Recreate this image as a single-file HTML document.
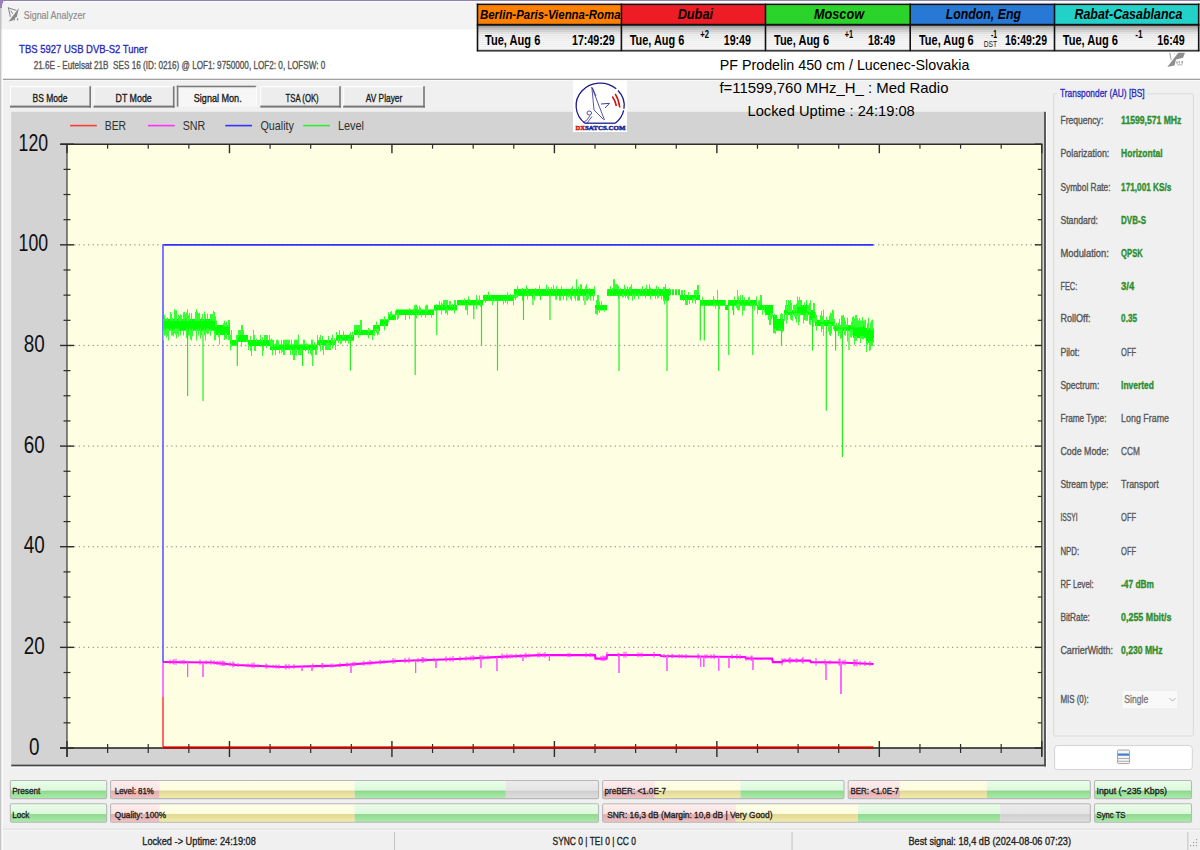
<!DOCTYPE html>
<html><head><meta charset="utf-8"><title>Signal Analyzer</title>
<style>html,body{margin:0;padding:0;width:1200px;height:850px;overflow:hidden;background:#f0f0f0} svg{display:block} text{white-space:pre}</style>
</head><body>
<svg width="1200" height="850" viewBox="0 0 1200 850">
<defs>
<linearGradient id="clk" x1="0" y1="0" x2="0" y2="1">
<stop offset="0" stop-color="#9c9c9c"/><stop offset="0.12" stop-color="#c4c4c4"/><stop offset="0.35" stop-color="#f2f2f2"/><stop offset="1" stop-color="#ffffff"/>
</linearGradient>
<pattern id="stripes" x="0" y="0" width="4" height="2.2" patternUnits="userSpaceOnUse"><rect x="0" y="0" width="4" height="1" fill="#000" fill-opacity="0.06"/></pattern>
<linearGradient id="bt_g" x1="0" y1="0" x2="0" y2="1"><stop offset="0" stop-color="#eafdea"/><stop offset="1" stop-color="#dcf8dc"/></linearGradient>
<linearGradient id="bb_g" x1="0" y1="0" x2="0" y2="1"><stop offset="0" stop-color="#88d488"/><stop offset="0.2" stop-color="#94dc94"/><stop offset="1" stop-color="#aaecaa"/></linearGradient>
<linearGradient id="bt_p" x1="0" y1="0" x2="0" y2="1"><stop offset="0" stop-color="#fdeeee"/><stop offset="1" stop-color="#fbe2e2"/></linearGradient>
<linearGradient id="bb_p" x1="0" y1="0" x2="0" y2="1"><stop offset="0" stop-color="#dca8a8"/><stop offset="0.2" stop-color="#e4b0b0"/><stop offset="1" stop-color="#f0c4c4"/></linearGradient>
<linearGradient id="bt_y" x1="0" y1="0" x2="0" y2="1"><stop offset="0" stop-color="#fefeea"/><stop offset="1" stop-color="#fcfcdc"/></linearGradient>
<linearGradient id="bb_y" x1="0" y1="0" x2="0" y2="1"><stop offset="0" stop-color="#ddd28c"/><stop offset="0.2" stop-color="#e6dc98"/><stop offset="1" stop-color="#f2ecb0"/></linearGradient>
<linearGradient id="bt_n" x1="0" y1="0" x2="0" y2="1"><stop offset="0" stop-color="#ececec"/><stop offset="1" stop-color="#e4e4e4"/></linearGradient>
<linearGradient id="bb_n" x1="0" y1="0" x2="0" y2="1"><stop offset="0" stop-color="#cccccc"/><stop offset="0.2" stop-color="#d2d2d2"/><stop offset="1" stop-color="#dedede"/></linearGradient>
</defs>
<rect x="0.00" y="0.00" width="1200.00" height="850.00" fill="#f0f0f0"/>
<rect x="0.00" y="0.00" width="1200.00" height="1.20" fill="#8c84ac"/>
<rect x="0.00" y="0.00" width="3.00" height="8.00" fill="#9a80b8"/>
<path d="M2,6 Q2,1.5 6,1.5 L1200,1.5 L1200,29.5 L2,29.5 Z" fill="#f3f3f3"/>
<rect x="5.00" y="1.20" width="1195.00" height="1.00" fill="#ffffff"/>
<rect x="0.00" y="8.00" width="1.50" height="842.00" fill="#c4c4c4"/>
<rect x="1.50" y="29.50" width="1.50" height="821.00" fill="#fafafa"/>
<rect x="3.00" y="29.50" width="1197.00" height="49.50" fill="#ffffff"/>
<rect x="3.00" y="78.70" width="1197.00" height="1.30" fill="#a0a0a0"/>
<rect x="3.00" y="80.00" width="1197.00" height="1.00" fill="#f8f8f8"/>
<g fill="none" stroke="#858585" stroke-width="1.0" stroke-linecap="round"><path d="M8.4,7.9 L16,10.3 M8.4,7.9 L10.3,16.5 M11,11 L12.4,13.4"/></g><path d="M18.9,8.0 L17.0,16.2 L12.6,20.6 L8.6,21.6 Z" fill="#8a8a8a"/><rect x="13.7" y="18.2" width="1.3" height="2.2" fill="#8e8e8e"/><rect x="16.9" y="18.2" width="1.3" height="2.2" fill="#8e8e8e"/>
<text x="23.70" y="19.20" font-family="Liberation Sans" font-size="11.52" fill="#8c8c8c" font-weight="normal" font-style="normal" text-anchor="start" textLength="61.7" lengthAdjust="spacingAndGlyphs" stroke="#8c8c8c" stroke-width="0.2">Signal Analyzer</text>
<text x="19.10" y="52.70" font-family="Liberation Sans" font-size="11.80" fill="#2a2ab8" font-weight="normal" font-style="normal" text-anchor="start" textLength="128.2" lengthAdjust="spacingAndGlyphs" stroke="#2a2ab8" stroke-width="0.35">TBS 5927 USB DVB-S2 Tuner</text>
<text x="33.70" y="69.40" font-family="Liberation Sans" font-size="10.97" fill="#555555" font-weight="normal" font-style="normal" text-anchor="start" textLength="291.7" lengthAdjust="spacingAndGlyphs" stroke="#555555" stroke-width="0.35">21.6E - Eutelsat 21B  SES 16 (ID: 0216) @ LOF1: 9750000, LOF2: 0, LOFSW: 0</text>
<rect x="477.50" y="4.30" width="143.90" height="19.70" fill="#ff8000"/>
<rect x="477.50" y="25.70" width="143.90" height="25.10" fill="url(#clk)"/>
<rect x="477.50" y="25.70" width="143.90" height="25.10" fill="url(#stripes)"/>
<text x="480.00" y="19.00" font-family="Liberation Sans" font-size="13.60" fill="#000" font-weight="bold" font-style="italic" text-anchor="start" textLength="140.5" lengthAdjust="spacingAndGlyphs">Berlin-Paris-Vienna-Roma</text>
<rect x="621.40" y="4.30" width="144.10" height="19.70" fill="#ee1c25"/>
<rect x="621.40" y="25.70" width="144.10" height="25.10" fill="url(#clk)"/>
<rect x="621.40" y="25.70" width="144.10" height="25.10" fill="url(#stripes)"/>
<text x="677.70" y="19.00" font-family="Liberation Sans" font-size="14.20" fill="#000" font-weight="bold" font-style="italic" text-anchor="start" textLength="35.3" lengthAdjust="spacingAndGlyphs">Dubai</text>
<rect x="765.50" y="4.30" width="144.70" height="19.70" fill="#2ad42a"/>
<rect x="765.50" y="25.70" width="144.70" height="25.10" fill="url(#clk)"/>
<rect x="765.50" y="25.70" width="144.70" height="25.10" fill="url(#stripes)"/>
<text x="814.00" y="19.00" font-family="Liberation Sans" font-size="14.20" fill="#000" font-weight="bold" font-style="italic" text-anchor="start" textLength="50.0" lengthAdjust="spacingAndGlyphs">Moscow</text>
<rect x="910.20" y="4.30" width="144.30" height="19.70" fill="#2878d6"/>
<rect x="910.20" y="25.70" width="144.30" height="25.10" fill="url(#clk)"/>
<rect x="910.20" y="25.70" width="144.30" height="25.10" fill="url(#stripes)"/>
<text x="945.70" y="19.00" font-family="Liberation Sans" font-size="14.20" fill="#000" font-weight="bold" font-style="italic" text-anchor="start" textLength="75.3" lengthAdjust="spacingAndGlyphs">London, Eng</text>
<rect x="1054.50" y="4.30" width="144.20" height="19.70" fill="#22d2c8"/>
<rect x="1054.50" y="25.70" width="144.20" height="25.10" fill="url(#clk)"/>
<rect x="1054.50" y="25.70" width="144.20" height="25.10" fill="url(#stripes)"/>
<text x="1074.40" y="19.00" font-family="Liberation Sans" font-size="14.20" fill="#000" font-weight="bold" font-style="italic" text-anchor="start" textLength="108.0" lengthAdjust="spacingAndGlyphs">Rabat-Casablanca</text>
<g fill="#111">
<rect x="476.80" y="3.60" width="722.70" height="1.50" fill="#111"/>
<rect x="476.80" y="23.80" width="722.70" height="2.00" fill="#111"/>
<rect x="476.80" y="49.80" width="722.70" height="1.80" fill="#3a3a3a"/>
<rect x="476.70" y="3.60" width="1.60" height="47.60" fill="#111"/>
<rect x="620.60" y="3.60" width="1.60" height="47.60" fill="#111"/>
<rect x="764.70" y="3.60" width="1.60" height="47.60" fill="#111"/>
<rect x="909.40" y="3.60" width="1.60" height="47.60" fill="#111"/>
<rect x="1053.70" y="3.60" width="1.60" height="47.60" fill="#111"/>
<rect x="1197.90" y="3.60" width="1.60" height="47.60" fill="#111"/>
</g>
<text x="485.00" y="45.30" font-family="Liberation Sans" font-size="14.30" fill="#000" font-weight="bold" font-style="normal" text-anchor="start" textLength="55.3" lengthAdjust="spacingAndGlyphs">Tue, Aug 6</text>
<text x="572.00" y="45.30" font-family="Liberation Sans" font-size="14.30" fill="#000" font-weight="bold" font-style="normal" text-anchor="start" textLength="42.7" lengthAdjust="spacingAndGlyphs">17:49:29</text>
<text x="629.70" y="45.30" font-family="Liberation Sans" font-size="14.30" fill="#000" font-weight="bold" font-style="normal" text-anchor="start" textLength="54.6" lengthAdjust="spacingAndGlyphs">Tue, Aug 6</text>
<text x="723.70" y="45.30" font-family="Liberation Sans" font-size="14.30" fill="#000" font-weight="bold" font-style="normal" text-anchor="start" textLength="27.3" lengthAdjust="spacingAndGlyphs">19:49</text>
<text x="700.30" y="37.60" font-family="Liberation Sans" font-size="10.00" fill="#000" font-weight="bold" font-style="normal" text-anchor="start" textLength="8.7" lengthAdjust="spacingAndGlyphs">+2</text>
<text x="774.00" y="45.30" font-family="Liberation Sans" font-size="14.30" fill="#000" font-weight="bold" font-style="normal" text-anchor="start" textLength="55.0" lengthAdjust="spacingAndGlyphs">Tue, Aug 6</text>
<text x="868.00" y="45.30" font-family="Liberation Sans" font-size="14.30" fill="#000" font-weight="bold" font-style="normal" text-anchor="start" textLength="27.3" lengthAdjust="spacingAndGlyphs">18:49</text>
<text x="844.70" y="37.60" font-family="Liberation Sans" font-size="10.00" fill="#000" font-weight="bold" font-style="normal" text-anchor="start" textLength="8.3" lengthAdjust="spacingAndGlyphs">+1</text>
<text x="919.00" y="45.30" font-family="Liberation Sans" font-size="14.30" fill="#000" font-weight="bold" font-style="normal" text-anchor="start" textLength="54.7" lengthAdjust="spacingAndGlyphs">Tue, Aug 6</text>
<text x="1005.00" y="45.30" font-family="Liberation Sans" font-size="14.30" fill="#000" font-weight="bold" font-style="normal" text-anchor="start" textLength="42.0" lengthAdjust="spacingAndGlyphs">16:49:29</text>
<text x="991.00" y="37.60" font-family="Liberation Sans" font-size="10.00" fill="#000" font-weight="bold" font-style="normal" text-anchor="start" textLength="6.0" lengthAdjust="spacingAndGlyphs">-1</text>
<text x="1062.70" y="45.30" font-family="Liberation Sans" font-size="14.30" fill="#000" font-weight="bold" font-style="normal" text-anchor="start" textLength="55.3" lengthAdjust="spacingAndGlyphs">Tue, Aug 6</text>
<text x="1157.30" y="45.30" font-family="Liberation Sans" font-size="14.30" fill="#000" font-weight="bold" font-style="normal" text-anchor="start" textLength="27.4" lengthAdjust="spacingAndGlyphs">16:49</text>
<text x="1135.30" y="37.60" font-family="Liberation Sans" font-size="10.00" fill="#000" font-weight="bold" font-style="normal" text-anchor="start" textLength="7.4" lengthAdjust="spacingAndGlyphs">-1</text>
<text x="983.70" y="47.30" font-family="Liberation Sans" font-size="9.50" fill="#222" font-weight="normal" font-style="normal" text-anchor="start" textLength="13.3" lengthAdjust="spacingAndGlyphs">DST</text>
<g fill="#8e8e8e"><path d="M1167.3,67 L1178.3,52.8 L1185,52.8 L1183,57.8 L1176,59.5 L1174.5,65.5 Z"/><path d="M1169.2,52.8 L1170.3,52.8 L1171.6,60 L1170.8,60 Z" fill="#9a9a9a"/><path d="M1173.5,53 L1175.5,54 L1174.6,54.6 Z" fill="#a0a0a0"/><rect x="1176.3" y="61.2" width="1.3" height="2.5" fill="#a8a8a8"/><rect x="1178.6" y="61.0" width="1.3" height="2.5" fill="#a8a8a8"/><rect x="1181.4" y="61.0" width="1.6" height="2.5" fill="#a8a8a8"/><rect x="1177" y="64.2" width="5.5" height="1.2" fill="#c0c0c0"/></g>
<rect x="10.00" y="86.20" width="81.00" height="21.00" fill="#ededed"/>
<rect x="10.00" y="86.20" width="81.00" height="1.00" fill="#ffffff"/>
<rect x="10.00" y="86.20" width="1.00" height="21.00" fill="#ffffff"/>
<rect x="89.40" y="86.20" width="1.60" height="21.50" fill="#777777"/>
<rect x="10.00" y="105.60" width="81.00" height="2.00" fill="#777777"/>
<text x="32.60" y="101.50" font-family="Liberation Sans" font-size="10.97" fill="#1a1a1a" font-weight="normal" font-style="normal" text-anchor="start" textLength="34.9" lengthAdjust="spacingAndGlyphs" stroke="#1a1a1a" stroke-width="0.35">BS Mode</text>
<rect x="93.50" y="86.20" width="81.00" height="21.00" fill="#ededed"/>
<rect x="93.50" y="86.20" width="81.00" height="1.00" fill="#ffffff"/>
<rect x="93.50" y="86.20" width="1.00" height="21.00" fill="#ffffff"/>
<rect x="172.90" y="86.20" width="1.60" height="21.50" fill="#777777"/>
<rect x="93.50" y="105.60" width="81.00" height="2.00" fill="#777777"/>
<text x="115.50" y="101.50" font-family="Liberation Sans" font-size="10.97" fill="#1a1a1a" font-weight="normal" font-style="normal" text-anchor="start" textLength="36.3" lengthAdjust="spacingAndGlyphs" stroke="#1a1a1a" stroke-width="0.35">DT Mode</text>
<rect x="176.80" y="85.70" width="80.00" height="21.00" fill="#f6f6f6"/>
<rect x="176.80" y="85.70" width="80.00" height="1.60" fill="#7a7a7a"/>
<rect x="176.80" y="85.70" width="1.60" height="21.00" fill="#7a7a7a"/>
<rect x="178.40" y="87.30" width="78.40" height="0.80" fill="#d8d8d8"/>
<rect x="255.80" y="85.70" width="1.00" height="21.00" fill="#ffffff"/>
<text x="193.80" y="102.00" font-family="Liberation Sans" font-size="10.97" fill="#1a1a1a" font-weight="normal" font-style="normal" text-anchor="start" textLength="47.9" lengthAdjust="spacingAndGlyphs" stroke="#1a1a1a" stroke-width="0.35">Signal Mon.</text>
<rect x="260.30" y="86.20" width="80.50" height="21.00" fill="#ededed"/>
<rect x="260.30" y="86.20" width="80.50" height="1.00" fill="#ffffff"/>
<rect x="260.30" y="86.20" width="1.00" height="21.00" fill="#ffffff"/>
<rect x="339.20" y="86.20" width="1.60" height="21.50" fill="#777777"/>
<rect x="260.30" y="105.60" width="80.50" height="2.00" fill="#777777"/>
<text x="285.50" y="101.50" font-family="Liberation Sans" font-size="10.97" fill="#1a1a1a" font-weight="normal" font-style="normal" text-anchor="start" textLength="33.2" lengthAdjust="spacingAndGlyphs" stroke="#1a1a1a" stroke-width="0.35">TSA (OK)</text>
<rect x="343.20" y="86.20" width="81.60" height="21.00" fill="#ededed"/>
<rect x="343.20" y="86.20" width="81.60" height="1.00" fill="#ffffff"/>
<rect x="343.20" y="86.20" width="1.00" height="21.00" fill="#ffffff"/>
<rect x="423.20" y="86.20" width="1.60" height="21.50" fill="#777777"/>
<rect x="343.20" y="105.60" width="81.60" height="2.00" fill="#777777"/>
<text x="365.80" y="101.50" font-family="Liberation Sans" font-size="10.97" fill="#1a1a1a" font-weight="normal" font-style="normal" text-anchor="start" textLength="36.4" lengthAdjust="spacingAndGlyphs" stroke="#1a1a1a" stroke-width="0.35">AV Player</text>
<rect x="11.20" y="111.80" width="1033.60" height="654.00" fill="#d3d3d3"/>
<rect x="1044.00" y="111.80" width="2.00" height="655.50" fill="#5a5a5a"/>
<rect x="11.20" y="764.60" width="1034.80" height="2.00" fill="#4a4a4a"/>
<rect x="1046.00" y="111.80" width="1.00" height="656.00" fill="#ffffff"/>
<rect x="11.20" y="766.60" width="1035.80" height="1.00" fill="#ffffff"/>
<rect x="67.00" y="144.20" width="974.80" height="603.80" fill="#fefee3"/>
<line x1="70.10" y1="125.60" x2="96.80" y2="125.60" stroke="#ff3b3b" stroke-width="1.6"/>
<text x="104.80" y="130.10" font-family="Liberation Sans" font-size="13.17" fill="#303030" font-weight="normal" font-style="normal" text-anchor="start" textLength="21.3" lengthAdjust="spacingAndGlyphs">BER</text>
<line x1="148.00" y1="125.60" x2="174.70" y2="125.60" stroke="#ff33ff" stroke-width="1.6"/>
<text x="182.70" y="130.10" font-family="Liberation Sans" font-size="13.17" fill="#303030" font-weight="normal" font-style="normal" text-anchor="start" textLength="22.6" lengthAdjust="spacingAndGlyphs">SNR</text>
<line x1="225.30" y1="125.60" x2="252.00" y2="125.60" stroke="#3434ff" stroke-width="1.6"/>
<text x="260.50" y="130.10" font-family="Liberation Sans" font-size="13.17" fill="#303030" font-weight="normal" font-style="normal" text-anchor="start" textLength="33.4" lengthAdjust="spacingAndGlyphs">Quality</text>
<line x1="303.20" y1="125.60" x2="329.90" y2="125.60" stroke="#33ee33" stroke-width="1.6"/>
<text x="337.90" y="130.10" font-family="Liberation Sans" font-size="13.17" fill="#303030" font-weight="normal" font-style="normal" text-anchor="start" textLength="26.1" lengthAdjust="spacingAndGlyphs">Level</text>
<text x="18.55" y="150.80" font-family="Liberation Sans" font-size="24.42" fill="#111" font-weight="normal" font-style="normal" text-anchor="start" textLength="29.5" lengthAdjust="spacingAndGlyphs">120</text>
<text x="18.55" y="251.43" font-family="Liberation Sans" font-size="24.42" fill="#111" font-weight="normal" font-style="normal" text-anchor="start" textLength="29.5" lengthAdjust="spacingAndGlyphs">100</text>
<text x="23.80" y="352.07" font-family="Liberation Sans" font-size="24.42" fill="#111" font-weight="normal" font-style="normal" text-anchor="start" textLength="21.0" lengthAdjust="spacingAndGlyphs">80</text>
<text x="23.80" y="452.70" font-family="Liberation Sans" font-size="24.42" fill="#111" font-weight="normal" font-style="normal" text-anchor="start" textLength="21.0" lengthAdjust="spacingAndGlyphs">60</text>
<text x="23.80" y="553.33" font-family="Liberation Sans" font-size="24.42" fill="#111" font-weight="normal" font-style="normal" text-anchor="start" textLength="21.0" lengthAdjust="spacingAndGlyphs">40</text>
<text x="23.80" y="653.97" font-family="Liberation Sans" font-size="24.42" fill="#111" font-weight="normal" font-style="normal" text-anchor="start" textLength="21.0" lengthAdjust="spacingAndGlyphs">20</text>
<text x="29.05" y="754.60" font-family="Liberation Sans" font-size="24.42" fill="#111" font-weight="normal" font-style="normal" text-anchor="start" textLength="10.5" lengthAdjust="spacingAndGlyphs">0</text>
<g fill="#9a9a90">
<rect x="69.50" y="646.77" width="1.30" height="1.20" fill="#9a9a8e"/>
<rect x="74.12" y="646.77" width="1.30" height="1.20" fill="#9a9a8e"/>
<rect x="78.74" y="646.77" width="1.30" height="1.20" fill="#9a9a8e"/>
<rect x="83.36" y="646.77" width="1.30" height="1.20" fill="#9a9a8e"/>
<rect x="87.98" y="646.77" width="1.30" height="1.20" fill="#9a9a8e"/>
<rect x="92.60" y="646.77" width="1.30" height="1.20" fill="#9a9a8e"/>
<rect x="97.22" y="646.77" width="1.30" height="1.20" fill="#9a9a8e"/>
<rect x="101.84" y="646.77" width="1.30" height="1.20" fill="#9a9a8e"/>
<rect x="106.46" y="646.77" width="1.30" height="1.20" fill="#9a9a8e"/>
<rect x="111.08" y="646.77" width="1.30" height="1.20" fill="#9a9a8e"/>
<rect x="115.70" y="646.77" width="1.30" height="1.20" fill="#9a9a8e"/>
<rect x="120.32" y="646.77" width="1.30" height="1.20" fill="#9a9a8e"/>
<rect x="124.94" y="646.77" width="1.30" height="1.20" fill="#9a9a8e"/>
<rect x="129.56" y="646.77" width="1.30" height="1.20" fill="#9a9a8e"/>
<rect x="134.18" y="646.77" width="1.30" height="1.20" fill="#9a9a8e"/>
<rect x="138.80" y="646.77" width="1.30" height="1.20" fill="#9a9a8e"/>
<rect x="143.42" y="646.77" width="1.30" height="1.20" fill="#9a9a8e"/>
<rect x="148.04" y="646.77" width="1.30" height="1.20" fill="#9a9a8e"/>
<rect x="152.66" y="646.77" width="1.30" height="1.20" fill="#9a9a8e"/>
<rect x="157.28" y="646.77" width="1.30" height="1.20" fill="#9a9a8e"/>
<rect x="161.90" y="646.77" width="1.30" height="1.20" fill="#9a9a8e"/>
<rect x="166.52" y="646.77" width="1.30" height="1.20" fill="#9a9a8e"/>
<rect x="171.14" y="646.77" width="1.30" height="1.20" fill="#9a9a8e"/>
<rect x="175.76" y="646.77" width="1.30" height="1.20" fill="#9a9a8e"/>
<rect x="180.38" y="646.77" width="1.30" height="1.20" fill="#9a9a8e"/>
<rect x="185.00" y="646.77" width="1.30" height="1.20" fill="#9a9a8e"/>
<rect x="189.62" y="646.77" width="1.30" height="1.20" fill="#9a9a8e"/>
<rect x="194.24" y="646.77" width="1.30" height="1.20" fill="#9a9a8e"/>
<rect x="198.86" y="646.77" width="1.30" height="1.20" fill="#9a9a8e"/>
<rect x="203.48" y="646.77" width="1.30" height="1.20" fill="#9a9a8e"/>
<rect x="208.10" y="646.77" width="1.30" height="1.20" fill="#9a9a8e"/>
<rect x="212.72" y="646.77" width="1.30" height="1.20" fill="#9a9a8e"/>
<rect x="217.34" y="646.77" width="1.30" height="1.20" fill="#9a9a8e"/>
<rect x="221.96" y="646.77" width="1.30" height="1.20" fill="#9a9a8e"/>
<rect x="226.58" y="646.77" width="1.30" height="1.20" fill="#9a9a8e"/>
<rect x="231.20" y="646.77" width="1.30" height="1.20" fill="#9a9a8e"/>
<rect x="235.82" y="646.77" width="1.30" height="1.20" fill="#9a9a8e"/>
<rect x="240.44" y="646.77" width="1.30" height="1.20" fill="#9a9a8e"/>
<rect x="245.06" y="646.77" width="1.30" height="1.20" fill="#9a9a8e"/>
<rect x="249.68" y="646.77" width="1.30" height="1.20" fill="#9a9a8e"/>
<rect x="254.30" y="646.77" width="1.30" height="1.20" fill="#9a9a8e"/>
<rect x="258.92" y="646.77" width="1.30" height="1.20" fill="#9a9a8e"/>
<rect x="263.54" y="646.77" width="1.30" height="1.20" fill="#9a9a8e"/>
<rect x="268.16" y="646.77" width="1.30" height="1.20" fill="#9a9a8e"/>
<rect x="272.78" y="646.77" width="1.30" height="1.20" fill="#9a9a8e"/>
<rect x="277.40" y="646.77" width="1.30" height="1.20" fill="#9a9a8e"/>
<rect x="282.02" y="646.77" width="1.30" height="1.20" fill="#9a9a8e"/>
<rect x="286.64" y="646.77" width="1.30" height="1.20" fill="#9a9a8e"/>
<rect x="291.26" y="646.77" width="1.30" height="1.20" fill="#9a9a8e"/>
<rect x="295.88" y="646.77" width="1.30" height="1.20" fill="#9a9a8e"/>
<rect x="300.50" y="646.77" width="1.30" height="1.20" fill="#9a9a8e"/>
<rect x="305.12" y="646.77" width="1.30" height="1.20" fill="#9a9a8e"/>
<rect x="309.74" y="646.77" width="1.30" height="1.20" fill="#9a9a8e"/>
<rect x="314.36" y="646.77" width="1.30" height="1.20" fill="#9a9a8e"/>
<rect x="318.98" y="646.77" width="1.30" height="1.20" fill="#9a9a8e"/>
<rect x="323.60" y="646.77" width="1.30" height="1.20" fill="#9a9a8e"/>
<rect x="328.22" y="646.77" width="1.30" height="1.20" fill="#9a9a8e"/>
<rect x="332.84" y="646.77" width="1.30" height="1.20" fill="#9a9a8e"/>
<rect x="337.46" y="646.77" width="1.30" height="1.20" fill="#9a9a8e"/>
<rect x="342.08" y="646.77" width="1.30" height="1.20" fill="#9a9a8e"/>
<rect x="346.70" y="646.77" width="1.30" height="1.20" fill="#9a9a8e"/>
<rect x="351.32" y="646.77" width="1.30" height="1.20" fill="#9a9a8e"/>
<rect x="355.94" y="646.77" width="1.30" height="1.20" fill="#9a9a8e"/>
<rect x="360.56" y="646.77" width="1.30" height="1.20" fill="#9a9a8e"/>
<rect x="365.18" y="646.77" width="1.30" height="1.20" fill="#9a9a8e"/>
<rect x="369.80" y="646.77" width="1.30" height="1.20" fill="#9a9a8e"/>
<rect x="374.42" y="646.77" width="1.30" height="1.20" fill="#9a9a8e"/>
<rect x="379.04" y="646.77" width="1.30" height="1.20" fill="#9a9a8e"/>
<rect x="383.66" y="646.77" width="1.30" height="1.20" fill="#9a9a8e"/>
<rect x="388.28" y="646.77" width="1.30" height="1.20" fill="#9a9a8e"/>
<rect x="392.90" y="646.77" width="1.30" height="1.20" fill="#9a9a8e"/>
<rect x="397.52" y="646.77" width="1.30" height="1.20" fill="#9a9a8e"/>
<rect x="402.14" y="646.77" width="1.30" height="1.20" fill="#9a9a8e"/>
<rect x="406.76" y="646.77" width="1.30" height="1.20" fill="#9a9a8e"/>
<rect x="411.38" y="646.77" width="1.30" height="1.20" fill="#9a9a8e"/>
<rect x="416.00" y="646.77" width="1.30" height="1.20" fill="#9a9a8e"/>
<rect x="420.62" y="646.77" width="1.30" height="1.20" fill="#9a9a8e"/>
<rect x="425.24" y="646.77" width="1.30" height="1.20" fill="#9a9a8e"/>
<rect x="429.86" y="646.77" width="1.30" height="1.20" fill="#9a9a8e"/>
<rect x="434.48" y="646.77" width="1.30" height="1.20" fill="#9a9a8e"/>
<rect x="439.10" y="646.77" width="1.30" height="1.20" fill="#9a9a8e"/>
<rect x="443.72" y="646.77" width="1.30" height="1.20" fill="#9a9a8e"/>
<rect x="448.34" y="646.77" width="1.30" height="1.20" fill="#9a9a8e"/>
<rect x="452.96" y="646.77" width="1.30" height="1.20" fill="#9a9a8e"/>
<rect x="457.58" y="646.77" width="1.30" height="1.20" fill="#9a9a8e"/>
<rect x="462.20" y="646.77" width="1.30" height="1.20" fill="#9a9a8e"/>
<rect x="466.82" y="646.77" width="1.30" height="1.20" fill="#9a9a8e"/>
<rect x="471.44" y="646.77" width="1.30" height="1.20" fill="#9a9a8e"/>
<rect x="476.06" y="646.77" width="1.30" height="1.20" fill="#9a9a8e"/>
<rect x="480.68" y="646.77" width="1.30" height="1.20" fill="#9a9a8e"/>
<rect x="485.30" y="646.77" width="1.30" height="1.20" fill="#9a9a8e"/>
<rect x="489.92" y="646.77" width="1.30" height="1.20" fill="#9a9a8e"/>
<rect x="494.54" y="646.77" width="1.30" height="1.20" fill="#9a9a8e"/>
<rect x="499.16" y="646.77" width="1.30" height="1.20" fill="#9a9a8e"/>
<rect x="503.78" y="646.77" width="1.30" height="1.20" fill="#9a9a8e"/>
<rect x="508.40" y="646.77" width="1.30" height="1.20" fill="#9a9a8e"/>
<rect x="513.02" y="646.77" width="1.30" height="1.20" fill="#9a9a8e"/>
<rect x="517.64" y="646.77" width="1.30" height="1.20" fill="#9a9a8e"/>
<rect x="522.26" y="646.77" width="1.30" height="1.20" fill="#9a9a8e"/>
<rect x="526.88" y="646.77" width="1.30" height="1.20" fill="#9a9a8e"/>
<rect x="531.50" y="646.77" width="1.30" height="1.20" fill="#9a9a8e"/>
<rect x="536.12" y="646.77" width="1.30" height="1.20" fill="#9a9a8e"/>
<rect x="540.74" y="646.77" width="1.30" height="1.20" fill="#9a9a8e"/>
<rect x="545.36" y="646.77" width="1.30" height="1.20" fill="#9a9a8e"/>
<rect x="549.98" y="646.77" width="1.30" height="1.20" fill="#9a9a8e"/>
<rect x="554.60" y="646.77" width="1.30" height="1.20" fill="#9a9a8e"/>
<rect x="559.22" y="646.77" width="1.30" height="1.20" fill="#9a9a8e"/>
<rect x="563.84" y="646.77" width="1.30" height="1.20" fill="#9a9a8e"/>
<rect x="568.46" y="646.77" width="1.30" height="1.20" fill="#9a9a8e"/>
<rect x="573.08" y="646.77" width="1.30" height="1.20" fill="#9a9a8e"/>
<rect x="577.70" y="646.77" width="1.30" height="1.20" fill="#9a9a8e"/>
<rect x="582.32" y="646.77" width="1.30" height="1.20" fill="#9a9a8e"/>
<rect x="586.94" y="646.77" width="1.30" height="1.20" fill="#9a9a8e"/>
<rect x="591.56" y="646.77" width="1.30" height="1.20" fill="#9a9a8e"/>
<rect x="596.18" y="646.77" width="1.30" height="1.20" fill="#9a9a8e"/>
<rect x="600.80" y="646.77" width="1.30" height="1.20" fill="#9a9a8e"/>
<rect x="605.42" y="646.77" width="1.30" height="1.20" fill="#9a9a8e"/>
<rect x="610.04" y="646.77" width="1.30" height="1.20" fill="#9a9a8e"/>
<rect x="614.66" y="646.77" width="1.30" height="1.20" fill="#9a9a8e"/>
<rect x="619.28" y="646.77" width="1.30" height="1.20" fill="#9a9a8e"/>
<rect x="623.90" y="646.77" width="1.30" height="1.20" fill="#9a9a8e"/>
<rect x="628.52" y="646.77" width="1.30" height="1.20" fill="#9a9a8e"/>
<rect x="633.14" y="646.77" width="1.30" height="1.20" fill="#9a9a8e"/>
<rect x="637.76" y="646.77" width="1.30" height="1.20" fill="#9a9a8e"/>
<rect x="642.38" y="646.77" width="1.30" height="1.20" fill="#9a9a8e"/>
<rect x="647.00" y="646.77" width="1.30" height="1.20" fill="#9a9a8e"/>
<rect x="651.62" y="646.77" width="1.30" height="1.20" fill="#9a9a8e"/>
<rect x="656.24" y="646.77" width="1.30" height="1.20" fill="#9a9a8e"/>
<rect x="660.86" y="646.77" width="1.30" height="1.20" fill="#9a9a8e"/>
<rect x="665.48" y="646.77" width="1.30" height="1.20" fill="#9a9a8e"/>
<rect x="670.10" y="646.77" width="1.30" height="1.20" fill="#9a9a8e"/>
<rect x="674.72" y="646.77" width="1.30" height="1.20" fill="#9a9a8e"/>
<rect x="679.34" y="646.77" width="1.30" height="1.20" fill="#9a9a8e"/>
<rect x="683.96" y="646.77" width="1.30" height="1.20" fill="#9a9a8e"/>
<rect x="688.58" y="646.77" width="1.30" height="1.20" fill="#9a9a8e"/>
<rect x="693.20" y="646.77" width="1.30" height="1.20" fill="#9a9a8e"/>
<rect x="697.82" y="646.77" width="1.30" height="1.20" fill="#9a9a8e"/>
<rect x="702.44" y="646.77" width="1.30" height="1.20" fill="#9a9a8e"/>
<rect x="707.06" y="646.77" width="1.30" height="1.20" fill="#9a9a8e"/>
<rect x="711.68" y="646.77" width="1.30" height="1.20" fill="#9a9a8e"/>
<rect x="716.30" y="646.77" width="1.30" height="1.20" fill="#9a9a8e"/>
<rect x="720.92" y="646.77" width="1.30" height="1.20" fill="#9a9a8e"/>
<rect x="725.54" y="646.77" width="1.30" height="1.20" fill="#9a9a8e"/>
<rect x="730.16" y="646.77" width="1.30" height="1.20" fill="#9a9a8e"/>
<rect x="734.78" y="646.77" width="1.30" height="1.20" fill="#9a9a8e"/>
<rect x="739.40" y="646.77" width="1.30" height="1.20" fill="#9a9a8e"/>
<rect x="744.02" y="646.77" width="1.30" height="1.20" fill="#9a9a8e"/>
<rect x="748.64" y="646.77" width="1.30" height="1.20" fill="#9a9a8e"/>
<rect x="753.26" y="646.77" width="1.30" height="1.20" fill="#9a9a8e"/>
<rect x="757.88" y="646.77" width="1.30" height="1.20" fill="#9a9a8e"/>
<rect x="762.50" y="646.77" width="1.30" height="1.20" fill="#9a9a8e"/>
<rect x="767.12" y="646.77" width="1.30" height="1.20" fill="#9a9a8e"/>
<rect x="771.74" y="646.77" width="1.30" height="1.20" fill="#9a9a8e"/>
<rect x="776.36" y="646.77" width="1.30" height="1.20" fill="#9a9a8e"/>
<rect x="780.98" y="646.77" width="1.30" height="1.20" fill="#9a9a8e"/>
<rect x="785.60" y="646.77" width="1.30" height="1.20" fill="#9a9a8e"/>
<rect x="790.22" y="646.77" width="1.30" height="1.20" fill="#9a9a8e"/>
<rect x="794.84" y="646.77" width="1.30" height="1.20" fill="#9a9a8e"/>
<rect x="799.46" y="646.77" width="1.30" height="1.20" fill="#9a9a8e"/>
<rect x="804.08" y="646.77" width="1.30" height="1.20" fill="#9a9a8e"/>
<rect x="808.70" y="646.77" width="1.30" height="1.20" fill="#9a9a8e"/>
<rect x="813.32" y="646.77" width="1.30" height="1.20" fill="#9a9a8e"/>
<rect x="817.94" y="646.77" width="1.30" height="1.20" fill="#9a9a8e"/>
<rect x="822.56" y="646.77" width="1.30" height="1.20" fill="#9a9a8e"/>
<rect x="827.18" y="646.77" width="1.30" height="1.20" fill="#9a9a8e"/>
<rect x="831.80" y="646.77" width="1.30" height="1.20" fill="#9a9a8e"/>
<rect x="836.42" y="646.77" width="1.30" height="1.20" fill="#9a9a8e"/>
<rect x="841.04" y="646.77" width="1.30" height="1.20" fill="#9a9a8e"/>
<rect x="845.66" y="646.77" width="1.30" height="1.20" fill="#9a9a8e"/>
<rect x="850.28" y="646.77" width="1.30" height="1.20" fill="#9a9a8e"/>
<rect x="854.90" y="646.77" width="1.30" height="1.20" fill="#9a9a8e"/>
<rect x="859.52" y="646.77" width="1.30" height="1.20" fill="#9a9a8e"/>
<rect x="864.14" y="646.77" width="1.30" height="1.20" fill="#9a9a8e"/>
<rect x="868.76" y="646.77" width="1.30" height="1.20" fill="#9a9a8e"/>
<rect x="873.38" y="646.77" width="1.30" height="1.20" fill="#9a9a8e"/>
<rect x="878.00" y="646.77" width="1.30" height="1.20" fill="#9a9a8e"/>
<rect x="882.62" y="646.77" width="1.30" height="1.20" fill="#9a9a8e"/>
<rect x="887.24" y="646.77" width="1.30" height="1.20" fill="#9a9a8e"/>
<rect x="891.86" y="646.77" width="1.30" height="1.20" fill="#9a9a8e"/>
<rect x="896.48" y="646.77" width="1.30" height="1.20" fill="#9a9a8e"/>
<rect x="901.10" y="646.77" width="1.30" height="1.20" fill="#9a9a8e"/>
<rect x="905.72" y="646.77" width="1.30" height="1.20" fill="#9a9a8e"/>
<rect x="910.34" y="646.77" width="1.30" height="1.20" fill="#9a9a8e"/>
<rect x="914.96" y="646.77" width="1.30" height="1.20" fill="#9a9a8e"/>
<rect x="919.58" y="646.77" width="1.30" height="1.20" fill="#9a9a8e"/>
<rect x="924.20" y="646.77" width="1.30" height="1.20" fill="#9a9a8e"/>
<rect x="928.82" y="646.77" width="1.30" height="1.20" fill="#9a9a8e"/>
<rect x="933.44" y="646.77" width="1.30" height="1.20" fill="#9a9a8e"/>
<rect x="938.06" y="646.77" width="1.30" height="1.20" fill="#9a9a8e"/>
<rect x="942.68" y="646.77" width="1.30" height="1.20" fill="#9a9a8e"/>
<rect x="947.30" y="646.77" width="1.30" height="1.20" fill="#9a9a8e"/>
<rect x="951.92" y="646.77" width="1.30" height="1.20" fill="#9a9a8e"/>
<rect x="956.54" y="646.77" width="1.30" height="1.20" fill="#9a9a8e"/>
<rect x="961.16" y="646.77" width="1.30" height="1.20" fill="#9a9a8e"/>
<rect x="965.78" y="646.77" width="1.30" height="1.20" fill="#9a9a8e"/>
<rect x="970.40" y="646.77" width="1.30" height="1.20" fill="#9a9a8e"/>
<rect x="975.02" y="646.77" width="1.30" height="1.20" fill="#9a9a8e"/>
<rect x="979.64" y="646.77" width="1.30" height="1.20" fill="#9a9a8e"/>
<rect x="984.26" y="646.77" width="1.30" height="1.20" fill="#9a9a8e"/>
<rect x="988.88" y="646.77" width="1.30" height="1.20" fill="#9a9a8e"/>
<rect x="993.50" y="646.77" width="1.30" height="1.20" fill="#9a9a8e"/>
<rect x="998.12" y="646.77" width="1.30" height="1.20" fill="#9a9a8e"/>
<rect x="1002.74" y="646.77" width="1.30" height="1.20" fill="#9a9a8e"/>
<rect x="1007.36" y="646.77" width="1.30" height="1.20" fill="#9a9a8e"/>
<rect x="1011.98" y="646.77" width="1.30" height="1.20" fill="#9a9a8e"/>
<rect x="1016.60" y="646.77" width="1.30" height="1.20" fill="#9a9a8e"/>
<rect x="1021.22" y="646.77" width="1.30" height="1.20" fill="#9a9a8e"/>
<rect x="1025.84" y="646.77" width="1.30" height="1.20" fill="#9a9a8e"/>
<rect x="1030.46" y="646.77" width="1.30" height="1.20" fill="#9a9a8e"/>
<rect x="1035.08" y="646.77" width="1.30" height="1.20" fill="#9a9a8e"/>
<rect x="69.50" y="546.13" width="1.30" height="1.20" fill="#9a9a8e"/>
<rect x="74.12" y="546.13" width="1.30" height="1.20" fill="#9a9a8e"/>
<rect x="78.74" y="546.13" width="1.30" height="1.20" fill="#9a9a8e"/>
<rect x="83.36" y="546.13" width="1.30" height="1.20" fill="#9a9a8e"/>
<rect x="87.98" y="546.13" width="1.30" height="1.20" fill="#9a9a8e"/>
<rect x="92.60" y="546.13" width="1.30" height="1.20" fill="#9a9a8e"/>
<rect x="97.22" y="546.13" width="1.30" height="1.20" fill="#9a9a8e"/>
<rect x="101.84" y="546.13" width="1.30" height="1.20" fill="#9a9a8e"/>
<rect x="106.46" y="546.13" width="1.30" height="1.20" fill="#9a9a8e"/>
<rect x="111.08" y="546.13" width="1.30" height="1.20" fill="#9a9a8e"/>
<rect x="115.70" y="546.13" width="1.30" height="1.20" fill="#9a9a8e"/>
<rect x="120.32" y="546.13" width="1.30" height="1.20" fill="#9a9a8e"/>
<rect x="124.94" y="546.13" width="1.30" height="1.20" fill="#9a9a8e"/>
<rect x="129.56" y="546.13" width="1.30" height="1.20" fill="#9a9a8e"/>
<rect x="134.18" y="546.13" width="1.30" height="1.20" fill="#9a9a8e"/>
<rect x="138.80" y="546.13" width="1.30" height="1.20" fill="#9a9a8e"/>
<rect x="143.42" y="546.13" width="1.30" height="1.20" fill="#9a9a8e"/>
<rect x="148.04" y="546.13" width="1.30" height="1.20" fill="#9a9a8e"/>
<rect x="152.66" y="546.13" width="1.30" height="1.20" fill="#9a9a8e"/>
<rect x="157.28" y="546.13" width="1.30" height="1.20" fill="#9a9a8e"/>
<rect x="161.90" y="546.13" width="1.30" height="1.20" fill="#9a9a8e"/>
<rect x="166.52" y="546.13" width="1.30" height="1.20" fill="#9a9a8e"/>
<rect x="171.14" y="546.13" width="1.30" height="1.20" fill="#9a9a8e"/>
<rect x="175.76" y="546.13" width="1.30" height="1.20" fill="#9a9a8e"/>
<rect x="180.38" y="546.13" width="1.30" height="1.20" fill="#9a9a8e"/>
<rect x="185.00" y="546.13" width="1.30" height="1.20" fill="#9a9a8e"/>
<rect x="189.62" y="546.13" width="1.30" height="1.20" fill="#9a9a8e"/>
<rect x="194.24" y="546.13" width="1.30" height="1.20" fill="#9a9a8e"/>
<rect x="198.86" y="546.13" width="1.30" height="1.20" fill="#9a9a8e"/>
<rect x="203.48" y="546.13" width="1.30" height="1.20" fill="#9a9a8e"/>
<rect x="208.10" y="546.13" width="1.30" height="1.20" fill="#9a9a8e"/>
<rect x="212.72" y="546.13" width="1.30" height="1.20" fill="#9a9a8e"/>
<rect x="217.34" y="546.13" width="1.30" height="1.20" fill="#9a9a8e"/>
<rect x="221.96" y="546.13" width="1.30" height="1.20" fill="#9a9a8e"/>
<rect x="226.58" y="546.13" width="1.30" height="1.20" fill="#9a9a8e"/>
<rect x="231.20" y="546.13" width="1.30" height="1.20" fill="#9a9a8e"/>
<rect x="235.82" y="546.13" width="1.30" height="1.20" fill="#9a9a8e"/>
<rect x="240.44" y="546.13" width="1.30" height="1.20" fill="#9a9a8e"/>
<rect x="245.06" y="546.13" width="1.30" height="1.20" fill="#9a9a8e"/>
<rect x="249.68" y="546.13" width="1.30" height="1.20" fill="#9a9a8e"/>
<rect x="254.30" y="546.13" width="1.30" height="1.20" fill="#9a9a8e"/>
<rect x="258.92" y="546.13" width="1.30" height="1.20" fill="#9a9a8e"/>
<rect x="263.54" y="546.13" width="1.30" height="1.20" fill="#9a9a8e"/>
<rect x="268.16" y="546.13" width="1.30" height="1.20" fill="#9a9a8e"/>
<rect x="272.78" y="546.13" width="1.30" height="1.20" fill="#9a9a8e"/>
<rect x="277.40" y="546.13" width="1.30" height="1.20" fill="#9a9a8e"/>
<rect x="282.02" y="546.13" width="1.30" height="1.20" fill="#9a9a8e"/>
<rect x="286.64" y="546.13" width="1.30" height="1.20" fill="#9a9a8e"/>
<rect x="291.26" y="546.13" width="1.30" height="1.20" fill="#9a9a8e"/>
<rect x="295.88" y="546.13" width="1.30" height="1.20" fill="#9a9a8e"/>
<rect x="300.50" y="546.13" width="1.30" height="1.20" fill="#9a9a8e"/>
<rect x="305.12" y="546.13" width="1.30" height="1.20" fill="#9a9a8e"/>
<rect x="309.74" y="546.13" width="1.30" height="1.20" fill="#9a9a8e"/>
<rect x="314.36" y="546.13" width="1.30" height="1.20" fill="#9a9a8e"/>
<rect x="318.98" y="546.13" width="1.30" height="1.20" fill="#9a9a8e"/>
<rect x="323.60" y="546.13" width="1.30" height="1.20" fill="#9a9a8e"/>
<rect x="328.22" y="546.13" width="1.30" height="1.20" fill="#9a9a8e"/>
<rect x="332.84" y="546.13" width="1.30" height="1.20" fill="#9a9a8e"/>
<rect x="337.46" y="546.13" width="1.30" height="1.20" fill="#9a9a8e"/>
<rect x="342.08" y="546.13" width="1.30" height="1.20" fill="#9a9a8e"/>
<rect x="346.70" y="546.13" width="1.30" height="1.20" fill="#9a9a8e"/>
<rect x="351.32" y="546.13" width="1.30" height="1.20" fill="#9a9a8e"/>
<rect x="355.94" y="546.13" width="1.30" height="1.20" fill="#9a9a8e"/>
<rect x="360.56" y="546.13" width="1.30" height="1.20" fill="#9a9a8e"/>
<rect x="365.18" y="546.13" width="1.30" height="1.20" fill="#9a9a8e"/>
<rect x="369.80" y="546.13" width="1.30" height="1.20" fill="#9a9a8e"/>
<rect x="374.42" y="546.13" width="1.30" height="1.20" fill="#9a9a8e"/>
<rect x="379.04" y="546.13" width="1.30" height="1.20" fill="#9a9a8e"/>
<rect x="383.66" y="546.13" width="1.30" height="1.20" fill="#9a9a8e"/>
<rect x="388.28" y="546.13" width="1.30" height="1.20" fill="#9a9a8e"/>
<rect x="392.90" y="546.13" width="1.30" height="1.20" fill="#9a9a8e"/>
<rect x="397.52" y="546.13" width="1.30" height="1.20" fill="#9a9a8e"/>
<rect x="402.14" y="546.13" width="1.30" height="1.20" fill="#9a9a8e"/>
<rect x="406.76" y="546.13" width="1.30" height="1.20" fill="#9a9a8e"/>
<rect x="411.38" y="546.13" width="1.30" height="1.20" fill="#9a9a8e"/>
<rect x="416.00" y="546.13" width="1.30" height="1.20" fill="#9a9a8e"/>
<rect x="420.62" y="546.13" width="1.30" height="1.20" fill="#9a9a8e"/>
<rect x="425.24" y="546.13" width="1.30" height="1.20" fill="#9a9a8e"/>
<rect x="429.86" y="546.13" width="1.30" height="1.20" fill="#9a9a8e"/>
<rect x="434.48" y="546.13" width="1.30" height="1.20" fill="#9a9a8e"/>
<rect x="439.10" y="546.13" width="1.30" height="1.20" fill="#9a9a8e"/>
<rect x="443.72" y="546.13" width="1.30" height="1.20" fill="#9a9a8e"/>
<rect x="448.34" y="546.13" width="1.30" height="1.20" fill="#9a9a8e"/>
<rect x="452.96" y="546.13" width="1.30" height="1.20" fill="#9a9a8e"/>
<rect x="457.58" y="546.13" width="1.30" height="1.20" fill="#9a9a8e"/>
<rect x="462.20" y="546.13" width="1.30" height="1.20" fill="#9a9a8e"/>
<rect x="466.82" y="546.13" width="1.30" height="1.20" fill="#9a9a8e"/>
<rect x="471.44" y="546.13" width="1.30" height="1.20" fill="#9a9a8e"/>
<rect x="476.06" y="546.13" width="1.30" height="1.20" fill="#9a9a8e"/>
<rect x="480.68" y="546.13" width="1.30" height="1.20" fill="#9a9a8e"/>
<rect x="485.30" y="546.13" width="1.30" height="1.20" fill="#9a9a8e"/>
<rect x="489.92" y="546.13" width="1.30" height="1.20" fill="#9a9a8e"/>
<rect x="494.54" y="546.13" width="1.30" height="1.20" fill="#9a9a8e"/>
<rect x="499.16" y="546.13" width="1.30" height="1.20" fill="#9a9a8e"/>
<rect x="503.78" y="546.13" width="1.30" height="1.20" fill="#9a9a8e"/>
<rect x="508.40" y="546.13" width="1.30" height="1.20" fill="#9a9a8e"/>
<rect x="513.02" y="546.13" width="1.30" height="1.20" fill="#9a9a8e"/>
<rect x="517.64" y="546.13" width="1.30" height="1.20" fill="#9a9a8e"/>
<rect x="522.26" y="546.13" width="1.30" height="1.20" fill="#9a9a8e"/>
<rect x="526.88" y="546.13" width="1.30" height="1.20" fill="#9a9a8e"/>
<rect x="531.50" y="546.13" width="1.30" height="1.20" fill="#9a9a8e"/>
<rect x="536.12" y="546.13" width="1.30" height="1.20" fill="#9a9a8e"/>
<rect x="540.74" y="546.13" width="1.30" height="1.20" fill="#9a9a8e"/>
<rect x="545.36" y="546.13" width="1.30" height="1.20" fill="#9a9a8e"/>
<rect x="549.98" y="546.13" width="1.30" height="1.20" fill="#9a9a8e"/>
<rect x="554.60" y="546.13" width="1.30" height="1.20" fill="#9a9a8e"/>
<rect x="559.22" y="546.13" width="1.30" height="1.20" fill="#9a9a8e"/>
<rect x="563.84" y="546.13" width="1.30" height="1.20" fill="#9a9a8e"/>
<rect x="568.46" y="546.13" width="1.30" height="1.20" fill="#9a9a8e"/>
<rect x="573.08" y="546.13" width="1.30" height="1.20" fill="#9a9a8e"/>
<rect x="577.70" y="546.13" width="1.30" height="1.20" fill="#9a9a8e"/>
<rect x="582.32" y="546.13" width="1.30" height="1.20" fill="#9a9a8e"/>
<rect x="586.94" y="546.13" width="1.30" height="1.20" fill="#9a9a8e"/>
<rect x="591.56" y="546.13" width="1.30" height="1.20" fill="#9a9a8e"/>
<rect x="596.18" y="546.13" width="1.30" height="1.20" fill="#9a9a8e"/>
<rect x="600.80" y="546.13" width="1.30" height="1.20" fill="#9a9a8e"/>
<rect x="605.42" y="546.13" width="1.30" height="1.20" fill="#9a9a8e"/>
<rect x="610.04" y="546.13" width="1.30" height="1.20" fill="#9a9a8e"/>
<rect x="614.66" y="546.13" width="1.30" height="1.20" fill="#9a9a8e"/>
<rect x="619.28" y="546.13" width="1.30" height="1.20" fill="#9a9a8e"/>
<rect x="623.90" y="546.13" width="1.30" height="1.20" fill="#9a9a8e"/>
<rect x="628.52" y="546.13" width="1.30" height="1.20" fill="#9a9a8e"/>
<rect x="633.14" y="546.13" width="1.30" height="1.20" fill="#9a9a8e"/>
<rect x="637.76" y="546.13" width="1.30" height="1.20" fill="#9a9a8e"/>
<rect x="642.38" y="546.13" width="1.30" height="1.20" fill="#9a9a8e"/>
<rect x="647.00" y="546.13" width="1.30" height="1.20" fill="#9a9a8e"/>
<rect x="651.62" y="546.13" width="1.30" height="1.20" fill="#9a9a8e"/>
<rect x="656.24" y="546.13" width="1.30" height="1.20" fill="#9a9a8e"/>
<rect x="660.86" y="546.13" width="1.30" height="1.20" fill="#9a9a8e"/>
<rect x="665.48" y="546.13" width="1.30" height="1.20" fill="#9a9a8e"/>
<rect x="670.10" y="546.13" width="1.30" height="1.20" fill="#9a9a8e"/>
<rect x="674.72" y="546.13" width="1.30" height="1.20" fill="#9a9a8e"/>
<rect x="679.34" y="546.13" width="1.30" height="1.20" fill="#9a9a8e"/>
<rect x="683.96" y="546.13" width="1.30" height="1.20" fill="#9a9a8e"/>
<rect x="688.58" y="546.13" width="1.30" height="1.20" fill="#9a9a8e"/>
<rect x="693.20" y="546.13" width="1.30" height="1.20" fill="#9a9a8e"/>
<rect x="697.82" y="546.13" width="1.30" height="1.20" fill="#9a9a8e"/>
<rect x="702.44" y="546.13" width="1.30" height="1.20" fill="#9a9a8e"/>
<rect x="707.06" y="546.13" width="1.30" height="1.20" fill="#9a9a8e"/>
<rect x="711.68" y="546.13" width="1.30" height="1.20" fill="#9a9a8e"/>
<rect x="716.30" y="546.13" width="1.30" height="1.20" fill="#9a9a8e"/>
<rect x="720.92" y="546.13" width="1.30" height="1.20" fill="#9a9a8e"/>
<rect x="725.54" y="546.13" width="1.30" height="1.20" fill="#9a9a8e"/>
<rect x="730.16" y="546.13" width="1.30" height="1.20" fill="#9a9a8e"/>
<rect x="734.78" y="546.13" width="1.30" height="1.20" fill="#9a9a8e"/>
<rect x="739.40" y="546.13" width="1.30" height="1.20" fill="#9a9a8e"/>
<rect x="744.02" y="546.13" width="1.30" height="1.20" fill="#9a9a8e"/>
<rect x="748.64" y="546.13" width="1.30" height="1.20" fill="#9a9a8e"/>
<rect x="753.26" y="546.13" width="1.30" height="1.20" fill="#9a9a8e"/>
<rect x="757.88" y="546.13" width="1.30" height="1.20" fill="#9a9a8e"/>
<rect x="762.50" y="546.13" width="1.30" height="1.20" fill="#9a9a8e"/>
<rect x="767.12" y="546.13" width="1.30" height="1.20" fill="#9a9a8e"/>
<rect x="771.74" y="546.13" width="1.30" height="1.20" fill="#9a9a8e"/>
<rect x="776.36" y="546.13" width="1.30" height="1.20" fill="#9a9a8e"/>
<rect x="780.98" y="546.13" width="1.30" height="1.20" fill="#9a9a8e"/>
<rect x="785.60" y="546.13" width="1.30" height="1.20" fill="#9a9a8e"/>
<rect x="790.22" y="546.13" width="1.30" height="1.20" fill="#9a9a8e"/>
<rect x="794.84" y="546.13" width="1.30" height="1.20" fill="#9a9a8e"/>
<rect x="799.46" y="546.13" width="1.30" height="1.20" fill="#9a9a8e"/>
<rect x="804.08" y="546.13" width="1.30" height="1.20" fill="#9a9a8e"/>
<rect x="808.70" y="546.13" width="1.30" height="1.20" fill="#9a9a8e"/>
<rect x="813.32" y="546.13" width="1.30" height="1.20" fill="#9a9a8e"/>
<rect x="817.94" y="546.13" width="1.30" height="1.20" fill="#9a9a8e"/>
<rect x="822.56" y="546.13" width="1.30" height="1.20" fill="#9a9a8e"/>
<rect x="827.18" y="546.13" width="1.30" height="1.20" fill="#9a9a8e"/>
<rect x="831.80" y="546.13" width="1.30" height="1.20" fill="#9a9a8e"/>
<rect x="836.42" y="546.13" width="1.30" height="1.20" fill="#9a9a8e"/>
<rect x="841.04" y="546.13" width="1.30" height="1.20" fill="#9a9a8e"/>
<rect x="845.66" y="546.13" width="1.30" height="1.20" fill="#9a9a8e"/>
<rect x="850.28" y="546.13" width="1.30" height="1.20" fill="#9a9a8e"/>
<rect x="854.90" y="546.13" width="1.30" height="1.20" fill="#9a9a8e"/>
<rect x="859.52" y="546.13" width="1.30" height="1.20" fill="#9a9a8e"/>
<rect x="864.14" y="546.13" width="1.30" height="1.20" fill="#9a9a8e"/>
<rect x="868.76" y="546.13" width="1.30" height="1.20" fill="#9a9a8e"/>
<rect x="873.38" y="546.13" width="1.30" height="1.20" fill="#9a9a8e"/>
<rect x="878.00" y="546.13" width="1.30" height="1.20" fill="#9a9a8e"/>
<rect x="882.62" y="546.13" width="1.30" height="1.20" fill="#9a9a8e"/>
<rect x="887.24" y="546.13" width="1.30" height="1.20" fill="#9a9a8e"/>
<rect x="891.86" y="546.13" width="1.30" height="1.20" fill="#9a9a8e"/>
<rect x="896.48" y="546.13" width="1.30" height="1.20" fill="#9a9a8e"/>
<rect x="901.10" y="546.13" width="1.30" height="1.20" fill="#9a9a8e"/>
<rect x="905.72" y="546.13" width="1.30" height="1.20" fill="#9a9a8e"/>
<rect x="910.34" y="546.13" width="1.30" height="1.20" fill="#9a9a8e"/>
<rect x="914.96" y="546.13" width="1.30" height="1.20" fill="#9a9a8e"/>
<rect x="919.58" y="546.13" width="1.30" height="1.20" fill="#9a9a8e"/>
<rect x="924.20" y="546.13" width="1.30" height="1.20" fill="#9a9a8e"/>
<rect x="928.82" y="546.13" width="1.30" height="1.20" fill="#9a9a8e"/>
<rect x="933.44" y="546.13" width="1.30" height="1.20" fill="#9a9a8e"/>
<rect x="938.06" y="546.13" width="1.30" height="1.20" fill="#9a9a8e"/>
<rect x="942.68" y="546.13" width="1.30" height="1.20" fill="#9a9a8e"/>
<rect x="947.30" y="546.13" width="1.30" height="1.20" fill="#9a9a8e"/>
<rect x="951.92" y="546.13" width="1.30" height="1.20" fill="#9a9a8e"/>
<rect x="956.54" y="546.13" width="1.30" height="1.20" fill="#9a9a8e"/>
<rect x="961.16" y="546.13" width="1.30" height="1.20" fill="#9a9a8e"/>
<rect x="965.78" y="546.13" width="1.30" height="1.20" fill="#9a9a8e"/>
<rect x="970.40" y="546.13" width="1.30" height="1.20" fill="#9a9a8e"/>
<rect x="975.02" y="546.13" width="1.30" height="1.20" fill="#9a9a8e"/>
<rect x="979.64" y="546.13" width="1.30" height="1.20" fill="#9a9a8e"/>
<rect x="984.26" y="546.13" width="1.30" height="1.20" fill="#9a9a8e"/>
<rect x="988.88" y="546.13" width="1.30" height="1.20" fill="#9a9a8e"/>
<rect x="993.50" y="546.13" width="1.30" height="1.20" fill="#9a9a8e"/>
<rect x="998.12" y="546.13" width="1.30" height="1.20" fill="#9a9a8e"/>
<rect x="1002.74" y="546.13" width="1.30" height="1.20" fill="#9a9a8e"/>
<rect x="1007.36" y="546.13" width="1.30" height="1.20" fill="#9a9a8e"/>
<rect x="1011.98" y="546.13" width="1.30" height="1.20" fill="#9a9a8e"/>
<rect x="1016.60" y="546.13" width="1.30" height="1.20" fill="#9a9a8e"/>
<rect x="1021.22" y="546.13" width="1.30" height="1.20" fill="#9a9a8e"/>
<rect x="1025.84" y="546.13" width="1.30" height="1.20" fill="#9a9a8e"/>
<rect x="1030.46" y="546.13" width="1.30" height="1.20" fill="#9a9a8e"/>
<rect x="1035.08" y="546.13" width="1.30" height="1.20" fill="#9a9a8e"/>
<rect x="69.50" y="445.50" width="1.30" height="1.20" fill="#9a9a8e"/>
<rect x="74.12" y="445.50" width="1.30" height="1.20" fill="#9a9a8e"/>
<rect x="78.74" y="445.50" width="1.30" height="1.20" fill="#9a9a8e"/>
<rect x="83.36" y="445.50" width="1.30" height="1.20" fill="#9a9a8e"/>
<rect x="87.98" y="445.50" width="1.30" height="1.20" fill="#9a9a8e"/>
<rect x="92.60" y="445.50" width="1.30" height="1.20" fill="#9a9a8e"/>
<rect x="97.22" y="445.50" width="1.30" height="1.20" fill="#9a9a8e"/>
<rect x="101.84" y="445.50" width="1.30" height="1.20" fill="#9a9a8e"/>
<rect x="106.46" y="445.50" width="1.30" height="1.20" fill="#9a9a8e"/>
<rect x="111.08" y="445.50" width="1.30" height="1.20" fill="#9a9a8e"/>
<rect x="115.70" y="445.50" width="1.30" height="1.20" fill="#9a9a8e"/>
<rect x="120.32" y="445.50" width="1.30" height="1.20" fill="#9a9a8e"/>
<rect x="124.94" y="445.50" width="1.30" height="1.20" fill="#9a9a8e"/>
<rect x="129.56" y="445.50" width="1.30" height="1.20" fill="#9a9a8e"/>
<rect x="134.18" y="445.50" width="1.30" height="1.20" fill="#9a9a8e"/>
<rect x="138.80" y="445.50" width="1.30" height="1.20" fill="#9a9a8e"/>
<rect x="143.42" y="445.50" width="1.30" height="1.20" fill="#9a9a8e"/>
<rect x="148.04" y="445.50" width="1.30" height="1.20" fill="#9a9a8e"/>
<rect x="152.66" y="445.50" width="1.30" height="1.20" fill="#9a9a8e"/>
<rect x="157.28" y="445.50" width="1.30" height="1.20" fill="#9a9a8e"/>
<rect x="161.90" y="445.50" width="1.30" height="1.20" fill="#9a9a8e"/>
<rect x="166.52" y="445.50" width="1.30" height="1.20" fill="#9a9a8e"/>
<rect x="171.14" y="445.50" width="1.30" height="1.20" fill="#9a9a8e"/>
<rect x="175.76" y="445.50" width="1.30" height="1.20" fill="#9a9a8e"/>
<rect x="180.38" y="445.50" width="1.30" height="1.20" fill="#9a9a8e"/>
<rect x="185.00" y="445.50" width="1.30" height="1.20" fill="#9a9a8e"/>
<rect x="189.62" y="445.50" width="1.30" height="1.20" fill="#9a9a8e"/>
<rect x="194.24" y="445.50" width="1.30" height="1.20" fill="#9a9a8e"/>
<rect x="198.86" y="445.50" width="1.30" height="1.20" fill="#9a9a8e"/>
<rect x="203.48" y="445.50" width="1.30" height="1.20" fill="#9a9a8e"/>
<rect x="208.10" y="445.50" width="1.30" height="1.20" fill="#9a9a8e"/>
<rect x="212.72" y="445.50" width="1.30" height="1.20" fill="#9a9a8e"/>
<rect x="217.34" y="445.50" width="1.30" height="1.20" fill="#9a9a8e"/>
<rect x="221.96" y="445.50" width="1.30" height="1.20" fill="#9a9a8e"/>
<rect x="226.58" y="445.50" width="1.30" height="1.20" fill="#9a9a8e"/>
<rect x="231.20" y="445.50" width="1.30" height="1.20" fill="#9a9a8e"/>
<rect x="235.82" y="445.50" width="1.30" height="1.20" fill="#9a9a8e"/>
<rect x="240.44" y="445.50" width="1.30" height="1.20" fill="#9a9a8e"/>
<rect x="245.06" y="445.50" width="1.30" height="1.20" fill="#9a9a8e"/>
<rect x="249.68" y="445.50" width="1.30" height="1.20" fill="#9a9a8e"/>
<rect x="254.30" y="445.50" width="1.30" height="1.20" fill="#9a9a8e"/>
<rect x="258.92" y="445.50" width="1.30" height="1.20" fill="#9a9a8e"/>
<rect x="263.54" y="445.50" width="1.30" height="1.20" fill="#9a9a8e"/>
<rect x="268.16" y="445.50" width="1.30" height="1.20" fill="#9a9a8e"/>
<rect x="272.78" y="445.50" width="1.30" height="1.20" fill="#9a9a8e"/>
<rect x="277.40" y="445.50" width="1.30" height="1.20" fill="#9a9a8e"/>
<rect x="282.02" y="445.50" width="1.30" height="1.20" fill="#9a9a8e"/>
<rect x="286.64" y="445.50" width="1.30" height="1.20" fill="#9a9a8e"/>
<rect x="291.26" y="445.50" width="1.30" height="1.20" fill="#9a9a8e"/>
<rect x="295.88" y="445.50" width="1.30" height="1.20" fill="#9a9a8e"/>
<rect x="300.50" y="445.50" width="1.30" height="1.20" fill="#9a9a8e"/>
<rect x="305.12" y="445.50" width="1.30" height="1.20" fill="#9a9a8e"/>
<rect x="309.74" y="445.50" width="1.30" height="1.20" fill="#9a9a8e"/>
<rect x="314.36" y="445.50" width="1.30" height="1.20" fill="#9a9a8e"/>
<rect x="318.98" y="445.50" width="1.30" height="1.20" fill="#9a9a8e"/>
<rect x="323.60" y="445.50" width="1.30" height="1.20" fill="#9a9a8e"/>
<rect x="328.22" y="445.50" width="1.30" height="1.20" fill="#9a9a8e"/>
<rect x="332.84" y="445.50" width="1.30" height="1.20" fill="#9a9a8e"/>
<rect x="337.46" y="445.50" width="1.30" height="1.20" fill="#9a9a8e"/>
<rect x="342.08" y="445.50" width="1.30" height="1.20" fill="#9a9a8e"/>
<rect x="346.70" y="445.50" width="1.30" height="1.20" fill="#9a9a8e"/>
<rect x="351.32" y="445.50" width="1.30" height="1.20" fill="#9a9a8e"/>
<rect x="355.94" y="445.50" width="1.30" height="1.20" fill="#9a9a8e"/>
<rect x="360.56" y="445.50" width="1.30" height="1.20" fill="#9a9a8e"/>
<rect x="365.18" y="445.50" width="1.30" height="1.20" fill="#9a9a8e"/>
<rect x="369.80" y="445.50" width="1.30" height="1.20" fill="#9a9a8e"/>
<rect x="374.42" y="445.50" width="1.30" height="1.20" fill="#9a9a8e"/>
<rect x="379.04" y="445.50" width="1.30" height="1.20" fill="#9a9a8e"/>
<rect x="383.66" y="445.50" width="1.30" height="1.20" fill="#9a9a8e"/>
<rect x="388.28" y="445.50" width="1.30" height="1.20" fill="#9a9a8e"/>
<rect x="392.90" y="445.50" width="1.30" height="1.20" fill="#9a9a8e"/>
<rect x="397.52" y="445.50" width="1.30" height="1.20" fill="#9a9a8e"/>
<rect x="402.14" y="445.50" width="1.30" height="1.20" fill="#9a9a8e"/>
<rect x="406.76" y="445.50" width="1.30" height="1.20" fill="#9a9a8e"/>
<rect x="411.38" y="445.50" width="1.30" height="1.20" fill="#9a9a8e"/>
<rect x="416.00" y="445.50" width="1.30" height="1.20" fill="#9a9a8e"/>
<rect x="420.62" y="445.50" width="1.30" height="1.20" fill="#9a9a8e"/>
<rect x="425.24" y="445.50" width="1.30" height="1.20" fill="#9a9a8e"/>
<rect x="429.86" y="445.50" width="1.30" height="1.20" fill="#9a9a8e"/>
<rect x="434.48" y="445.50" width="1.30" height="1.20" fill="#9a9a8e"/>
<rect x="439.10" y="445.50" width="1.30" height="1.20" fill="#9a9a8e"/>
<rect x="443.72" y="445.50" width="1.30" height="1.20" fill="#9a9a8e"/>
<rect x="448.34" y="445.50" width="1.30" height="1.20" fill="#9a9a8e"/>
<rect x="452.96" y="445.50" width="1.30" height="1.20" fill="#9a9a8e"/>
<rect x="457.58" y="445.50" width="1.30" height="1.20" fill="#9a9a8e"/>
<rect x="462.20" y="445.50" width="1.30" height="1.20" fill="#9a9a8e"/>
<rect x="466.82" y="445.50" width="1.30" height="1.20" fill="#9a9a8e"/>
<rect x="471.44" y="445.50" width="1.30" height="1.20" fill="#9a9a8e"/>
<rect x="476.06" y="445.50" width="1.30" height="1.20" fill="#9a9a8e"/>
<rect x="480.68" y="445.50" width="1.30" height="1.20" fill="#9a9a8e"/>
<rect x="485.30" y="445.50" width="1.30" height="1.20" fill="#9a9a8e"/>
<rect x="489.92" y="445.50" width="1.30" height="1.20" fill="#9a9a8e"/>
<rect x="494.54" y="445.50" width="1.30" height="1.20" fill="#9a9a8e"/>
<rect x="499.16" y="445.50" width="1.30" height="1.20" fill="#9a9a8e"/>
<rect x="503.78" y="445.50" width="1.30" height="1.20" fill="#9a9a8e"/>
<rect x="508.40" y="445.50" width="1.30" height="1.20" fill="#9a9a8e"/>
<rect x="513.02" y="445.50" width="1.30" height="1.20" fill="#9a9a8e"/>
<rect x="517.64" y="445.50" width="1.30" height="1.20" fill="#9a9a8e"/>
<rect x="522.26" y="445.50" width="1.30" height="1.20" fill="#9a9a8e"/>
<rect x="526.88" y="445.50" width="1.30" height="1.20" fill="#9a9a8e"/>
<rect x="531.50" y="445.50" width="1.30" height="1.20" fill="#9a9a8e"/>
<rect x="536.12" y="445.50" width="1.30" height="1.20" fill="#9a9a8e"/>
<rect x="540.74" y="445.50" width="1.30" height="1.20" fill="#9a9a8e"/>
<rect x="545.36" y="445.50" width="1.30" height="1.20" fill="#9a9a8e"/>
<rect x="549.98" y="445.50" width="1.30" height="1.20" fill="#9a9a8e"/>
<rect x="554.60" y="445.50" width="1.30" height="1.20" fill="#9a9a8e"/>
<rect x="559.22" y="445.50" width="1.30" height="1.20" fill="#9a9a8e"/>
<rect x="563.84" y="445.50" width="1.30" height="1.20" fill="#9a9a8e"/>
<rect x="568.46" y="445.50" width="1.30" height="1.20" fill="#9a9a8e"/>
<rect x="573.08" y="445.50" width="1.30" height="1.20" fill="#9a9a8e"/>
<rect x="577.70" y="445.50" width="1.30" height="1.20" fill="#9a9a8e"/>
<rect x="582.32" y="445.50" width="1.30" height="1.20" fill="#9a9a8e"/>
<rect x="586.94" y="445.50" width="1.30" height="1.20" fill="#9a9a8e"/>
<rect x="591.56" y="445.50" width="1.30" height="1.20" fill="#9a9a8e"/>
<rect x="596.18" y="445.50" width="1.30" height="1.20" fill="#9a9a8e"/>
<rect x="600.80" y="445.50" width="1.30" height="1.20" fill="#9a9a8e"/>
<rect x="605.42" y="445.50" width="1.30" height="1.20" fill="#9a9a8e"/>
<rect x="610.04" y="445.50" width="1.30" height="1.20" fill="#9a9a8e"/>
<rect x="614.66" y="445.50" width="1.30" height="1.20" fill="#9a9a8e"/>
<rect x="619.28" y="445.50" width="1.30" height="1.20" fill="#9a9a8e"/>
<rect x="623.90" y="445.50" width="1.30" height="1.20" fill="#9a9a8e"/>
<rect x="628.52" y="445.50" width="1.30" height="1.20" fill="#9a9a8e"/>
<rect x="633.14" y="445.50" width="1.30" height="1.20" fill="#9a9a8e"/>
<rect x="637.76" y="445.50" width="1.30" height="1.20" fill="#9a9a8e"/>
<rect x="642.38" y="445.50" width="1.30" height="1.20" fill="#9a9a8e"/>
<rect x="647.00" y="445.50" width="1.30" height="1.20" fill="#9a9a8e"/>
<rect x="651.62" y="445.50" width="1.30" height="1.20" fill="#9a9a8e"/>
<rect x="656.24" y="445.50" width="1.30" height="1.20" fill="#9a9a8e"/>
<rect x="660.86" y="445.50" width="1.30" height="1.20" fill="#9a9a8e"/>
<rect x="665.48" y="445.50" width="1.30" height="1.20" fill="#9a9a8e"/>
<rect x="670.10" y="445.50" width="1.30" height="1.20" fill="#9a9a8e"/>
<rect x="674.72" y="445.50" width="1.30" height="1.20" fill="#9a9a8e"/>
<rect x="679.34" y="445.50" width="1.30" height="1.20" fill="#9a9a8e"/>
<rect x="683.96" y="445.50" width="1.30" height="1.20" fill="#9a9a8e"/>
<rect x="688.58" y="445.50" width="1.30" height="1.20" fill="#9a9a8e"/>
<rect x="693.20" y="445.50" width="1.30" height="1.20" fill="#9a9a8e"/>
<rect x="697.82" y="445.50" width="1.30" height="1.20" fill="#9a9a8e"/>
<rect x="702.44" y="445.50" width="1.30" height="1.20" fill="#9a9a8e"/>
<rect x="707.06" y="445.50" width="1.30" height="1.20" fill="#9a9a8e"/>
<rect x="711.68" y="445.50" width="1.30" height="1.20" fill="#9a9a8e"/>
<rect x="716.30" y="445.50" width="1.30" height="1.20" fill="#9a9a8e"/>
<rect x="720.92" y="445.50" width="1.30" height="1.20" fill="#9a9a8e"/>
<rect x="725.54" y="445.50" width="1.30" height="1.20" fill="#9a9a8e"/>
<rect x="730.16" y="445.50" width="1.30" height="1.20" fill="#9a9a8e"/>
<rect x="734.78" y="445.50" width="1.30" height="1.20" fill="#9a9a8e"/>
<rect x="739.40" y="445.50" width="1.30" height="1.20" fill="#9a9a8e"/>
<rect x="744.02" y="445.50" width="1.30" height="1.20" fill="#9a9a8e"/>
<rect x="748.64" y="445.50" width="1.30" height="1.20" fill="#9a9a8e"/>
<rect x="753.26" y="445.50" width="1.30" height="1.20" fill="#9a9a8e"/>
<rect x="757.88" y="445.50" width="1.30" height="1.20" fill="#9a9a8e"/>
<rect x="762.50" y="445.50" width="1.30" height="1.20" fill="#9a9a8e"/>
<rect x="767.12" y="445.50" width="1.30" height="1.20" fill="#9a9a8e"/>
<rect x="771.74" y="445.50" width="1.30" height="1.20" fill="#9a9a8e"/>
<rect x="776.36" y="445.50" width="1.30" height="1.20" fill="#9a9a8e"/>
<rect x="780.98" y="445.50" width="1.30" height="1.20" fill="#9a9a8e"/>
<rect x="785.60" y="445.50" width="1.30" height="1.20" fill="#9a9a8e"/>
<rect x="790.22" y="445.50" width="1.30" height="1.20" fill="#9a9a8e"/>
<rect x="794.84" y="445.50" width="1.30" height="1.20" fill="#9a9a8e"/>
<rect x="799.46" y="445.50" width="1.30" height="1.20" fill="#9a9a8e"/>
<rect x="804.08" y="445.50" width="1.30" height="1.20" fill="#9a9a8e"/>
<rect x="808.70" y="445.50" width="1.30" height="1.20" fill="#9a9a8e"/>
<rect x="813.32" y="445.50" width="1.30" height="1.20" fill="#9a9a8e"/>
<rect x="817.94" y="445.50" width="1.30" height="1.20" fill="#9a9a8e"/>
<rect x="822.56" y="445.50" width="1.30" height="1.20" fill="#9a9a8e"/>
<rect x="827.18" y="445.50" width="1.30" height="1.20" fill="#9a9a8e"/>
<rect x="831.80" y="445.50" width="1.30" height="1.20" fill="#9a9a8e"/>
<rect x="836.42" y="445.50" width="1.30" height="1.20" fill="#9a9a8e"/>
<rect x="841.04" y="445.50" width="1.30" height="1.20" fill="#9a9a8e"/>
<rect x="845.66" y="445.50" width="1.30" height="1.20" fill="#9a9a8e"/>
<rect x="850.28" y="445.50" width="1.30" height="1.20" fill="#9a9a8e"/>
<rect x="854.90" y="445.50" width="1.30" height="1.20" fill="#9a9a8e"/>
<rect x="859.52" y="445.50" width="1.30" height="1.20" fill="#9a9a8e"/>
<rect x="864.14" y="445.50" width="1.30" height="1.20" fill="#9a9a8e"/>
<rect x="868.76" y="445.50" width="1.30" height="1.20" fill="#9a9a8e"/>
<rect x="873.38" y="445.50" width="1.30" height="1.20" fill="#9a9a8e"/>
<rect x="878.00" y="445.50" width="1.30" height="1.20" fill="#9a9a8e"/>
<rect x="882.62" y="445.50" width="1.30" height="1.20" fill="#9a9a8e"/>
<rect x="887.24" y="445.50" width="1.30" height="1.20" fill="#9a9a8e"/>
<rect x="891.86" y="445.50" width="1.30" height="1.20" fill="#9a9a8e"/>
<rect x="896.48" y="445.50" width="1.30" height="1.20" fill="#9a9a8e"/>
<rect x="901.10" y="445.50" width="1.30" height="1.20" fill="#9a9a8e"/>
<rect x="905.72" y="445.50" width="1.30" height="1.20" fill="#9a9a8e"/>
<rect x="910.34" y="445.50" width="1.30" height="1.20" fill="#9a9a8e"/>
<rect x="914.96" y="445.50" width="1.30" height="1.20" fill="#9a9a8e"/>
<rect x="919.58" y="445.50" width="1.30" height="1.20" fill="#9a9a8e"/>
<rect x="924.20" y="445.50" width="1.30" height="1.20" fill="#9a9a8e"/>
<rect x="928.82" y="445.50" width="1.30" height="1.20" fill="#9a9a8e"/>
<rect x="933.44" y="445.50" width="1.30" height="1.20" fill="#9a9a8e"/>
<rect x="938.06" y="445.50" width="1.30" height="1.20" fill="#9a9a8e"/>
<rect x="942.68" y="445.50" width="1.30" height="1.20" fill="#9a9a8e"/>
<rect x="947.30" y="445.50" width="1.30" height="1.20" fill="#9a9a8e"/>
<rect x="951.92" y="445.50" width="1.30" height="1.20" fill="#9a9a8e"/>
<rect x="956.54" y="445.50" width="1.30" height="1.20" fill="#9a9a8e"/>
<rect x="961.16" y="445.50" width="1.30" height="1.20" fill="#9a9a8e"/>
<rect x="965.78" y="445.50" width="1.30" height="1.20" fill="#9a9a8e"/>
<rect x="970.40" y="445.50" width="1.30" height="1.20" fill="#9a9a8e"/>
<rect x="975.02" y="445.50" width="1.30" height="1.20" fill="#9a9a8e"/>
<rect x="979.64" y="445.50" width="1.30" height="1.20" fill="#9a9a8e"/>
<rect x="984.26" y="445.50" width="1.30" height="1.20" fill="#9a9a8e"/>
<rect x="988.88" y="445.50" width="1.30" height="1.20" fill="#9a9a8e"/>
<rect x="993.50" y="445.50" width="1.30" height="1.20" fill="#9a9a8e"/>
<rect x="998.12" y="445.50" width="1.30" height="1.20" fill="#9a9a8e"/>
<rect x="1002.74" y="445.50" width="1.30" height="1.20" fill="#9a9a8e"/>
<rect x="1007.36" y="445.50" width="1.30" height="1.20" fill="#9a9a8e"/>
<rect x="1011.98" y="445.50" width="1.30" height="1.20" fill="#9a9a8e"/>
<rect x="1016.60" y="445.50" width="1.30" height="1.20" fill="#9a9a8e"/>
<rect x="1021.22" y="445.50" width="1.30" height="1.20" fill="#9a9a8e"/>
<rect x="1025.84" y="445.50" width="1.30" height="1.20" fill="#9a9a8e"/>
<rect x="1030.46" y="445.50" width="1.30" height="1.20" fill="#9a9a8e"/>
<rect x="1035.08" y="445.50" width="1.30" height="1.20" fill="#9a9a8e"/>
<rect x="69.50" y="344.87" width="1.30" height="1.20" fill="#9a9a8e"/>
<rect x="74.12" y="344.87" width="1.30" height="1.20" fill="#9a9a8e"/>
<rect x="78.74" y="344.87" width="1.30" height="1.20" fill="#9a9a8e"/>
<rect x="83.36" y="344.87" width="1.30" height="1.20" fill="#9a9a8e"/>
<rect x="87.98" y="344.87" width="1.30" height="1.20" fill="#9a9a8e"/>
<rect x="92.60" y="344.87" width="1.30" height="1.20" fill="#9a9a8e"/>
<rect x="97.22" y="344.87" width="1.30" height="1.20" fill="#9a9a8e"/>
<rect x="101.84" y="344.87" width="1.30" height="1.20" fill="#9a9a8e"/>
<rect x="106.46" y="344.87" width="1.30" height="1.20" fill="#9a9a8e"/>
<rect x="111.08" y="344.87" width="1.30" height="1.20" fill="#9a9a8e"/>
<rect x="115.70" y="344.87" width="1.30" height="1.20" fill="#9a9a8e"/>
<rect x="120.32" y="344.87" width="1.30" height="1.20" fill="#9a9a8e"/>
<rect x="124.94" y="344.87" width="1.30" height="1.20" fill="#9a9a8e"/>
<rect x="129.56" y="344.87" width="1.30" height="1.20" fill="#9a9a8e"/>
<rect x="134.18" y="344.87" width="1.30" height="1.20" fill="#9a9a8e"/>
<rect x="138.80" y="344.87" width="1.30" height="1.20" fill="#9a9a8e"/>
<rect x="143.42" y="344.87" width="1.30" height="1.20" fill="#9a9a8e"/>
<rect x="148.04" y="344.87" width="1.30" height="1.20" fill="#9a9a8e"/>
<rect x="152.66" y="344.87" width="1.30" height="1.20" fill="#9a9a8e"/>
<rect x="157.28" y="344.87" width="1.30" height="1.20" fill="#9a9a8e"/>
<rect x="161.90" y="344.87" width="1.30" height="1.20" fill="#9a9a8e"/>
<rect x="166.52" y="344.87" width="1.30" height="1.20" fill="#9a9a8e"/>
<rect x="171.14" y="344.87" width="1.30" height="1.20" fill="#9a9a8e"/>
<rect x="175.76" y="344.87" width="1.30" height="1.20" fill="#9a9a8e"/>
<rect x="180.38" y="344.87" width="1.30" height="1.20" fill="#9a9a8e"/>
<rect x="185.00" y="344.87" width="1.30" height="1.20" fill="#9a9a8e"/>
<rect x="189.62" y="344.87" width="1.30" height="1.20" fill="#9a9a8e"/>
<rect x="194.24" y="344.87" width="1.30" height="1.20" fill="#9a9a8e"/>
<rect x="198.86" y="344.87" width="1.30" height="1.20" fill="#9a9a8e"/>
<rect x="203.48" y="344.87" width="1.30" height="1.20" fill="#9a9a8e"/>
<rect x="208.10" y="344.87" width="1.30" height="1.20" fill="#9a9a8e"/>
<rect x="212.72" y="344.87" width="1.30" height="1.20" fill="#9a9a8e"/>
<rect x="217.34" y="344.87" width="1.30" height="1.20" fill="#9a9a8e"/>
<rect x="221.96" y="344.87" width="1.30" height="1.20" fill="#9a9a8e"/>
<rect x="226.58" y="344.87" width="1.30" height="1.20" fill="#9a9a8e"/>
<rect x="231.20" y="344.87" width="1.30" height="1.20" fill="#9a9a8e"/>
<rect x="235.82" y="344.87" width="1.30" height="1.20" fill="#9a9a8e"/>
<rect x="240.44" y="344.87" width="1.30" height="1.20" fill="#9a9a8e"/>
<rect x="245.06" y="344.87" width="1.30" height="1.20" fill="#9a9a8e"/>
<rect x="249.68" y="344.87" width="1.30" height="1.20" fill="#9a9a8e"/>
<rect x="254.30" y="344.87" width="1.30" height="1.20" fill="#9a9a8e"/>
<rect x="258.92" y="344.87" width="1.30" height="1.20" fill="#9a9a8e"/>
<rect x="263.54" y="344.87" width="1.30" height="1.20" fill="#9a9a8e"/>
<rect x="268.16" y="344.87" width="1.30" height="1.20" fill="#9a9a8e"/>
<rect x="272.78" y="344.87" width="1.30" height="1.20" fill="#9a9a8e"/>
<rect x="277.40" y="344.87" width="1.30" height="1.20" fill="#9a9a8e"/>
<rect x="282.02" y="344.87" width="1.30" height="1.20" fill="#9a9a8e"/>
<rect x="286.64" y="344.87" width="1.30" height="1.20" fill="#9a9a8e"/>
<rect x="291.26" y="344.87" width="1.30" height="1.20" fill="#9a9a8e"/>
<rect x="295.88" y="344.87" width="1.30" height="1.20" fill="#9a9a8e"/>
<rect x="300.50" y="344.87" width="1.30" height="1.20" fill="#9a9a8e"/>
<rect x="305.12" y="344.87" width="1.30" height="1.20" fill="#9a9a8e"/>
<rect x="309.74" y="344.87" width="1.30" height="1.20" fill="#9a9a8e"/>
<rect x="314.36" y="344.87" width="1.30" height="1.20" fill="#9a9a8e"/>
<rect x="318.98" y="344.87" width="1.30" height="1.20" fill="#9a9a8e"/>
<rect x="323.60" y="344.87" width="1.30" height="1.20" fill="#9a9a8e"/>
<rect x="328.22" y="344.87" width="1.30" height="1.20" fill="#9a9a8e"/>
<rect x="332.84" y="344.87" width="1.30" height="1.20" fill="#9a9a8e"/>
<rect x="337.46" y="344.87" width="1.30" height="1.20" fill="#9a9a8e"/>
<rect x="342.08" y="344.87" width="1.30" height="1.20" fill="#9a9a8e"/>
<rect x="346.70" y="344.87" width="1.30" height="1.20" fill="#9a9a8e"/>
<rect x="351.32" y="344.87" width="1.30" height="1.20" fill="#9a9a8e"/>
<rect x="355.94" y="344.87" width="1.30" height="1.20" fill="#9a9a8e"/>
<rect x="360.56" y="344.87" width="1.30" height="1.20" fill="#9a9a8e"/>
<rect x="365.18" y="344.87" width="1.30" height="1.20" fill="#9a9a8e"/>
<rect x="369.80" y="344.87" width="1.30" height="1.20" fill="#9a9a8e"/>
<rect x="374.42" y="344.87" width="1.30" height="1.20" fill="#9a9a8e"/>
<rect x="379.04" y="344.87" width="1.30" height="1.20" fill="#9a9a8e"/>
<rect x="383.66" y="344.87" width="1.30" height="1.20" fill="#9a9a8e"/>
<rect x="388.28" y="344.87" width="1.30" height="1.20" fill="#9a9a8e"/>
<rect x="392.90" y="344.87" width="1.30" height="1.20" fill="#9a9a8e"/>
<rect x="397.52" y="344.87" width="1.30" height="1.20" fill="#9a9a8e"/>
<rect x="402.14" y="344.87" width="1.30" height="1.20" fill="#9a9a8e"/>
<rect x="406.76" y="344.87" width="1.30" height="1.20" fill="#9a9a8e"/>
<rect x="411.38" y="344.87" width="1.30" height="1.20" fill="#9a9a8e"/>
<rect x="416.00" y="344.87" width="1.30" height="1.20" fill="#9a9a8e"/>
<rect x="420.62" y="344.87" width="1.30" height="1.20" fill="#9a9a8e"/>
<rect x="425.24" y="344.87" width="1.30" height="1.20" fill="#9a9a8e"/>
<rect x="429.86" y="344.87" width="1.30" height="1.20" fill="#9a9a8e"/>
<rect x="434.48" y="344.87" width="1.30" height="1.20" fill="#9a9a8e"/>
<rect x="439.10" y="344.87" width="1.30" height="1.20" fill="#9a9a8e"/>
<rect x="443.72" y="344.87" width="1.30" height="1.20" fill="#9a9a8e"/>
<rect x="448.34" y="344.87" width="1.30" height="1.20" fill="#9a9a8e"/>
<rect x="452.96" y="344.87" width="1.30" height="1.20" fill="#9a9a8e"/>
<rect x="457.58" y="344.87" width="1.30" height="1.20" fill="#9a9a8e"/>
<rect x="462.20" y="344.87" width="1.30" height="1.20" fill="#9a9a8e"/>
<rect x="466.82" y="344.87" width="1.30" height="1.20" fill="#9a9a8e"/>
<rect x="471.44" y="344.87" width="1.30" height="1.20" fill="#9a9a8e"/>
<rect x="476.06" y="344.87" width="1.30" height="1.20" fill="#9a9a8e"/>
<rect x="480.68" y="344.87" width="1.30" height="1.20" fill="#9a9a8e"/>
<rect x="485.30" y="344.87" width="1.30" height="1.20" fill="#9a9a8e"/>
<rect x="489.92" y="344.87" width="1.30" height="1.20" fill="#9a9a8e"/>
<rect x="494.54" y="344.87" width="1.30" height="1.20" fill="#9a9a8e"/>
<rect x="499.16" y="344.87" width="1.30" height="1.20" fill="#9a9a8e"/>
<rect x="503.78" y="344.87" width="1.30" height="1.20" fill="#9a9a8e"/>
<rect x="508.40" y="344.87" width="1.30" height="1.20" fill="#9a9a8e"/>
<rect x="513.02" y="344.87" width="1.30" height="1.20" fill="#9a9a8e"/>
<rect x="517.64" y="344.87" width="1.30" height="1.20" fill="#9a9a8e"/>
<rect x="522.26" y="344.87" width="1.30" height="1.20" fill="#9a9a8e"/>
<rect x="526.88" y="344.87" width="1.30" height="1.20" fill="#9a9a8e"/>
<rect x="531.50" y="344.87" width="1.30" height="1.20" fill="#9a9a8e"/>
<rect x="536.12" y="344.87" width="1.30" height="1.20" fill="#9a9a8e"/>
<rect x="540.74" y="344.87" width="1.30" height="1.20" fill="#9a9a8e"/>
<rect x="545.36" y="344.87" width="1.30" height="1.20" fill="#9a9a8e"/>
<rect x="549.98" y="344.87" width="1.30" height="1.20" fill="#9a9a8e"/>
<rect x="554.60" y="344.87" width="1.30" height="1.20" fill="#9a9a8e"/>
<rect x="559.22" y="344.87" width="1.30" height="1.20" fill="#9a9a8e"/>
<rect x="563.84" y="344.87" width="1.30" height="1.20" fill="#9a9a8e"/>
<rect x="568.46" y="344.87" width="1.30" height="1.20" fill="#9a9a8e"/>
<rect x="573.08" y="344.87" width="1.30" height="1.20" fill="#9a9a8e"/>
<rect x="577.70" y="344.87" width="1.30" height="1.20" fill="#9a9a8e"/>
<rect x="582.32" y="344.87" width="1.30" height="1.20" fill="#9a9a8e"/>
<rect x="586.94" y="344.87" width="1.30" height="1.20" fill="#9a9a8e"/>
<rect x="591.56" y="344.87" width="1.30" height="1.20" fill="#9a9a8e"/>
<rect x="596.18" y="344.87" width="1.30" height="1.20" fill="#9a9a8e"/>
<rect x="600.80" y="344.87" width="1.30" height="1.20" fill="#9a9a8e"/>
<rect x="605.42" y="344.87" width="1.30" height="1.20" fill="#9a9a8e"/>
<rect x="610.04" y="344.87" width="1.30" height="1.20" fill="#9a9a8e"/>
<rect x="614.66" y="344.87" width="1.30" height="1.20" fill="#9a9a8e"/>
<rect x="619.28" y="344.87" width="1.30" height="1.20" fill="#9a9a8e"/>
<rect x="623.90" y="344.87" width="1.30" height="1.20" fill="#9a9a8e"/>
<rect x="628.52" y="344.87" width="1.30" height="1.20" fill="#9a9a8e"/>
<rect x="633.14" y="344.87" width="1.30" height="1.20" fill="#9a9a8e"/>
<rect x="637.76" y="344.87" width="1.30" height="1.20" fill="#9a9a8e"/>
<rect x="642.38" y="344.87" width="1.30" height="1.20" fill="#9a9a8e"/>
<rect x="647.00" y="344.87" width="1.30" height="1.20" fill="#9a9a8e"/>
<rect x="651.62" y="344.87" width="1.30" height="1.20" fill="#9a9a8e"/>
<rect x="656.24" y="344.87" width="1.30" height="1.20" fill="#9a9a8e"/>
<rect x="660.86" y="344.87" width="1.30" height="1.20" fill="#9a9a8e"/>
<rect x="665.48" y="344.87" width="1.30" height="1.20" fill="#9a9a8e"/>
<rect x="670.10" y="344.87" width="1.30" height="1.20" fill="#9a9a8e"/>
<rect x="674.72" y="344.87" width="1.30" height="1.20" fill="#9a9a8e"/>
<rect x="679.34" y="344.87" width="1.30" height="1.20" fill="#9a9a8e"/>
<rect x="683.96" y="344.87" width="1.30" height="1.20" fill="#9a9a8e"/>
<rect x="688.58" y="344.87" width="1.30" height="1.20" fill="#9a9a8e"/>
<rect x="693.20" y="344.87" width="1.30" height="1.20" fill="#9a9a8e"/>
<rect x="697.82" y="344.87" width="1.30" height="1.20" fill="#9a9a8e"/>
<rect x="702.44" y="344.87" width="1.30" height="1.20" fill="#9a9a8e"/>
<rect x="707.06" y="344.87" width="1.30" height="1.20" fill="#9a9a8e"/>
<rect x="711.68" y="344.87" width="1.30" height="1.20" fill="#9a9a8e"/>
<rect x="716.30" y="344.87" width="1.30" height="1.20" fill="#9a9a8e"/>
<rect x="720.92" y="344.87" width="1.30" height="1.20" fill="#9a9a8e"/>
<rect x="725.54" y="344.87" width="1.30" height="1.20" fill="#9a9a8e"/>
<rect x="730.16" y="344.87" width="1.30" height="1.20" fill="#9a9a8e"/>
<rect x="734.78" y="344.87" width="1.30" height="1.20" fill="#9a9a8e"/>
<rect x="739.40" y="344.87" width="1.30" height="1.20" fill="#9a9a8e"/>
<rect x="744.02" y="344.87" width="1.30" height="1.20" fill="#9a9a8e"/>
<rect x="748.64" y="344.87" width="1.30" height="1.20" fill="#9a9a8e"/>
<rect x="753.26" y="344.87" width="1.30" height="1.20" fill="#9a9a8e"/>
<rect x="757.88" y="344.87" width="1.30" height="1.20" fill="#9a9a8e"/>
<rect x="762.50" y="344.87" width="1.30" height="1.20" fill="#9a9a8e"/>
<rect x="767.12" y="344.87" width="1.30" height="1.20" fill="#9a9a8e"/>
<rect x="771.74" y="344.87" width="1.30" height="1.20" fill="#9a9a8e"/>
<rect x="776.36" y="344.87" width="1.30" height="1.20" fill="#9a9a8e"/>
<rect x="780.98" y="344.87" width="1.30" height="1.20" fill="#9a9a8e"/>
<rect x="785.60" y="344.87" width="1.30" height="1.20" fill="#9a9a8e"/>
<rect x="790.22" y="344.87" width="1.30" height="1.20" fill="#9a9a8e"/>
<rect x="794.84" y="344.87" width="1.30" height="1.20" fill="#9a9a8e"/>
<rect x="799.46" y="344.87" width="1.30" height="1.20" fill="#9a9a8e"/>
<rect x="804.08" y="344.87" width="1.30" height="1.20" fill="#9a9a8e"/>
<rect x="808.70" y="344.87" width="1.30" height="1.20" fill="#9a9a8e"/>
<rect x="813.32" y="344.87" width="1.30" height="1.20" fill="#9a9a8e"/>
<rect x="817.94" y="344.87" width="1.30" height="1.20" fill="#9a9a8e"/>
<rect x="822.56" y="344.87" width="1.30" height="1.20" fill="#9a9a8e"/>
<rect x="827.18" y="344.87" width="1.30" height="1.20" fill="#9a9a8e"/>
<rect x="831.80" y="344.87" width="1.30" height="1.20" fill="#9a9a8e"/>
<rect x="836.42" y="344.87" width="1.30" height="1.20" fill="#9a9a8e"/>
<rect x="841.04" y="344.87" width="1.30" height="1.20" fill="#9a9a8e"/>
<rect x="845.66" y="344.87" width="1.30" height="1.20" fill="#9a9a8e"/>
<rect x="850.28" y="344.87" width="1.30" height="1.20" fill="#9a9a8e"/>
<rect x="854.90" y="344.87" width="1.30" height="1.20" fill="#9a9a8e"/>
<rect x="859.52" y="344.87" width="1.30" height="1.20" fill="#9a9a8e"/>
<rect x="864.14" y="344.87" width="1.30" height="1.20" fill="#9a9a8e"/>
<rect x="868.76" y="344.87" width="1.30" height="1.20" fill="#9a9a8e"/>
<rect x="873.38" y="344.87" width="1.30" height="1.20" fill="#9a9a8e"/>
<rect x="878.00" y="344.87" width="1.30" height="1.20" fill="#9a9a8e"/>
<rect x="882.62" y="344.87" width="1.30" height="1.20" fill="#9a9a8e"/>
<rect x="887.24" y="344.87" width="1.30" height="1.20" fill="#9a9a8e"/>
<rect x="891.86" y="344.87" width="1.30" height="1.20" fill="#9a9a8e"/>
<rect x="896.48" y="344.87" width="1.30" height="1.20" fill="#9a9a8e"/>
<rect x="901.10" y="344.87" width="1.30" height="1.20" fill="#9a9a8e"/>
<rect x="905.72" y="344.87" width="1.30" height="1.20" fill="#9a9a8e"/>
<rect x="910.34" y="344.87" width="1.30" height="1.20" fill="#9a9a8e"/>
<rect x="914.96" y="344.87" width="1.30" height="1.20" fill="#9a9a8e"/>
<rect x="919.58" y="344.87" width="1.30" height="1.20" fill="#9a9a8e"/>
<rect x="924.20" y="344.87" width="1.30" height="1.20" fill="#9a9a8e"/>
<rect x="928.82" y="344.87" width="1.30" height="1.20" fill="#9a9a8e"/>
<rect x="933.44" y="344.87" width="1.30" height="1.20" fill="#9a9a8e"/>
<rect x="938.06" y="344.87" width="1.30" height="1.20" fill="#9a9a8e"/>
<rect x="942.68" y="344.87" width="1.30" height="1.20" fill="#9a9a8e"/>
<rect x="947.30" y="344.87" width="1.30" height="1.20" fill="#9a9a8e"/>
<rect x="951.92" y="344.87" width="1.30" height="1.20" fill="#9a9a8e"/>
<rect x="956.54" y="344.87" width="1.30" height="1.20" fill="#9a9a8e"/>
<rect x="961.16" y="344.87" width="1.30" height="1.20" fill="#9a9a8e"/>
<rect x="965.78" y="344.87" width="1.30" height="1.20" fill="#9a9a8e"/>
<rect x="970.40" y="344.87" width="1.30" height="1.20" fill="#9a9a8e"/>
<rect x="975.02" y="344.87" width="1.30" height="1.20" fill="#9a9a8e"/>
<rect x="979.64" y="344.87" width="1.30" height="1.20" fill="#9a9a8e"/>
<rect x="984.26" y="344.87" width="1.30" height="1.20" fill="#9a9a8e"/>
<rect x="988.88" y="344.87" width="1.30" height="1.20" fill="#9a9a8e"/>
<rect x="993.50" y="344.87" width="1.30" height="1.20" fill="#9a9a8e"/>
<rect x="998.12" y="344.87" width="1.30" height="1.20" fill="#9a9a8e"/>
<rect x="1002.74" y="344.87" width="1.30" height="1.20" fill="#9a9a8e"/>
<rect x="1007.36" y="344.87" width="1.30" height="1.20" fill="#9a9a8e"/>
<rect x="1011.98" y="344.87" width="1.30" height="1.20" fill="#9a9a8e"/>
<rect x="1016.60" y="344.87" width="1.30" height="1.20" fill="#9a9a8e"/>
<rect x="1021.22" y="344.87" width="1.30" height="1.20" fill="#9a9a8e"/>
<rect x="1025.84" y="344.87" width="1.30" height="1.20" fill="#9a9a8e"/>
<rect x="1030.46" y="344.87" width="1.30" height="1.20" fill="#9a9a8e"/>
<rect x="1035.08" y="344.87" width="1.30" height="1.20" fill="#9a9a8e"/>
<rect x="69.50" y="244.23" width="1.30" height="1.20" fill="#9a9a8e"/>
<rect x="74.12" y="244.23" width="1.30" height="1.20" fill="#9a9a8e"/>
<rect x="78.74" y="244.23" width="1.30" height="1.20" fill="#9a9a8e"/>
<rect x="83.36" y="244.23" width="1.30" height="1.20" fill="#9a9a8e"/>
<rect x="87.98" y="244.23" width="1.30" height="1.20" fill="#9a9a8e"/>
<rect x="92.60" y="244.23" width="1.30" height="1.20" fill="#9a9a8e"/>
<rect x="97.22" y="244.23" width="1.30" height="1.20" fill="#9a9a8e"/>
<rect x="101.84" y="244.23" width="1.30" height="1.20" fill="#9a9a8e"/>
<rect x="106.46" y="244.23" width="1.30" height="1.20" fill="#9a9a8e"/>
<rect x="111.08" y="244.23" width="1.30" height="1.20" fill="#9a9a8e"/>
<rect x="115.70" y="244.23" width="1.30" height="1.20" fill="#9a9a8e"/>
<rect x="120.32" y="244.23" width="1.30" height="1.20" fill="#9a9a8e"/>
<rect x="124.94" y="244.23" width="1.30" height="1.20" fill="#9a9a8e"/>
<rect x="129.56" y="244.23" width="1.30" height="1.20" fill="#9a9a8e"/>
<rect x="134.18" y="244.23" width="1.30" height="1.20" fill="#9a9a8e"/>
<rect x="138.80" y="244.23" width="1.30" height="1.20" fill="#9a9a8e"/>
<rect x="143.42" y="244.23" width="1.30" height="1.20" fill="#9a9a8e"/>
<rect x="148.04" y="244.23" width="1.30" height="1.20" fill="#9a9a8e"/>
<rect x="152.66" y="244.23" width="1.30" height="1.20" fill="#9a9a8e"/>
<rect x="157.28" y="244.23" width="1.30" height="1.20" fill="#9a9a8e"/>
<rect x="161.90" y="244.23" width="1.30" height="1.20" fill="#9a9a8e"/>
<rect x="166.52" y="244.23" width="1.30" height="1.20" fill="#9a9a8e"/>
<rect x="171.14" y="244.23" width="1.30" height="1.20" fill="#9a9a8e"/>
<rect x="175.76" y="244.23" width="1.30" height="1.20" fill="#9a9a8e"/>
<rect x="180.38" y="244.23" width="1.30" height="1.20" fill="#9a9a8e"/>
<rect x="185.00" y="244.23" width="1.30" height="1.20" fill="#9a9a8e"/>
<rect x="189.62" y="244.23" width="1.30" height="1.20" fill="#9a9a8e"/>
<rect x="194.24" y="244.23" width="1.30" height="1.20" fill="#9a9a8e"/>
<rect x="198.86" y="244.23" width="1.30" height="1.20" fill="#9a9a8e"/>
<rect x="203.48" y="244.23" width="1.30" height="1.20" fill="#9a9a8e"/>
<rect x="208.10" y="244.23" width="1.30" height="1.20" fill="#9a9a8e"/>
<rect x="212.72" y="244.23" width="1.30" height="1.20" fill="#9a9a8e"/>
<rect x="217.34" y="244.23" width="1.30" height="1.20" fill="#9a9a8e"/>
<rect x="221.96" y="244.23" width="1.30" height="1.20" fill="#9a9a8e"/>
<rect x="226.58" y="244.23" width="1.30" height="1.20" fill="#9a9a8e"/>
<rect x="231.20" y="244.23" width="1.30" height="1.20" fill="#9a9a8e"/>
<rect x="235.82" y="244.23" width="1.30" height="1.20" fill="#9a9a8e"/>
<rect x="240.44" y="244.23" width="1.30" height="1.20" fill="#9a9a8e"/>
<rect x="245.06" y="244.23" width="1.30" height="1.20" fill="#9a9a8e"/>
<rect x="249.68" y="244.23" width="1.30" height="1.20" fill="#9a9a8e"/>
<rect x="254.30" y="244.23" width="1.30" height="1.20" fill="#9a9a8e"/>
<rect x="258.92" y="244.23" width="1.30" height="1.20" fill="#9a9a8e"/>
<rect x="263.54" y="244.23" width="1.30" height="1.20" fill="#9a9a8e"/>
<rect x="268.16" y="244.23" width="1.30" height="1.20" fill="#9a9a8e"/>
<rect x="272.78" y="244.23" width="1.30" height="1.20" fill="#9a9a8e"/>
<rect x="277.40" y="244.23" width="1.30" height="1.20" fill="#9a9a8e"/>
<rect x="282.02" y="244.23" width="1.30" height="1.20" fill="#9a9a8e"/>
<rect x="286.64" y="244.23" width="1.30" height="1.20" fill="#9a9a8e"/>
<rect x="291.26" y="244.23" width="1.30" height="1.20" fill="#9a9a8e"/>
<rect x="295.88" y="244.23" width="1.30" height="1.20" fill="#9a9a8e"/>
<rect x="300.50" y="244.23" width="1.30" height="1.20" fill="#9a9a8e"/>
<rect x="305.12" y="244.23" width="1.30" height="1.20" fill="#9a9a8e"/>
<rect x="309.74" y="244.23" width="1.30" height="1.20" fill="#9a9a8e"/>
<rect x="314.36" y="244.23" width="1.30" height="1.20" fill="#9a9a8e"/>
<rect x="318.98" y="244.23" width="1.30" height="1.20" fill="#9a9a8e"/>
<rect x="323.60" y="244.23" width="1.30" height="1.20" fill="#9a9a8e"/>
<rect x="328.22" y="244.23" width="1.30" height="1.20" fill="#9a9a8e"/>
<rect x="332.84" y="244.23" width="1.30" height="1.20" fill="#9a9a8e"/>
<rect x="337.46" y="244.23" width="1.30" height="1.20" fill="#9a9a8e"/>
<rect x="342.08" y="244.23" width="1.30" height="1.20" fill="#9a9a8e"/>
<rect x="346.70" y="244.23" width="1.30" height="1.20" fill="#9a9a8e"/>
<rect x="351.32" y="244.23" width="1.30" height="1.20" fill="#9a9a8e"/>
<rect x="355.94" y="244.23" width="1.30" height="1.20" fill="#9a9a8e"/>
<rect x="360.56" y="244.23" width="1.30" height="1.20" fill="#9a9a8e"/>
<rect x="365.18" y="244.23" width="1.30" height="1.20" fill="#9a9a8e"/>
<rect x="369.80" y="244.23" width="1.30" height="1.20" fill="#9a9a8e"/>
<rect x="374.42" y="244.23" width="1.30" height="1.20" fill="#9a9a8e"/>
<rect x="379.04" y="244.23" width="1.30" height="1.20" fill="#9a9a8e"/>
<rect x="383.66" y="244.23" width="1.30" height="1.20" fill="#9a9a8e"/>
<rect x="388.28" y="244.23" width="1.30" height="1.20" fill="#9a9a8e"/>
<rect x="392.90" y="244.23" width="1.30" height="1.20" fill="#9a9a8e"/>
<rect x="397.52" y="244.23" width="1.30" height="1.20" fill="#9a9a8e"/>
<rect x="402.14" y="244.23" width="1.30" height="1.20" fill="#9a9a8e"/>
<rect x="406.76" y="244.23" width="1.30" height="1.20" fill="#9a9a8e"/>
<rect x="411.38" y="244.23" width="1.30" height="1.20" fill="#9a9a8e"/>
<rect x="416.00" y="244.23" width="1.30" height="1.20" fill="#9a9a8e"/>
<rect x="420.62" y="244.23" width="1.30" height="1.20" fill="#9a9a8e"/>
<rect x="425.24" y="244.23" width="1.30" height="1.20" fill="#9a9a8e"/>
<rect x="429.86" y="244.23" width="1.30" height="1.20" fill="#9a9a8e"/>
<rect x="434.48" y="244.23" width="1.30" height="1.20" fill="#9a9a8e"/>
<rect x="439.10" y="244.23" width="1.30" height="1.20" fill="#9a9a8e"/>
<rect x="443.72" y="244.23" width="1.30" height="1.20" fill="#9a9a8e"/>
<rect x="448.34" y="244.23" width="1.30" height="1.20" fill="#9a9a8e"/>
<rect x="452.96" y="244.23" width="1.30" height="1.20" fill="#9a9a8e"/>
<rect x="457.58" y="244.23" width="1.30" height="1.20" fill="#9a9a8e"/>
<rect x="462.20" y="244.23" width="1.30" height="1.20" fill="#9a9a8e"/>
<rect x="466.82" y="244.23" width="1.30" height="1.20" fill="#9a9a8e"/>
<rect x="471.44" y="244.23" width="1.30" height="1.20" fill="#9a9a8e"/>
<rect x="476.06" y="244.23" width="1.30" height="1.20" fill="#9a9a8e"/>
<rect x="480.68" y="244.23" width="1.30" height="1.20" fill="#9a9a8e"/>
<rect x="485.30" y="244.23" width="1.30" height="1.20" fill="#9a9a8e"/>
<rect x="489.92" y="244.23" width="1.30" height="1.20" fill="#9a9a8e"/>
<rect x="494.54" y="244.23" width="1.30" height="1.20" fill="#9a9a8e"/>
<rect x="499.16" y="244.23" width="1.30" height="1.20" fill="#9a9a8e"/>
<rect x="503.78" y="244.23" width="1.30" height="1.20" fill="#9a9a8e"/>
<rect x="508.40" y="244.23" width="1.30" height="1.20" fill="#9a9a8e"/>
<rect x="513.02" y="244.23" width="1.30" height="1.20" fill="#9a9a8e"/>
<rect x="517.64" y="244.23" width="1.30" height="1.20" fill="#9a9a8e"/>
<rect x="522.26" y="244.23" width="1.30" height="1.20" fill="#9a9a8e"/>
<rect x="526.88" y="244.23" width="1.30" height="1.20" fill="#9a9a8e"/>
<rect x="531.50" y="244.23" width="1.30" height="1.20" fill="#9a9a8e"/>
<rect x="536.12" y="244.23" width="1.30" height="1.20" fill="#9a9a8e"/>
<rect x="540.74" y="244.23" width="1.30" height="1.20" fill="#9a9a8e"/>
<rect x="545.36" y="244.23" width="1.30" height="1.20" fill="#9a9a8e"/>
<rect x="549.98" y="244.23" width="1.30" height="1.20" fill="#9a9a8e"/>
<rect x="554.60" y="244.23" width="1.30" height="1.20" fill="#9a9a8e"/>
<rect x="559.22" y="244.23" width="1.30" height="1.20" fill="#9a9a8e"/>
<rect x="563.84" y="244.23" width="1.30" height="1.20" fill="#9a9a8e"/>
<rect x="568.46" y="244.23" width="1.30" height="1.20" fill="#9a9a8e"/>
<rect x="573.08" y="244.23" width="1.30" height="1.20" fill="#9a9a8e"/>
<rect x="577.70" y="244.23" width="1.30" height="1.20" fill="#9a9a8e"/>
<rect x="582.32" y="244.23" width="1.30" height="1.20" fill="#9a9a8e"/>
<rect x="586.94" y="244.23" width="1.30" height="1.20" fill="#9a9a8e"/>
<rect x="591.56" y="244.23" width="1.30" height="1.20" fill="#9a9a8e"/>
<rect x="596.18" y="244.23" width="1.30" height="1.20" fill="#9a9a8e"/>
<rect x="600.80" y="244.23" width="1.30" height="1.20" fill="#9a9a8e"/>
<rect x="605.42" y="244.23" width="1.30" height="1.20" fill="#9a9a8e"/>
<rect x="610.04" y="244.23" width="1.30" height="1.20" fill="#9a9a8e"/>
<rect x="614.66" y="244.23" width="1.30" height="1.20" fill="#9a9a8e"/>
<rect x="619.28" y="244.23" width="1.30" height="1.20" fill="#9a9a8e"/>
<rect x="623.90" y="244.23" width="1.30" height="1.20" fill="#9a9a8e"/>
<rect x="628.52" y="244.23" width="1.30" height="1.20" fill="#9a9a8e"/>
<rect x="633.14" y="244.23" width="1.30" height="1.20" fill="#9a9a8e"/>
<rect x="637.76" y="244.23" width="1.30" height="1.20" fill="#9a9a8e"/>
<rect x="642.38" y="244.23" width="1.30" height="1.20" fill="#9a9a8e"/>
<rect x="647.00" y="244.23" width="1.30" height="1.20" fill="#9a9a8e"/>
<rect x="651.62" y="244.23" width="1.30" height="1.20" fill="#9a9a8e"/>
<rect x="656.24" y="244.23" width="1.30" height="1.20" fill="#9a9a8e"/>
<rect x="660.86" y="244.23" width="1.30" height="1.20" fill="#9a9a8e"/>
<rect x="665.48" y="244.23" width="1.30" height="1.20" fill="#9a9a8e"/>
<rect x="670.10" y="244.23" width="1.30" height="1.20" fill="#9a9a8e"/>
<rect x="674.72" y="244.23" width="1.30" height="1.20" fill="#9a9a8e"/>
<rect x="679.34" y="244.23" width="1.30" height="1.20" fill="#9a9a8e"/>
<rect x="683.96" y="244.23" width="1.30" height="1.20" fill="#9a9a8e"/>
<rect x="688.58" y="244.23" width="1.30" height="1.20" fill="#9a9a8e"/>
<rect x="693.20" y="244.23" width="1.30" height="1.20" fill="#9a9a8e"/>
<rect x="697.82" y="244.23" width="1.30" height="1.20" fill="#9a9a8e"/>
<rect x="702.44" y="244.23" width="1.30" height="1.20" fill="#9a9a8e"/>
<rect x="707.06" y="244.23" width="1.30" height="1.20" fill="#9a9a8e"/>
<rect x="711.68" y="244.23" width="1.30" height="1.20" fill="#9a9a8e"/>
<rect x="716.30" y="244.23" width="1.30" height="1.20" fill="#9a9a8e"/>
<rect x="720.92" y="244.23" width="1.30" height="1.20" fill="#9a9a8e"/>
<rect x="725.54" y="244.23" width="1.30" height="1.20" fill="#9a9a8e"/>
<rect x="730.16" y="244.23" width="1.30" height="1.20" fill="#9a9a8e"/>
<rect x="734.78" y="244.23" width="1.30" height="1.20" fill="#9a9a8e"/>
<rect x="739.40" y="244.23" width="1.30" height="1.20" fill="#9a9a8e"/>
<rect x="744.02" y="244.23" width="1.30" height="1.20" fill="#9a9a8e"/>
<rect x="748.64" y="244.23" width="1.30" height="1.20" fill="#9a9a8e"/>
<rect x="753.26" y="244.23" width="1.30" height="1.20" fill="#9a9a8e"/>
<rect x="757.88" y="244.23" width="1.30" height="1.20" fill="#9a9a8e"/>
<rect x="762.50" y="244.23" width="1.30" height="1.20" fill="#9a9a8e"/>
<rect x="767.12" y="244.23" width="1.30" height="1.20" fill="#9a9a8e"/>
<rect x="771.74" y="244.23" width="1.30" height="1.20" fill="#9a9a8e"/>
<rect x="776.36" y="244.23" width="1.30" height="1.20" fill="#9a9a8e"/>
<rect x="780.98" y="244.23" width="1.30" height="1.20" fill="#9a9a8e"/>
<rect x="785.60" y="244.23" width="1.30" height="1.20" fill="#9a9a8e"/>
<rect x="790.22" y="244.23" width="1.30" height="1.20" fill="#9a9a8e"/>
<rect x="794.84" y="244.23" width="1.30" height="1.20" fill="#9a9a8e"/>
<rect x="799.46" y="244.23" width="1.30" height="1.20" fill="#9a9a8e"/>
<rect x="804.08" y="244.23" width="1.30" height="1.20" fill="#9a9a8e"/>
<rect x="808.70" y="244.23" width="1.30" height="1.20" fill="#9a9a8e"/>
<rect x="813.32" y="244.23" width="1.30" height="1.20" fill="#9a9a8e"/>
<rect x="817.94" y="244.23" width="1.30" height="1.20" fill="#9a9a8e"/>
<rect x="822.56" y="244.23" width="1.30" height="1.20" fill="#9a9a8e"/>
<rect x="827.18" y="244.23" width="1.30" height="1.20" fill="#9a9a8e"/>
<rect x="831.80" y="244.23" width="1.30" height="1.20" fill="#9a9a8e"/>
<rect x="836.42" y="244.23" width="1.30" height="1.20" fill="#9a9a8e"/>
<rect x="841.04" y="244.23" width="1.30" height="1.20" fill="#9a9a8e"/>
<rect x="845.66" y="244.23" width="1.30" height="1.20" fill="#9a9a8e"/>
<rect x="850.28" y="244.23" width="1.30" height="1.20" fill="#9a9a8e"/>
<rect x="854.90" y="244.23" width="1.30" height="1.20" fill="#9a9a8e"/>
<rect x="859.52" y="244.23" width="1.30" height="1.20" fill="#9a9a8e"/>
<rect x="864.14" y="244.23" width="1.30" height="1.20" fill="#9a9a8e"/>
<rect x="868.76" y="244.23" width="1.30" height="1.20" fill="#9a9a8e"/>
<rect x="873.38" y="244.23" width="1.30" height="1.20" fill="#9a9a8e"/>
<rect x="878.00" y="244.23" width="1.30" height="1.20" fill="#9a9a8e"/>
<rect x="882.62" y="244.23" width="1.30" height="1.20" fill="#9a9a8e"/>
<rect x="887.24" y="244.23" width="1.30" height="1.20" fill="#9a9a8e"/>
<rect x="891.86" y="244.23" width="1.30" height="1.20" fill="#9a9a8e"/>
<rect x="896.48" y="244.23" width="1.30" height="1.20" fill="#9a9a8e"/>
<rect x="901.10" y="244.23" width="1.30" height="1.20" fill="#9a9a8e"/>
<rect x="905.72" y="244.23" width="1.30" height="1.20" fill="#9a9a8e"/>
<rect x="910.34" y="244.23" width="1.30" height="1.20" fill="#9a9a8e"/>
<rect x="914.96" y="244.23" width="1.30" height="1.20" fill="#9a9a8e"/>
<rect x="919.58" y="244.23" width="1.30" height="1.20" fill="#9a9a8e"/>
<rect x="924.20" y="244.23" width="1.30" height="1.20" fill="#9a9a8e"/>
<rect x="928.82" y="244.23" width="1.30" height="1.20" fill="#9a9a8e"/>
<rect x="933.44" y="244.23" width="1.30" height="1.20" fill="#9a9a8e"/>
<rect x="938.06" y="244.23" width="1.30" height="1.20" fill="#9a9a8e"/>
<rect x="942.68" y="244.23" width="1.30" height="1.20" fill="#9a9a8e"/>
<rect x="947.30" y="244.23" width="1.30" height="1.20" fill="#9a9a8e"/>
<rect x="951.92" y="244.23" width="1.30" height="1.20" fill="#9a9a8e"/>
<rect x="956.54" y="244.23" width="1.30" height="1.20" fill="#9a9a8e"/>
<rect x="961.16" y="244.23" width="1.30" height="1.20" fill="#9a9a8e"/>
<rect x="965.78" y="244.23" width="1.30" height="1.20" fill="#9a9a8e"/>
<rect x="970.40" y="244.23" width="1.30" height="1.20" fill="#9a9a8e"/>
<rect x="975.02" y="244.23" width="1.30" height="1.20" fill="#9a9a8e"/>
<rect x="979.64" y="244.23" width="1.30" height="1.20" fill="#9a9a8e"/>
<rect x="984.26" y="244.23" width="1.30" height="1.20" fill="#9a9a8e"/>
<rect x="988.88" y="244.23" width="1.30" height="1.20" fill="#9a9a8e"/>
<rect x="993.50" y="244.23" width="1.30" height="1.20" fill="#9a9a8e"/>
<rect x="998.12" y="244.23" width="1.30" height="1.20" fill="#9a9a8e"/>
<rect x="1002.74" y="244.23" width="1.30" height="1.20" fill="#9a9a8e"/>
<rect x="1007.36" y="244.23" width="1.30" height="1.20" fill="#9a9a8e"/>
<rect x="1011.98" y="244.23" width="1.30" height="1.20" fill="#9a9a8e"/>
<rect x="1016.60" y="244.23" width="1.30" height="1.20" fill="#9a9a8e"/>
<rect x="1021.22" y="244.23" width="1.30" height="1.20" fill="#9a9a8e"/>
<rect x="1025.84" y="244.23" width="1.30" height="1.20" fill="#9a9a8e"/>
<rect x="1030.46" y="244.23" width="1.30" height="1.20" fill="#9a9a8e"/>
<rect x="1035.08" y="244.23" width="1.30" height="1.20" fill="#9a9a8e"/>
</g>
<rect x="66.30" y="741.00" width="1.40" height="16.00" fill="#2c2c2c"/>
<rect x="66.30" y="144.20" width="1.40" height="9.00" fill="#2c2c2c"/>
<rect x="107.02" y="744.00" width="1.20" height="9.00" fill="#2c2c2c"/>
<rect x="107.02" y="144.20" width="1.20" height="4.50" fill="#2c2c2c"/>
<rect x="147.63" y="744.00" width="1.20" height="9.00" fill="#2c2c2c"/>
<rect x="147.63" y="144.20" width="1.20" height="4.50" fill="#2c2c2c"/>
<rect x="188.25" y="744.00" width="1.20" height="9.00" fill="#2c2c2c"/>
<rect x="188.25" y="144.20" width="1.20" height="4.50" fill="#2c2c2c"/>
<rect x="228.77" y="741.00" width="1.40" height="16.00" fill="#2c2c2c"/>
<rect x="228.77" y="144.20" width="1.40" height="9.00" fill="#2c2c2c"/>
<rect x="269.48" y="744.00" width="1.20" height="9.00" fill="#2c2c2c"/>
<rect x="269.48" y="144.20" width="1.20" height="4.50" fill="#2c2c2c"/>
<rect x="310.10" y="744.00" width="1.20" height="9.00" fill="#2c2c2c"/>
<rect x="310.10" y="144.20" width="1.20" height="4.50" fill="#2c2c2c"/>
<rect x="350.72" y="744.00" width="1.20" height="9.00" fill="#2c2c2c"/>
<rect x="350.72" y="144.20" width="1.20" height="4.50" fill="#2c2c2c"/>
<rect x="391.23" y="741.00" width="1.40" height="16.00" fill="#2c2c2c"/>
<rect x="391.23" y="144.20" width="1.40" height="9.00" fill="#2c2c2c"/>
<rect x="431.95" y="744.00" width="1.20" height="9.00" fill="#2c2c2c"/>
<rect x="431.95" y="144.20" width="1.20" height="4.50" fill="#2c2c2c"/>
<rect x="472.57" y="744.00" width="1.20" height="9.00" fill="#2c2c2c"/>
<rect x="472.57" y="144.20" width="1.20" height="4.50" fill="#2c2c2c"/>
<rect x="513.18" y="744.00" width="1.20" height="9.00" fill="#2c2c2c"/>
<rect x="513.18" y="144.20" width="1.20" height="4.50" fill="#2c2c2c"/>
<rect x="553.70" y="741.00" width="1.40" height="16.00" fill="#2c2c2c"/>
<rect x="553.70" y="144.20" width="1.40" height="9.00" fill="#2c2c2c"/>
<rect x="594.42" y="744.00" width="1.20" height="9.00" fill="#2c2c2c"/>
<rect x="594.42" y="144.20" width="1.20" height="4.50" fill="#2c2c2c"/>
<rect x="635.03" y="744.00" width="1.20" height="9.00" fill="#2c2c2c"/>
<rect x="635.03" y="144.20" width="1.20" height="4.50" fill="#2c2c2c"/>
<rect x="675.65" y="744.00" width="1.20" height="9.00" fill="#2c2c2c"/>
<rect x="675.65" y="144.20" width="1.20" height="4.50" fill="#2c2c2c"/>
<rect x="716.17" y="741.00" width="1.40" height="16.00" fill="#2c2c2c"/>
<rect x="716.17" y="144.20" width="1.40" height="9.00" fill="#2c2c2c"/>
<rect x="756.88" y="744.00" width="1.20" height="9.00" fill="#2c2c2c"/>
<rect x="756.88" y="144.20" width="1.20" height="4.50" fill="#2c2c2c"/>
<rect x="797.50" y="744.00" width="1.20" height="9.00" fill="#2c2c2c"/>
<rect x="797.50" y="144.20" width="1.20" height="4.50" fill="#2c2c2c"/>
<rect x="838.12" y="744.00" width="1.20" height="9.00" fill="#2c2c2c"/>
<rect x="838.12" y="144.20" width="1.20" height="4.50" fill="#2c2c2c"/>
<rect x="878.63" y="741.00" width="1.40" height="16.00" fill="#2c2c2c"/>
<rect x="878.63" y="144.20" width="1.40" height="9.00" fill="#2c2c2c"/>
<rect x="919.35" y="744.00" width="1.20" height="9.00" fill="#2c2c2c"/>
<rect x="919.35" y="144.20" width="1.20" height="4.50" fill="#2c2c2c"/>
<rect x="959.97" y="744.00" width="1.20" height="9.00" fill="#2c2c2c"/>
<rect x="959.97" y="144.20" width="1.20" height="4.50" fill="#2c2c2c"/>
<rect x="1000.58" y="744.00" width="1.20" height="9.00" fill="#2c2c2c"/>
<rect x="1000.58" y="144.20" width="1.20" height="4.50" fill="#2c2c2c"/>
<rect x="1041.10" y="741.00" width="1.40" height="16.00" fill="#2c2c2c"/>
<rect x="1041.10" y="144.20" width="1.40" height="9.00" fill="#2c2c2c"/>
<rect x="60.00" y="747.30" width="14.00" height="1.40" fill="#2c2c2c"/>
<rect x="1034.80" y="747.30" width="7.00" height="1.40" fill="#2c2c2c"/>
<rect x="63.50" y="722.24" width="7.00" height="1.20" fill="#2c2c2c"/>
<rect x="1037.80" y="722.24" width="4.00" height="1.20" fill="#2c2c2c"/>
<rect x="63.50" y="697.08" width="7.00" height="1.20" fill="#2c2c2c"/>
<rect x="1037.80" y="697.08" width="4.00" height="1.20" fill="#2c2c2c"/>
<rect x="63.50" y="671.92" width="7.00" height="1.20" fill="#2c2c2c"/>
<rect x="1037.80" y="671.92" width="4.00" height="1.20" fill="#2c2c2c"/>
<rect x="60.00" y="646.67" width="14.00" height="1.40" fill="#2c2c2c"/>
<rect x="1034.80" y="646.67" width="7.00" height="1.40" fill="#2c2c2c"/>
<rect x="63.50" y="621.61" width="7.00" height="1.20" fill="#2c2c2c"/>
<rect x="1037.80" y="621.61" width="4.00" height="1.20" fill="#2c2c2c"/>
<rect x="63.50" y="596.45" width="7.00" height="1.20" fill="#2c2c2c"/>
<rect x="1037.80" y="596.45" width="4.00" height="1.20" fill="#2c2c2c"/>
<rect x="63.50" y="571.29" width="7.00" height="1.20" fill="#2c2c2c"/>
<rect x="1037.80" y="571.29" width="4.00" height="1.20" fill="#2c2c2c"/>
<rect x="60.00" y="546.03" width="14.00" height="1.40" fill="#2c2c2c"/>
<rect x="1034.80" y="546.03" width="7.00" height="1.40" fill="#2c2c2c"/>
<rect x="63.50" y="520.98" width="7.00" height="1.20" fill="#2c2c2c"/>
<rect x="1037.80" y="520.98" width="4.00" height="1.20" fill="#2c2c2c"/>
<rect x="63.50" y="495.82" width="7.00" height="1.20" fill="#2c2c2c"/>
<rect x="1037.80" y="495.82" width="4.00" height="1.20" fill="#2c2c2c"/>
<rect x="63.50" y="470.66" width="7.00" height="1.20" fill="#2c2c2c"/>
<rect x="1037.80" y="470.66" width="4.00" height="1.20" fill="#2c2c2c"/>
<rect x="60.00" y="445.40" width="14.00" height="1.40" fill="#2c2c2c"/>
<rect x="1034.80" y="445.40" width="7.00" height="1.40" fill="#2c2c2c"/>
<rect x="63.50" y="420.34" width="7.00" height="1.20" fill="#2c2c2c"/>
<rect x="1037.80" y="420.34" width="4.00" height="1.20" fill="#2c2c2c"/>
<rect x="63.50" y="395.18" width="7.00" height="1.20" fill="#2c2c2c"/>
<rect x="1037.80" y="395.18" width="4.00" height="1.20" fill="#2c2c2c"/>
<rect x="63.50" y="370.02" width="7.00" height="1.20" fill="#2c2c2c"/>
<rect x="1037.80" y="370.02" width="4.00" height="1.20" fill="#2c2c2c"/>
<rect x="60.00" y="344.77" width="14.00" height="1.40" fill="#2c2c2c"/>
<rect x="1034.80" y="344.77" width="7.00" height="1.40" fill="#2c2c2c"/>
<rect x="63.50" y="319.71" width="7.00" height="1.20" fill="#2c2c2c"/>
<rect x="1037.80" y="319.71" width="4.00" height="1.20" fill="#2c2c2c"/>
<rect x="63.50" y="294.55" width="7.00" height="1.20" fill="#2c2c2c"/>
<rect x="1037.80" y="294.55" width="4.00" height="1.20" fill="#2c2c2c"/>
<rect x="63.50" y="269.39" width="7.00" height="1.20" fill="#2c2c2c"/>
<rect x="1037.80" y="269.39" width="4.00" height="1.20" fill="#2c2c2c"/>
<rect x="60.00" y="244.13" width="14.00" height="1.40" fill="#2c2c2c"/>
<rect x="1034.80" y="244.13" width="7.00" height="1.40" fill="#2c2c2c"/>
<rect x="63.50" y="219.08" width="7.00" height="1.20" fill="#2c2c2c"/>
<rect x="1037.80" y="219.08" width="4.00" height="1.20" fill="#2c2c2c"/>
<rect x="63.50" y="193.92" width="7.00" height="1.20" fill="#2c2c2c"/>
<rect x="1037.80" y="193.92" width="4.00" height="1.20" fill="#2c2c2c"/>
<rect x="63.50" y="168.76" width="7.00" height="1.20" fill="#2c2c2c"/>
<rect x="1037.80" y="168.76" width="4.00" height="1.20" fill="#2c2c2c"/>
<rect x="60.00" y="143.50" width="14.00" height="1.40" fill="#2c2c2c"/>
<rect x="1034.80" y="143.50" width="7.00" height="1.40" fill="#2c2c2c"/>
<rect x="60.80" y="143.50" width="981.70" height="1.50" fill="#2c2c2c"/>
<rect x="66.45" y="144.20" width="1.10" height="612.80" fill="#2c2c2c"/>
<rect x="1041.25" y="144.20" width="1.10" height="611.80" fill="#2c2c2c"/>
<rect x="60.00" y="747.20" width="982.50" height="1.60" fill="#2c2c2c"/>
<line x1="163.00" y1="244.83" x2="873.50" y2="244.83" stroke="#3030ff" stroke-width="1.6"/>
<line x1="163.00" y1="244.83" x2="163.00" y2="662.00" stroke="#6a6aff" stroke-width="1.8"/>
<line x1="163.00" y1="662.00" x2="163.00" y2="697.00" stroke="#ff66ff" stroke-width="1.8"/>
<line x1="163.00" y1="697.00" x2="163.00" y2="748.00" stroke="#ff4444" stroke-width="1.6"/>
<rect x="163.00" y="746.40" width="710.50" height="2.20" fill="#c80000"/>
<path d="M163.0,662.0 L212.0,662.5 L236.0,665.0 L283.0,667.0 L335.0,665.6 L397.0,661.0 L458.0,659.0 L500.0,656.8 L540.0,655.2 L595.0,655.2 L595.5,658.6 L606.5,658.6 L607.0,655.0 L660.0,655.0 L661.0,656.0 L690.0,656.5 L745.0,657.0 L746.0,658.4 L772.0,658.6 L773.0,662.2 L782.0,662.2 L783.0,660.6 L810.0,660.6 L811.0,662.2 L840.0,662.5 L873.5,664.0" fill="none" stroke="#ff00ff" stroke-width="2.2"/>
<g stroke="#ff33ff" stroke-width="1">
<line x1="170.0" y1="659.5" x2="170.0" y2="664.3"/>
<line x1="173.0" y1="659.8" x2="173.0" y2="664.1"/>
<line x1="174.0" y1="659.1" x2="174.0" y2="664.6"/>
<line x1="176.0" y1="658.9" x2="176.0" y2="664.8"/>
<line x1="180.0" y1="660.4" x2="180.0" y2="663.8"/>
<line x1="182.0" y1="660.1" x2="182.0" y2="664.0"/>
<line x1="184.0" y1="659.7" x2="184.0" y2="664.4"/>
<line x1="200.0" y1="659.4" x2="200.0" y2="664.8"/>
<line x1="206.0" y1="660.3" x2="206.0" y2="664.3"/>
<line x1="211.0" y1="659.7" x2="211.0" y2="664.8"/>
<line x1="214.0" y1="660.4" x2="214.0" y2="664.7"/>
<line x1="217.0" y1="660.9" x2="217.0" y2="664.9"/>
<line x1="218.0" y1="661.2" x2="218.0" y2="664.8"/>
<line x1="220.0" y1="660.7" x2="220.0" y2="665.6"/>
<line x1="222.0" y1="660.6" x2="222.0" y2="666.0"/>
<line x1="223.0" y1="660.9" x2="223.0" y2="666.0"/>
<line x1="224.0" y1="661.3" x2="224.0" y2="665.8"/>
<line x1="225.0" y1="661.6" x2="225.0" y2="665.8"/>
<line x1="230.0" y1="662.0" x2="230.0" y2="666.4"/>
<line x1="233.0" y1="661.4" x2="233.0" y2="667.4"/>
<line x1="234.0" y1="662.6" x2="234.0" y2="666.7"/>
<line x1="238.0" y1="663.1" x2="238.0" y2="666.8"/>
<line x1="248.0" y1="663.5" x2="248.0" y2="667.3"/>
<line x1="252.0" y1="662.8" x2="252.0" y2="668.1"/>
<line x1="254.0" y1="662.5" x2="254.0" y2="668.4"/>
<line x1="258.0" y1="664.1" x2="258.0" y2="667.6"/>
<line x1="266.0" y1="663.4" x2="266.0" y2="668.7"/>
<line x1="267.0" y1="664.2" x2="267.0" y2="668.2"/>
<line x1="273.0" y1="664.7" x2="273.0" y2="668.2"/>
<line x1="276.0" y1="664.6" x2="276.0" y2="668.5"/>
<line x1="279.0" y1="664.5" x2="279.0" y2="668.9"/>
<line x1="285.0" y1="665.1" x2="285.0" y2="668.6"/>
<line x1="286.0" y1="663.8" x2="286.0" y2="669.5"/>
<line x1="289.0" y1="664.1" x2="289.0" y2="669.2"/>
<line x1="294.0" y1="664.1" x2="294.0" y2="668.9"/>
<line x1="313.0" y1="663.4" x2="313.0" y2="668.5"/>
<line x1="322.0" y1="663.0" x2="322.0" y2="668.4"/>
<line x1="323.0" y1="663.2" x2="323.0" y2="668.2"/>
<line x1="331.0" y1="663.5" x2="331.0" y2="667.7"/>
<line x1="333.0" y1="663.6" x2="333.0" y2="667.5"/>
<line x1="340.0" y1="662.8" x2="340.0" y2="667.3"/>
<line x1="347.0" y1="662.2" x2="347.0" y2="666.9"/>
<line x1="353.0" y1="661.8" x2="353.0" y2="666.4"/>
<line x1="355.0" y1="661.7" x2="355.0" y2="666.2"/>
<line x1="362.0" y1="661.7" x2="362.0" y2="665.3"/>
<line x1="364.0" y1="660.6" x2="364.0" y2="665.8"/>
<line x1="368.0" y1="661.1" x2="368.0" y2="664.9"/>
<line x1="370.0" y1="660.0" x2="370.0" y2="665.5"/>
<line x1="372.0" y1="661.0" x2="372.0" y2="664.6"/>
<line x1="380.0" y1="659.7" x2="380.0" y2="664.4"/>
<line x1="381.0" y1="660.4" x2="381.0" y2="663.8"/>
<line x1="384.0" y1="659.8" x2="384.0" y2="663.9"/>
<line x1="393.0" y1="658.1" x2="393.0" y2="663.9"/>
<line x1="395.0" y1="658.7" x2="395.0" y2="663.3"/>
<line x1="405.0" y1="657.9" x2="405.0" y2="663.1"/>
<line x1="409.0" y1="657.5" x2="409.0" y2="663.2"/>
<line x1="418.0" y1="657.9" x2="418.0" y2="662.4"/>
<line x1="422.0" y1="657.2" x2="422.0" y2="662.7"/>
<line x1="423.0" y1="657.1" x2="423.0" y2="662.6"/>
<line x1="424.0" y1="657.8" x2="424.0" y2="662.1"/>
<line x1="426.0" y1="658.0" x2="426.0" y2="661.9"/>
<line x1="434.0" y1="657.7" x2="434.0" y2="661.7"/>
<line x1="446.0" y1="656.3" x2="446.0" y2="661.9"/>
<line x1="450.0" y1="656.7" x2="450.0" y2="661.5"/>
<line x1="453.0" y1="655.9" x2="453.0" y2="661.8"/>
<line x1="460.0" y1="656.3" x2="460.0" y2="661.1"/>
<line x1="466.0" y1="656.1" x2="466.0" y2="660.7"/>
<line x1="471.0" y1="655.6" x2="471.0" y2="660.6"/>
<line x1="473.0" y1="655.2" x2="473.0" y2="660.7"/>
<line x1="474.0" y1="656.1" x2="474.0" y2="660.0"/>
<line x1="480.0" y1="655.0" x2="480.0" y2="660.3"/>
<line x1="481.0" y1="655.2" x2="481.0" y2="660.0"/>
<line x1="483.0" y1="655.1" x2="483.0" y2="659.9"/>
<line x1="488.0" y1="655.3" x2="488.0" y2="659.3"/>
<line x1="502.0" y1="653.4" x2="502.0" y2="659.4"/>
<line x1="504.0" y1="654.5" x2="504.0" y2="658.5"/>
<line x1="507.0" y1="653.5" x2="507.0" y2="659.0"/>
<line x1="510.0" y1="654.0" x2="510.0" y2="658.5"/>
<line x1="512.0" y1="654.2" x2="512.0" y2="658.2"/>
<line x1="516.0" y1="653.6" x2="516.0" y2="658.3"/>
<line x1="520.0" y1="654.1" x2="520.0" y2="657.7"/>
<line x1="521.0" y1="654.1" x2="521.0" y2="657.6"/>
<line x1="525.0" y1="653.7" x2="525.0" y2="657.6"/>
<line x1="526.0" y1="652.7" x2="526.0" y2="658.3"/>
<line x1="529.0" y1="653.7" x2="529.0" y2="657.4"/>
<line x1="538.0" y1="652.4" x2="538.0" y2="657.7"/>
<line x1="540.0" y1="652.7" x2="540.0" y2="657.3"/>
<line x1="543.0" y1="653.2" x2="543.0" y2="657.0"/>
<line x1="545.0" y1="652.1" x2="545.0" y2="657.8"/>
<line x1="568.0" y1="652.9" x2="568.0" y2="657.2"/>
<line x1="570.0" y1="652.9" x2="570.0" y2="657.2"/>
<line x1="586.0" y1="652.5" x2="586.0" y2="657.5"/>
<line x1="590.0" y1="653.1" x2="590.0" y2="657.1"/>
<line x1="592.0" y1="653.0" x2="592.0" y2="657.1"/>
<line x1="601.0" y1="655.9" x2="601.0" y2="660.9"/>
<line x1="603.0" y1="655.4" x2="603.0" y2="661.2"/>
<line x1="604.0" y1="656.1" x2="604.0" y2="660.7"/>
<line x1="605.0" y1="656.1" x2="605.0" y2="660.8"/>
<line x1="607.0" y1="651.8" x2="607.0" y2="657.6"/>
<line x1="618.0" y1="652.8" x2="618.0" y2="656.9"/>
<line x1="619.0" y1="653.0" x2="619.0" y2="656.8"/>
<line x1="624.0" y1="651.7" x2="624.0" y2="657.7"/>
<line x1="626.0" y1="651.8" x2="626.0" y2="657.6"/>
<line x1="638.0" y1="652.3" x2="638.0" y2="657.3"/>
<line x1="640.0" y1="653.1" x2="640.0" y2="656.7"/>
<line x1="642.0" y1="652.5" x2="642.0" y2="657.1"/>
<line x1="654.0" y1="651.9" x2="654.0" y2="657.6"/>
<line x1="664.0" y1="653.9" x2="664.0" y2="658.0"/>
<line x1="668.0" y1="654.2" x2="668.0" y2="657.8"/>
<line x1="672.0" y1="653.6" x2="672.0" y2="658.4"/>
<line x1="673.0" y1="654.3" x2="673.0" y2="657.9"/>
<line x1="679.0" y1="654.0" x2="679.0" y2="658.3"/>
<line x1="682.0" y1="654.4" x2="682.0" y2="658.1"/>
<line x1="686.0" y1="654.0" x2="686.0" y2="658.5"/>
<line x1="698.0" y1="653.5" x2="698.0" y2="659.1"/>
<line x1="699.0" y1="654.7" x2="699.0" y2="658.3"/>
<line x1="705.0" y1="654.5" x2="705.0" y2="658.5"/>
<line x1="707.0" y1="654.4" x2="707.0" y2="658.6"/>
<line x1="711.0" y1="654.4" x2="711.0" y2="658.7"/>
<line x1="714.0" y1="653.9" x2="714.0" y2="659.1"/>
<line x1="732.0" y1="654.2" x2="732.0" y2="659.1"/>
<line x1="737.0" y1="654.0" x2="737.0" y2="659.4"/>
<line x1="740.0" y1="654.4" x2="740.0" y2="659.1"/>
<line x1="746.0" y1="655.8" x2="746.0" y2="660.6"/>
<line x1="748.0" y1="656.5" x2="748.0" y2="660.2"/>
<line x1="751.0" y1="655.7" x2="751.0" y2="660.8"/>
<line x1="752.0" y1="655.5" x2="752.0" y2="660.9"/>
<line x1="782.0" y1="658.4" x2="782.0" y2="665.3"/>
<line x1="785.0" y1="658.2" x2="785.0" y2="662.6"/>
<line x1="789.0" y1="658.0" x2="789.0" y2="662.8"/>
<line x1="790.0" y1="657.1" x2="790.0" y2="663.5"/>
<line x1="792.0" y1="658.6" x2="792.0" y2="662.4"/>
<line x1="796.0" y1="658.5" x2="796.0" y2="662.5"/>
<line x1="797.0" y1="658.2" x2="797.0" y2="662.7"/>
<line x1="802.0" y1="658.0" x2="802.0" y2="662.8"/>
<line x1="803.0" y1="656.8" x2="803.0" y2="663.7"/>
<line x1="816.0" y1="657.9" x2="816.0" y2="665.7"/>
<line x1="825.0" y1="659.3" x2="825.0" y2="664.9"/>
<line x1="830.0" y1="660.2" x2="830.0" y2="664.3"/>
<line x1="839.0" y1="658.6" x2="839.0" y2="665.6"/>
<line x1="840.0" y1="658.5" x2="840.0" y2="665.7"/>
<line x1="843.0" y1="660.1" x2="843.0" y2="664.8"/>
<line x1="845.0" y1="659.6" x2="845.0" y2="665.3"/>
<line x1="854.0" y1="659.1" x2="854.0" y2="666.3"/>
<line x1="855.0" y1="659.9" x2="855.0" y2="665.8"/>
<line x1="857.0" y1="659.2" x2="857.0" y2="666.5"/>
<line x1="860.0" y1="660.8" x2="860.0" y2="665.6"/>
<line x1="865.0" y1="660.8" x2="865.0" y2="666.0"/>
<line x1="870.0" y1="661.0" x2="870.0" y2="666.2"/>
</g>
<g stroke="#ff55ff" stroke-width="1.1">
<line x1="187.6" y1="662.3" x2="187.6" y2="677.0"/>
<line x1="203.0" y1="662.4" x2="203.0" y2="677.0"/>
<line x1="302.0" y1="666.5" x2="302.0" y2="671.0"/>
<line x1="312.0" y1="666.2" x2="312.0" y2="671.0"/>
<line x1="351.0" y1="664.4" x2="351.0" y2="673.0"/>
<line x1="415.6" y1="660.4" x2="415.6" y2="673.0"/>
<line x1="436.0" y1="659.7" x2="436.0" y2="668.0"/>
<line x1="481.0" y1="657.8" x2="481.0" y2="668.0"/>
<line x1="497.0" y1="657.0" x2="497.0" y2="671.0"/>
<line x1="523.0" y1="655.9" x2="523.0" y2="661.0"/>
<line x1="549.4" y1="655.2" x2="549.4" y2="661.0"/>
<line x1="619.0" y1="655.0" x2="619.0" y2="673.0"/>
<line x1="667.0" y1="656.1" x2="667.0" y2="671.0"/>
<line x1="700.6" y1="656.6" x2="700.6" y2="667.0"/>
<line x1="703.8" y1="656.6" x2="703.8" y2="667.0"/>
<line x1="718.7" y1="656.8" x2="718.7" y2="671.0"/>
<line x1="729.0" y1="656.9" x2="729.0" y2="668.0"/>
<line x1="753.0" y1="658.5" x2="753.0" y2="670.0"/>
<line x1="826.0" y1="662.4" x2="826.0" y2="680.0"/>
</g>
<line x1="841" y1="662.5" x2="841" y2="694" stroke="#ff66ff" stroke-width="2"/>
<g fill="#00ff00">
<rect x="163.00" y="319.00" width="52.00" height="11.50" fill="#00ff00"/>
<rect x="215.00" y="325.00" width="15.00" height="10.00" fill="#00ff00"/>
<rect x="230.00" y="340.00" width="8.00" height="5.50" fill="#00ff00"/>
<rect x="238.00" y="335.00" width="10.00" height="6.70" fill="#00ff00"/>
<rect x="248.00" y="340.00" width="22.00" height="6.00" fill="#00ff00"/>
<rect x="270.00" y="344.70" width="47.00" height="5.30" fill="#00ff00"/>
<rect x="317.00" y="340.00" width="19.00" height="5.00" fill="#00ff00"/>
<rect x="336.00" y="335.00" width="18.00" height="5.50" fill="#00ff00"/>
<rect x="354.00" y="330.00" width="19.00" height="5.00" fill="#00ff00"/>
<rect x="373.00" y="325.00" width="7.00" height="5.70" fill="#00ff00"/>
<rect x="380.00" y="319.50" width="8.00" height="6.30" fill="#00ff00"/>
<rect x="388.00" y="314.70" width="8.00" height="5.10" fill="#00ff00"/>
<rect x="396.00" y="309.70" width="38.00" height="5.30" fill="#00ff00"/>
<rect x="434.00" y="305.00" width="23.00" height="5.20" fill="#00ff00"/>
<rect x="457.00" y="300.00" width="26.00" height="5.20" fill="#00ff00"/>
<rect x="483.00" y="295.00" width="31.00" height="5.70" fill="#00ff00"/>
<rect x="514.00" y="289.20" width="81.00" height="6.50" fill="#00ff00"/>
<rect x="595.00" y="305.00" width="12.00" height="5.20" fill="#00ff00"/>
<rect x="607.00" y="289.20" width="63.00" height="6.50" fill="#00ff00"/>
<rect x="663.00" y="295.00" width="6.00" height="5.50" fill="#00ff00"/>
<rect x="680.00" y="295.00" width="20.00" height="5.00" fill="#00ff00"/>
<rect x="700.00" y="300.00" width="25.00" height="5.50" fill="#00ff00"/>
<rect x="725.00" y="305.00" width="3.00" height="5.00" fill="#00ff00"/>
<rect x="728.00" y="300.00" width="29.00" height="5.50" fill="#00ff00"/>
<rect x="757.00" y="305.00" width="16.00" height="5.00" fill="#00ff00"/>
<rect x="765.00" y="310.00" width="8.00" height="5.00" fill="#00ff00"/>
<rect x="773.00" y="319.00" width="11.00" height="11.50" fill="#00ff00"/>
<rect x="773.00" y="315.00" width="4.00" height="4.00" fill="#00ff00"/>
<rect x="784.00" y="310.00" width="26.00" height="5.00" fill="#00ff00"/>
<rect x="797.00" y="305.00" width="10.00" height="5.00" fill="#00ff00"/>
<rect x="810.00" y="310.00" width="5.00" height="10.00" fill="#00ff00"/>
<rect x="815.00" y="320.00" width="19.00" height="6.00" fill="#00ff00"/>
<rect x="834.00" y="325.40" width="32.00" height="5.40" fill="#00ff00"/>
<rect x="853.00" y="330.00" width="20.50" height="8.00" fill="#00ff00"/>
<rect x="866.00" y="328.00" width="7.50" height="15.00" fill="#00ff00"/>
</g>
<g stroke="#33ff33" stroke-width="1.05">
<line x1="163.5" y1="330.0" x2="163.5" y2="340.5"/>
<line x1="164.5" y1="330.0" x2="164.5" y2="335.5"/>
<line x1="165.5" y1="330.0" x2="165.5" y2="335.5"/>
<line x1="166.5" y1="330.0" x2="166.5" y2="335.5"/>
<line x1="167.5" y1="330.0" x2="167.5" y2="335.5"/>
<line x1="168.5" y1="330.0" x2="168.5" y2="340.5"/>
<line x1="171.5" y1="314.0" x2="171.5" y2="319.5"/>
<line x1="171.5" y1="330.0" x2="171.5" y2="335.5"/>
<line x1="172.5" y1="330.0" x2="172.5" y2="335.5"/>
<line x1="174.5" y1="314.0" x2="174.5" y2="319.5"/>
<line x1="175.5" y1="314.0" x2="175.5" y2="319.5"/>
<line x1="180.5" y1="330.0" x2="180.5" y2="335.5"/>
<line x1="183.5" y1="330.0" x2="183.5" y2="335.5"/>
<line x1="185.5" y1="314.0" x2="185.5" y2="319.5"/>
<line x1="187.5" y1="330.0" x2="187.5" y2="335.5"/>
<line x1="188.5" y1="330.0" x2="188.5" y2="335.5"/>
<line x1="189.5" y1="330.0" x2="189.5" y2="335.5"/>
<line x1="190.5" y1="330.0" x2="190.5" y2="335.5"/>
<line x1="191.5" y1="330.0" x2="191.5" y2="340.5"/>
<line x1="192.5" y1="330.0" x2="192.5" y2="335.5"/>
<line x1="196.5" y1="330.0" x2="196.5" y2="340.5"/>
<line x1="197.5" y1="314.0" x2="197.5" y2="319.5"/>
<line x1="201.5" y1="330.0" x2="201.5" y2="335.5"/>
<line x1="204.5" y1="330.0" x2="204.5" y2="335.5"/>
<line x1="205.5" y1="314.0" x2="205.5" y2="319.5"/>
<line x1="205.5" y1="330.0" x2="205.5" y2="340.5"/>
<line x1="210.5" y1="314.0" x2="210.5" y2="319.5"/>
<line x1="210.5" y1="330.0" x2="210.5" y2="335.5"/>
<line x1="211.5" y1="314.0" x2="211.5" y2="319.5"/>
<line x1="212.5" y1="314.0" x2="212.5" y2="319.5"/>
<line x1="213.5" y1="314.0" x2="213.5" y2="319.5"/>
<line x1="214.5" y1="330.0" x2="214.5" y2="340.5"/>
<line x1="215.5" y1="334.5" x2="215.5" y2="340.0"/>
<line x1="224.5" y1="334.5" x2="224.5" y2="340.0"/>
<line x1="228.5" y1="320.0" x2="228.5" y2="325.5"/>
<line x1="228.5" y1="334.5" x2="228.5" y2="340.0"/>
<line x1="229.5" y1="320.0" x2="229.5" y2="325.5"/>
<line x1="229.5" y1="334.5" x2="229.5" y2="340.0"/>
<line x1="230.5" y1="335.0" x2="230.5" y2="340.5"/>
<line x1="230.5" y1="345.0" x2="230.5" y2="350.5"/>
<line x1="231.5" y1="330.0" x2="231.5" y2="340.5"/>
<line x1="236.5" y1="335.0" x2="236.5" y2="340.5"/>
<line x1="237.5" y1="335.0" x2="237.5" y2="340.5"/>
<line x1="238.5" y1="330.0" x2="238.5" y2="335.5"/>
<line x1="239.5" y1="330.0" x2="239.5" y2="335.5"/>
<line x1="240.5" y1="330.0" x2="240.5" y2="335.5"/>
<line x1="241.5" y1="325.0" x2="241.5" y2="335.5"/>
<line x1="241.5" y1="341.2" x2="241.5" y2="346.7"/>
<line x1="242.5" y1="325.0" x2="242.5" y2="335.5"/>
<line x1="243.5" y1="330.0" x2="243.5" y2="335.5"/>
<line x1="250.5" y1="345.5" x2="250.5" y2="351.0"/>
<line x1="251.5" y1="345.5" x2="251.5" y2="356.0"/>
<line x1="253.5" y1="330.0" x2="253.5" y2="340.5"/>
<line x1="254.5" y1="335.0" x2="254.5" y2="340.5"/>
<line x1="254.5" y1="345.5" x2="254.5" y2="351.0"/>
<line x1="255.5" y1="345.5" x2="255.5" y2="351.0"/>
<line x1="262.5" y1="345.5" x2="262.5" y2="356.0"/>
<line x1="263.5" y1="345.5" x2="263.5" y2="351.0"/>
<line x1="264.5" y1="335.0" x2="264.5" y2="340.5"/>
<line x1="265.5" y1="335.0" x2="265.5" y2="340.5"/>
<line x1="266.5" y1="335.0" x2="266.5" y2="340.5"/>
<line x1="267.5" y1="335.0" x2="267.5" y2="340.5"/>
<line x1="269.5" y1="335.0" x2="269.5" y2="340.5"/>
<line x1="270.5" y1="339.7" x2="270.5" y2="345.2"/>
<line x1="271.5" y1="339.7" x2="271.5" y2="345.2"/>
<line x1="272.5" y1="339.7" x2="272.5" y2="345.2"/>
<line x1="273.5" y1="339.7" x2="273.5" y2="345.2"/>
<line x1="275.5" y1="349.5" x2="275.5" y2="355.0"/>
<line x1="276.5" y1="339.7" x2="276.5" y2="345.2"/>
<line x1="277.5" y1="339.7" x2="277.5" y2="345.2"/>
<line x1="281.5" y1="339.7" x2="281.5" y2="345.2"/>
<line x1="283.5" y1="339.7" x2="283.5" y2="345.2"/>
<line x1="283.5" y1="349.5" x2="283.5" y2="355.0"/>
<line x1="284.5" y1="339.7" x2="284.5" y2="345.2"/>
<line x1="284.5" y1="349.5" x2="284.5" y2="355.0"/>
<line x1="285.5" y1="339.7" x2="285.5" y2="345.2"/>
<line x1="286.5" y1="339.7" x2="286.5" y2="345.2"/>
<line x1="287.5" y1="339.7" x2="287.5" y2="345.2"/>
<line x1="288.5" y1="339.7" x2="288.5" y2="345.2"/>
<line x1="289.5" y1="339.7" x2="289.5" y2="345.2"/>
<line x1="290.5" y1="349.5" x2="290.5" y2="355.0"/>
<line x1="291.5" y1="339.7" x2="291.5" y2="345.2"/>
<line x1="292.5" y1="349.5" x2="292.5" y2="355.0"/>
<line x1="293.5" y1="349.5" x2="293.5" y2="360.0"/>
<line x1="294.5" y1="339.7" x2="294.5" y2="345.2"/>
<line x1="294.5" y1="349.5" x2="294.5" y2="360.0"/>
<line x1="295.5" y1="339.7" x2="295.5" y2="345.2"/>
<line x1="295.5" y1="349.5" x2="295.5" y2="355.0"/>
<line x1="296.5" y1="339.7" x2="296.5" y2="345.2"/>
<line x1="297.5" y1="339.7" x2="297.5" y2="345.2"/>
<line x1="298.5" y1="334.7" x2="298.5" y2="345.2"/>
<line x1="298.5" y1="349.5" x2="298.5" y2="355.0"/>
<line x1="299.5" y1="349.5" x2="299.5" y2="355.0"/>
<line x1="300.5" y1="349.5" x2="300.5" y2="355.0"/>
<line x1="301.5" y1="349.5" x2="301.5" y2="355.0"/>
<line x1="303.5" y1="339.7" x2="303.5" y2="345.2"/>
<line x1="304.5" y1="339.7" x2="304.5" y2="345.2"/>
<line x1="311.5" y1="339.7" x2="311.5" y2="345.2"/>
<line x1="312.5" y1="339.7" x2="312.5" y2="345.2"/>
<line x1="315.5" y1="349.5" x2="315.5" y2="355.0"/>
<line x1="316.5" y1="349.5" x2="316.5" y2="355.0"/>
<line x1="317.5" y1="344.5" x2="317.5" y2="350.0"/>
<line x1="320.5" y1="335.0" x2="320.5" y2="340.5"/>
<line x1="322.5" y1="344.5" x2="322.5" y2="350.0"/>
<line x1="323.5" y1="344.5" x2="323.5" y2="355.0"/>
<line x1="325.5" y1="344.5" x2="325.5" y2="350.0"/>
<line x1="326.5" y1="344.5" x2="326.5" y2="350.0"/>
<line x1="327.5" y1="344.5" x2="327.5" y2="350.0"/>
<line x1="328.5" y1="344.5" x2="328.5" y2="350.0"/>
<line x1="329.5" y1="344.5" x2="329.5" y2="350.0"/>
<line x1="330.5" y1="344.5" x2="330.5" y2="350.0"/>
<line x1="335.5" y1="344.5" x2="335.5" y2="350.0"/>
<line x1="354.5" y1="325.0" x2="354.5" y2="330.5"/>
<line x1="355.5" y1="325.0" x2="355.5" y2="330.5"/>
<line x1="356.5" y1="325.0" x2="356.5" y2="330.5"/>
<line x1="357.5" y1="325.0" x2="357.5" y2="330.5"/>
<line x1="358.5" y1="325.0" x2="358.5" y2="330.5"/>
<line x1="359.5" y1="325.0" x2="359.5" y2="330.5"/>
<line x1="360.5" y1="320.0" x2="360.5" y2="330.5"/>
<line x1="361.5" y1="320.0" x2="361.5" y2="330.5"/>
<line x1="372.5" y1="334.5" x2="372.5" y2="340.0"/>
<line x1="373.5" y1="330.2" x2="373.5" y2="335.7"/>
<line x1="374.5" y1="330.2" x2="374.5" y2="335.7"/>
<line x1="405.5" y1="314.5" x2="405.5" y2="320.0"/>
<line x1="415.5" y1="304.7" x2="415.5" y2="310.2"/>
<line x1="416.5" y1="304.7" x2="416.5" y2="310.2"/>
<line x1="426.5" y1="304.7" x2="426.5" y2="310.2"/>
<line x1="443.5" y1="300.0" x2="443.5" y2="305.5"/>
<line x1="444.5" y1="300.0" x2="444.5" y2="305.5"/>
<line x1="445.5" y1="300.0" x2="445.5" y2="305.5"/>
<line x1="446.5" y1="300.0" x2="446.5" y2="305.5"/>
<line x1="447.5" y1="300.0" x2="447.5" y2="305.5"/>
<line x1="454.5" y1="300.0" x2="454.5" y2="305.5"/>
<line x1="455.5" y1="300.0" x2="455.5" y2="305.5"/>
<line x1="465.5" y1="304.7" x2="465.5" y2="310.2"/>
<line x1="466.5" y1="304.7" x2="466.5" y2="310.2"/>
<line x1="467.5" y1="304.7" x2="467.5" y2="315.2"/>
<line x1="522.5" y1="295.2" x2="522.5" y2="300.7"/>
<line x1="559.5" y1="295.2" x2="559.5" y2="300.7"/>
<line x1="560.5" y1="295.2" x2="560.5" y2="300.7"/>
<line x1="566.5" y1="295.2" x2="566.5" y2="300.7"/>
<line x1="571.5" y1="295.2" x2="571.5" y2="300.7"/>
<line x1="575.5" y1="295.2" x2="575.5" y2="300.7"/>
<line x1="576.5" y1="279.2" x2="576.5" y2="289.7"/>
<line x1="577.5" y1="295.2" x2="577.5" y2="300.7"/>
<line x1="578.5" y1="295.2" x2="578.5" y2="300.7"/>
<line x1="579.5" y1="295.2" x2="579.5" y2="300.7"/>
<line x1="580.5" y1="284.2" x2="580.5" y2="289.7"/>
<line x1="581.5" y1="284.2" x2="581.5" y2="289.7"/>
<line x1="583.5" y1="295.2" x2="583.5" y2="300.7"/>
<line x1="586.5" y1="284.2" x2="586.5" y2="289.7"/>
<line x1="590.5" y1="295.2" x2="590.5" y2="300.7"/>
<line x1="593.5" y1="295.2" x2="593.5" y2="300.7"/>
<line x1="596.5" y1="300.0" x2="596.5" y2="305.5"/>
<line x1="597.5" y1="295.0" x2="597.5" y2="305.5"/>
<line x1="597.5" y1="309.7" x2="597.5" y2="315.2"/>
<line x1="598.5" y1="295.0" x2="598.5" y2="305.5"/>
<line x1="613.5" y1="279.2" x2="613.5" y2="289.7"/>
<line x1="614.5" y1="279.2" x2="614.5" y2="289.7"/>
<line x1="615.5" y1="284.2" x2="615.5" y2="289.7"/>
<line x1="616.5" y1="284.2" x2="616.5" y2="289.7"/>
<line x1="617.5" y1="284.2" x2="617.5" y2="289.7"/>
<line x1="631.5" y1="284.2" x2="631.5" y2="289.7"/>
<line x1="632.5" y1="295.2" x2="632.5" y2="300.7"/>
<line x1="649.5" y1="284.2" x2="649.5" y2="289.7"/>
<line x1="665.5" y1="284.2" x2="665.5" y2="289.7"/>
<line x1="681.5" y1="290.0" x2="681.5" y2="295.5"/>
<line x1="682.5" y1="290.0" x2="682.5" y2="295.5"/>
<line x1="684.5" y1="290.0" x2="684.5" y2="295.5"/>
<line x1="685.5" y1="299.5" x2="685.5" y2="305.0"/>
<line x1="686.5" y1="299.5" x2="686.5" y2="305.0"/>
<line x1="687.5" y1="299.5" x2="687.5" y2="305.0"/>
<line x1="694.5" y1="290.0" x2="694.5" y2="295.5"/>
<line x1="695.5" y1="290.0" x2="695.5" y2="295.5"/>
<line x1="696.5" y1="290.0" x2="696.5" y2="295.5"/>
<line x1="697.5" y1="285.0" x2="697.5" y2="295.5"/>
<line x1="698.5" y1="285.0" x2="698.5" y2="295.5"/>
<line x1="717.5" y1="290.0" x2="717.5" y2="300.5"/>
<line x1="732.5" y1="305.0" x2="732.5" y2="310.5"/>
<line x1="737.5" y1="290.0" x2="737.5" y2="300.5"/>
<line x1="738.5" y1="305.0" x2="738.5" y2="310.5"/>
<line x1="742.5" y1="295.0" x2="742.5" y2="300.5"/>
<line x1="742.5" y1="305.0" x2="742.5" y2="315.5"/>
<line x1="743.5" y1="305.0" x2="743.5" y2="310.5"/>
<line x1="744.5" y1="305.0" x2="744.5" y2="310.5"/>
<line x1="759.5" y1="300.0" x2="759.5" y2="305.5"/>
<line x1="760.5" y1="295.0" x2="760.5" y2="305.5"/>
<line x1="761.5" y1="295.0" x2="761.5" y2="305.5"/>
<line x1="768.5" y1="314.5" x2="768.5" y2="320.0"/>
<line x1="769.5" y1="314.5" x2="769.5" y2="325.0"/>
<line x1="770.5" y1="314.5" x2="770.5" y2="325.0"/>
<line x1="780.5" y1="314.0" x2="780.5" y2="319.5"/>
<line x1="781.5" y1="314.0" x2="781.5" y2="319.5"/>
<line x1="782.5" y1="314.0" x2="782.5" y2="319.5"/>
<line x1="785.5" y1="305.0" x2="785.5" y2="310.5"/>
<line x1="786.5" y1="300.0" x2="786.5" y2="310.5"/>
<line x1="787.5" y1="305.0" x2="787.5" y2="310.5"/>
<line x1="787.5" y1="314.5" x2="787.5" y2="320.0"/>
<line x1="788.5" y1="300.0" x2="788.5" y2="310.5"/>
<line x1="789.5" y1="305.0" x2="789.5" y2="310.5"/>
<line x1="790.5" y1="300.0" x2="790.5" y2="310.5"/>
<line x1="791.5" y1="314.5" x2="791.5" y2="320.0"/>
<line x1="792.5" y1="314.5" x2="792.5" y2="320.0"/>
<line x1="793.5" y1="305.0" x2="793.5" y2="310.5"/>
<line x1="794.5" y1="305.0" x2="794.5" y2="310.5"/>
<line x1="795.5" y1="305.0" x2="795.5" y2="310.5"/>
<line x1="796.5" y1="305.0" x2="796.5" y2="310.5"/>
<line x1="796.5" y1="314.5" x2="796.5" y2="320.0"/>
<line x1="797.5" y1="300.0" x2="797.5" y2="305.5"/>
<line x1="798.5" y1="300.0" x2="798.5" y2="305.5"/>
<line x1="799.5" y1="300.0" x2="799.5" y2="305.5"/>
<line x1="800.5" y1="300.0" x2="800.5" y2="305.5"/>
<line x1="801.5" y1="300.0" x2="801.5" y2="305.5"/>
<line x1="803.5" y1="314.5" x2="803.5" y2="320.0"/>
<line x1="804.5" y1="314.5" x2="804.5" y2="320.0"/>
<line x1="805.5" y1="314.5" x2="805.5" y2="320.0"/>
<line x1="806.5" y1="300.0" x2="806.5" y2="305.5"/>
<line x1="807.5" y1="305.0" x2="807.5" y2="310.5"/>
<line x1="810.5" y1="319.5" x2="810.5" y2="325.0"/>
<line x1="813.5" y1="305.0" x2="813.5" y2="310.5"/>
<line x1="816.5" y1="315.0" x2="816.5" y2="320.5"/>
<line x1="829.5" y1="325.5" x2="829.5" y2="331.0"/>
<line x1="830.5" y1="325.5" x2="830.5" y2="336.0"/>
<line x1="831.5" y1="315.0" x2="831.5" y2="320.5"/>
<line x1="831.5" y1="325.5" x2="831.5" y2="331.0"/>
<line x1="834.5" y1="320.4" x2="834.5" y2="325.9"/>
<line x1="839.5" y1="320.4" x2="839.5" y2="325.9"/>
<line x1="845.5" y1="320.4" x2="845.5" y2="325.9"/>
<line x1="845.5" y1="330.3" x2="845.5" y2="335.8"/>
<line x1="857.5" y1="320.4" x2="857.5" y2="325.9"/>
<line x1="858.5" y1="320.4" x2="858.5" y2="325.9"/>
<line x1="859.5" y1="320.4" x2="859.5" y2="325.9"/>
<line x1="860.5" y1="320.4" x2="860.5" y2="325.9"/>
<line x1="860.5" y1="337.5" x2="860.5" y2="343.0"/>
<line x1="861.5" y1="320.4" x2="861.5" y2="325.9"/>
<line x1="862.5" y1="320.4" x2="862.5" y2="325.9"/>
<line x1="863.5" y1="320.4" x2="863.5" y2="325.9"/>
<line x1="864.5" y1="320.4" x2="864.5" y2="325.9"/>
<line x1="870.5" y1="323.0" x2="870.5" y2="328.5"/>
<line x1="870.5" y1="342.5" x2="870.5" y2="348.0"/>
</g>
<g stroke="#ff55ff" stroke-width="1.1">
<line x1="187.6" y1="662.3" x2="187.6" y2="677.0"/>
<line x1="203.0" y1="662.4" x2="203.0" y2="677.0"/>
<line x1="302.0" y1="666.5" x2="302.0" y2="671.0"/>
<line x1="312.0" y1="666.2" x2="312.0" y2="671.0"/>
<line x1="351.0" y1="664.4" x2="351.0" y2="673.0"/>
<line x1="415.6" y1="660.4" x2="415.6" y2="673.0"/>
<line x1="436.0" y1="659.7" x2="436.0" y2="668.0"/>
<line x1="481.0" y1="657.8" x2="481.0" y2="668.0"/>
<line x1="497.0" y1="657.0" x2="497.0" y2="671.0"/>
<line x1="523.0" y1="655.9" x2="523.0" y2="661.0"/>
<line x1="549.4" y1="655.2" x2="549.4" y2="661.0"/>
<line x1="619.0" y1="655.0" x2="619.0" y2="673.0"/>
<line x1="667.0" y1="656.1" x2="667.0" y2="671.0"/>
<line x1="700.6" y1="656.6" x2="700.6" y2="667.0"/>
<line x1="703.8" y1="656.6" x2="703.8" y2="667.0"/>
<line x1="718.7" y1="656.8" x2="718.7" y2="671.0"/>
<line x1="729.0" y1="656.9" x2="729.0" y2="668.0"/>
<line x1="753.0" y1="658.5" x2="753.0" y2="670.0"/>
<line x1="826.0" y1="662.4" x2="826.0" y2="680.0"/>
</g>
<line x1="841" y1="662.5" x2="841" y2="694" stroke="#ff66ff" stroke-width="2"/>
<g fill="#00ff00">
<rect x="163.00" y="319.00" width="52.00" height="11.50" fill="#00ff00"/>
<rect x="215.00" y="325.00" width="15.00" height="10.00" fill="#00ff00"/>
<rect x="230.00" y="340.00" width="8.00" height="5.50" fill="#00ff00"/>
<rect x="238.00" y="335.00" width="10.00" height="6.70" fill="#00ff00"/>
<rect x="248.00" y="340.00" width="22.00" height="6.00" fill="#00ff00"/>
<rect x="270.00" y="344.70" width="47.00" height="5.30" fill="#00ff00"/>
<rect x="317.00" y="340.00" width="19.00" height="5.00" fill="#00ff00"/>
<rect x="336.00" y="335.00" width="18.00" height="5.50" fill="#00ff00"/>
<rect x="354.00" y="330.00" width="19.00" height="5.00" fill="#00ff00"/>
<rect x="373.00" y="325.00" width="7.00" height="5.70" fill="#00ff00"/>
<rect x="380.00" y="319.50" width="8.00" height="6.30" fill="#00ff00"/>
<rect x="388.00" y="314.70" width="8.00" height="5.10" fill="#00ff00"/>
<rect x="396.00" y="309.70" width="38.00" height="5.30" fill="#00ff00"/>
<rect x="434.00" y="305.00" width="23.00" height="5.20" fill="#00ff00"/>
<rect x="457.00" y="300.00" width="26.00" height="5.20" fill="#00ff00"/>
<rect x="483.00" y="295.00" width="31.00" height="5.70" fill="#00ff00"/>
<rect x="514.00" y="289.20" width="81.00" height="6.50" fill="#00ff00"/>
<rect x="595.00" y="305.00" width="12.00" height="5.20" fill="#00ff00"/>
<rect x="607.00" y="289.20" width="63.00" height="6.50" fill="#00ff00"/>
<rect x="663.00" y="295.00" width="6.00" height="5.50" fill="#00ff00"/>
<rect x="680.00" y="295.00" width="20.00" height="5.00" fill="#00ff00"/>
<rect x="700.00" y="300.00" width="25.00" height="5.50" fill="#00ff00"/>
<rect x="725.00" y="305.00" width="3.00" height="5.00" fill="#00ff00"/>
<rect x="728.00" y="300.00" width="29.00" height="5.50" fill="#00ff00"/>
<rect x="757.00" y="305.00" width="16.00" height="5.00" fill="#00ff00"/>
<rect x="765.00" y="310.00" width="8.00" height="5.00" fill="#00ff00"/>
<rect x="773.00" y="319.00" width="11.00" height="11.50" fill="#00ff00"/>
<rect x="773.00" y="315.00" width="4.00" height="4.00" fill="#00ff00"/>
<rect x="784.00" y="310.00" width="26.00" height="5.00" fill="#00ff00"/>
<rect x="797.00" y="305.00" width="10.00" height="5.00" fill="#00ff00"/>
<rect x="810.00" y="310.00" width="5.00" height="10.00" fill="#00ff00"/>
<rect x="815.00" y="320.00" width="19.00" height="6.00" fill="#00ff00"/>
<rect x="834.00" y="325.40" width="32.00" height="5.40" fill="#00ff00"/>
<rect x="853.00" y="330.00" width="20.50" height="8.00" fill="#00ff00"/>
<rect x="866.00" y="328.00" width="7.50" height="15.00" fill="#00ff00"/>
</g>
<g stroke="#33ff33" stroke-width="1">
<line x1="164.5" y1="314.7" x2="164.5" y2="321.0"/>
<line x1="164.5" y1="328.5" x2="164.5" y2="335.2"/>
<line x1="166.5" y1="318.3" x2="166.5" y2="321.0"/>
<line x1="166.5" y1="328.5" x2="166.5" y2="337.4"/>
<line x1="167.5" y1="317.7" x2="167.5" y2="321.0"/>
<line x1="167.5" y1="328.5" x2="167.5" y2="336.2"/>
<line x1="168.5" y1="328.5" x2="168.5" y2="337.0"/>
<line x1="170.5" y1="311.9" x2="170.5" y2="321.0"/>
<line x1="170.5" y1="328.5" x2="170.5" y2="331.0"/>
<line x1="171.5" y1="318.8" x2="171.5" y2="321.0"/>
<line x1="171.5" y1="328.5" x2="171.5" y2="334.4"/>
<line x1="172.5" y1="317.9" x2="172.5" y2="321.0"/>
<line x1="173.5" y1="328.5" x2="173.5" y2="336.4"/>
<line x1="174.5" y1="309.2" x2="174.5" y2="321.0"/>
<line x1="174.5" y1="328.5" x2="174.5" y2="333.5"/>
<line x1="175.5" y1="310.3" x2="175.5" y2="321.0"/>
<line x1="175.5" y1="328.5" x2="175.5" y2="334.6"/>
<line x1="176.5" y1="310.1" x2="176.5" y2="321.0"/>
<line x1="176.5" y1="328.5" x2="176.5" y2="338.4"/>
<line x1="177.5" y1="328.5" x2="177.5" y2="334.2"/>
<line x1="178.5" y1="314.5" x2="178.5" y2="321.0"/>
<line x1="178.5" y1="328.5" x2="178.5" y2="336.7"/>
<line x1="179.5" y1="316.0" x2="179.5" y2="321.0"/>
<line x1="180.5" y1="314.3" x2="180.5" y2="321.0"/>
<line x1="181.5" y1="315.2" x2="181.5" y2="321.0"/>
<line x1="183.5" y1="312.3" x2="183.5" y2="321.0"/>
<line x1="184.5" y1="311.8" x2="184.5" y2="321.0"/>
<line x1="186.5" y1="312.5" x2="186.5" y2="321.0"/>
<line x1="186.5" y1="328.5" x2="186.5" y2="338.2"/>
<line x1="187.5" y1="309.2" x2="187.5" y2="321.0"/>
<line x1="187.5" y1="328.5" x2="187.5" y2="337.6"/>
<line x1="188.5" y1="314.8" x2="188.5" y2="321.0"/>
<line x1="189.5" y1="312.9" x2="189.5" y2="321.0"/>
<line x1="189.5" y1="328.5" x2="189.5" y2="334.5"/>
<line x1="190.5" y1="328.5" x2="190.5" y2="339.6"/>
<line x1="191.5" y1="313.2" x2="191.5" y2="321.0"/>
<line x1="192.5" y1="328.5" x2="192.5" y2="336.4"/>
<line x1="195.5" y1="311.9" x2="195.5" y2="321.0"/>
<line x1="196.5" y1="309.1" x2="196.5" y2="321.0"/>
<line x1="196.5" y1="328.5" x2="196.5" y2="338.3"/>
<line x1="197.5" y1="311.7" x2="197.5" y2="321.0"/>
<line x1="198.5" y1="313.3" x2="198.5" y2="321.0"/>
<line x1="198.5" y1="328.5" x2="198.5" y2="335.5"/>
<line x1="199.5" y1="312.7" x2="199.5" y2="321.0"/>
<line x1="200.5" y1="328.5" x2="200.5" y2="338.6"/>
<line x1="201.5" y1="317.5" x2="201.5" y2="321.0"/>
<line x1="202.5" y1="313.7" x2="202.5" y2="321.0"/>
<line x1="204.5" y1="311.4" x2="204.5" y2="321.0"/>
<line x1="204.5" y1="328.5" x2="204.5" y2="333.5"/>
<line x1="206.5" y1="328.5" x2="206.5" y2="333.2"/>
<line x1="207.5" y1="313.6" x2="207.5" y2="321.0"/>
<line x1="207.5" y1="328.5" x2="207.5" y2="334.2"/>
<line x1="208.5" y1="328.5" x2="208.5" y2="333.6"/>
<line x1="210.5" y1="317.2" x2="210.5" y2="321.0"/>
<line x1="210.5" y1="328.5" x2="210.5" y2="331.4"/>
<line x1="212.5" y1="314.1" x2="212.5" y2="321.0"/>
<line x1="213.5" y1="310.8" x2="213.5" y2="321.0"/>
<line x1="214.5" y1="312.0" x2="214.5" y2="321.0"/>
<line x1="215.5" y1="316.2" x2="215.5" y2="327.0"/>
<line x1="215.5" y1="333.0" x2="215.5" y2="339.7"/>
<line x1="216.5" y1="320.6" x2="216.5" y2="327.0"/>
<line x1="218.5" y1="333.0" x2="218.5" y2="337.2"/>
<line x1="219.5" y1="333.0" x2="219.5" y2="344.6"/>
<line x1="223.5" y1="323.2" x2="223.5" y2="327.0"/>
<line x1="224.5" y1="320.6" x2="224.5" y2="327.0"/>
<line x1="225.5" y1="323.2" x2="225.5" y2="327.0"/>
<line x1="225.5" y1="333.0" x2="225.5" y2="338.6"/>
<line x1="226.5" y1="321.5" x2="226.5" y2="327.0"/>
<line x1="226.5" y1="333.0" x2="226.5" y2="339.2"/>
<line x1="228.5" y1="324.8" x2="228.5" y2="327.0"/>
<line x1="230.5" y1="343.5" x2="230.5" y2="346.0"/>
<line x1="231.5" y1="336.5" x2="231.5" y2="342.0"/>
<line x1="231.5" y1="343.5" x2="231.5" y2="346.9"/>
<line x1="236.5" y1="338.5" x2="236.5" y2="342.0"/>
<line x1="236.5" y1="343.5" x2="236.5" y2="345.6"/>
<line x1="238.5" y1="334.4" x2="238.5" y2="337.0"/>
<line x1="247.5" y1="339.7" x2="247.5" y2="341.8"/>
<line x1="248.5" y1="344.0" x2="248.5" y2="350.0"/>
<line x1="250.5" y1="335.7" x2="250.5" y2="342.0"/>
<line x1="256.5" y1="338.8" x2="256.5" y2="342.0"/>
<line x1="260.5" y1="335.0" x2="260.5" y2="342.0"/>
<line x1="260.5" y1="344.0" x2="260.5" y2="346.7"/>
<line x1="262.5" y1="337.2" x2="262.5" y2="342.0"/>
<line x1="265.5" y1="337.7" x2="265.5" y2="342.0"/>
<line x1="266.5" y1="344.0" x2="266.5" y2="348.2"/>
<line x1="269.5" y1="338.9" x2="269.5" y2="342.0"/>
<line x1="270.5" y1="344.2" x2="270.5" y2="346.7"/>
<line x1="271.5" y1="338.5" x2="271.5" y2="346.7"/>
<line x1="272.5" y1="340.6" x2="272.5" y2="346.7"/>
<line x1="272.5" y1="348.0" x2="272.5" y2="355.3"/>
<line x1="274.5" y1="344.5" x2="274.5" y2="346.7"/>
<line x1="275.5" y1="343.4" x2="275.5" y2="346.7"/>
<line x1="275.5" y1="348.0" x2="275.5" y2="351.1"/>
<line x1="277.5" y1="343.0" x2="277.5" y2="346.7"/>
<line x1="278.5" y1="340.6" x2="278.5" y2="346.7"/>
<line x1="279.5" y1="348.0" x2="279.5" y2="353.7"/>
<line x1="281.5" y1="340.1" x2="281.5" y2="346.7"/>
<line x1="281.5" y1="348.0" x2="281.5" y2="353.2"/>
<line x1="282.5" y1="348.0" x2="282.5" y2="351.8"/>
<line x1="284.5" y1="343.5" x2="284.5" y2="346.7"/>
<line x1="284.5" y1="348.0" x2="284.5" y2="351.9"/>
<line x1="289.5" y1="341.5" x2="289.5" y2="346.7"/>
<line x1="290.5" y1="348.0" x2="290.5" y2="350.2"/>
<line x1="292.5" y1="343.7" x2="292.5" y2="346.7"/>
<line x1="293.5" y1="348.0" x2="293.5" y2="353.3"/>
<line x1="295.5" y1="348.0" x2="295.5" y2="351.2"/>
<line x1="296.5" y1="348.0" x2="296.5" y2="355.6"/>
<line x1="297.5" y1="343.5" x2="297.5" y2="346.7"/>
<line x1="300.5" y1="348.0" x2="300.5" y2="355.4"/>
<line x1="301.5" y1="343.6" x2="301.5" y2="346.7"/>
<line x1="301.5" y1="348.0" x2="301.5" y2="350.2"/>
<line x1="303.5" y1="344.4" x2="303.5" y2="346.7"/>
<line x1="305.5" y1="344.0" x2="305.5" y2="346.7"/>
<line x1="305.5" y1="348.0" x2="305.5" y2="351.2"/>
<line x1="306.5" y1="343.4" x2="306.5" y2="346.7"/>
<line x1="307.5" y1="343.6" x2="307.5" y2="346.7"/>
<line x1="308.5" y1="348.0" x2="308.5" y2="353.7"/>
<line x1="310.5" y1="348.0" x2="310.5" y2="354.0"/>
<line x1="311.5" y1="342.5" x2="311.5" y2="346.7"/>
<line x1="311.5" y1="348.0" x2="311.5" y2="355.8"/>
<line x1="314.5" y1="342.2" x2="314.5" y2="346.7"/>
<line x1="316.5" y1="348.0" x2="316.5" y2="351.8"/>
<line x1="317.5" y1="335.1" x2="317.5" y2="342.0"/>
<line x1="319.5" y1="337.4" x2="319.5" y2="342.0"/>
<line x1="320.5" y1="343.0" x2="320.5" y2="351.4"/>
<line x1="322.5" y1="336.1" x2="322.5" y2="342.0"/>
<line x1="326.5" y1="343.0" x2="326.5" y2="347.6"/>
<line x1="327.5" y1="343.0" x2="327.5" y2="350.1"/>
<line x1="328.5" y1="335.9" x2="328.5" y2="342.0"/>
<line x1="328.5" y1="343.0" x2="328.5" y2="347.1"/>
<line x1="329.5" y1="343.0" x2="329.5" y2="347.9"/>
<line x1="331.5" y1="337.6" x2="331.5" y2="342.0"/>
<line x1="332.5" y1="334.5" x2="332.5" y2="342.0"/>
<line x1="332.5" y1="343.0" x2="332.5" y2="348.6"/>
<line x1="333.5" y1="340.0" x2="333.5" y2="342.0"/>
<line x1="333.5" y1="343.0" x2="333.5" y2="345.0"/>
<line x1="334.5" y1="338.2" x2="334.5" y2="342.0"/>
<line x1="335.5" y1="343.0" x2="335.5" y2="349.7"/>
<line x1="336.5" y1="331.9" x2="336.5" y2="337.0"/>
<line x1="338.5" y1="338.5" x2="338.5" y2="343.1"/>
<line x1="339.5" y1="330.2" x2="339.5" y2="337.0"/>
<line x1="340.5" y1="338.5" x2="340.5" y2="344.4"/>
<line x1="341.5" y1="338.5" x2="341.5" y2="343.6"/>
<line x1="342.5" y1="334.8" x2="342.5" y2="337.0"/>
<line x1="343.5" y1="331.3" x2="343.5" y2="337.0"/>
<line x1="345.5" y1="334.5" x2="345.5" y2="337.0"/>
<line x1="345.5" y1="338.5" x2="345.5" y2="342.8"/>
<line x1="348.5" y1="338.5" x2="348.5" y2="343.7"/>
<line x1="349.5" y1="333.9" x2="349.5" y2="337.0"/>
<line x1="349.5" y1="338.5" x2="349.5" y2="341.3"/>
<line x1="350.5" y1="332.3" x2="350.5" y2="337.0"/>
<line x1="350.5" y1="338.5" x2="350.5" y2="343.5"/>
<line x1="352.5" y1="331.6" x2="352.5" y2="337.0"/>
<line x1="358.5" y1="327.6" x2="358.5" y2="332.0"/>
<line x1="358.5" y1="333.0" x2="358.5" y2="338.0"/>
<line x1="360.5" y1="329.3" x2="360.5" y2="332.0"/>
<line x1="368.5" y1="328.0" x2="368.5" y2="332.0"/>
<line x1="368.5" y1="333.0" x2="368.5" y2="338.4"/>
<line x1="369.5" y1="329.3" x2="369.5" y2="332.0"/>
<line x1="373.5" y1="324.9" x2="373.5" y2="327.0"/>
<line x1="374.5" y1="328.7" x2="374.5" y2="331.4"/>
<line x1="376.5" y1="321.6" x2="376.5" y2="327.0"/>
<line x1="376.5" y1="328.7" x2="376.5" y2="332.9"/>
<line x1="377.5" y1="328.7" x2="377.5" y2="335.4"/>
<line x1="378.5" y1="328.7" x2="378.5" y2="334.6"/>
<line x1="379.5" y1="324.8" x2="379.5" y2="327.0"/>
<line x1="381.5" y1="323.8" x2="381.5" y2="326.0"/>
<line x1="384.5" y1="316.3" x2="384.5" y2="321.5"/>
<line x1="384.5" y1="323.8" x2="384.5" y2="330.4"/>
<line x1="388.5" y1="312.2" x2="388.5" y2="316.7"/>
<line x1="388.5" y1="317.8" x2="388.5" y2="322.5"/>
<line x1="390.5" y1="311.9" x2="390.5" y2="316.7"/>
<line x1="391.5" y1="311.0" x2="391.5" y2="316.7"/>
<line x1="394.5" y1="317.8" x2="394.5" y2="320.3"/>
<line x1="395.5" y1="310.6" x2="395.5" y2="316.7"/>
<line x1="397.5" y1="313.0" x2="397.5" y2="319.9"/>
<line x1="398.5" y1="313.0" x2="398.5" y2="318.5"/>
<line x1="409.5" y1="308.1" x2="409.5" y2="311.7"/>
<line x1="409.5" y1="313.0" x2="409.5" y2="319.0"/>
<line x1="411.5" y1="313.0" x2="411.5" y2="315.7"/>
<line x1="413.5" y1="308.4" x2="413.5" y2="311.7"/>
<line x1="414.5" y1="305.3" x2="414.5" y2="311.7"/>
<line x1="415.5" y1="313.0" x2="415.5" y2="316.5"/>
<line x1="416.5" y1="313.0" x2="416.5" y2="318.6"/>
<line x1="417.5" y1="306.5" x2="417.5" y2="311.7"/>
<line x1="418.5" y1="313.0" x2="418.5" y2="315.6"/>
<line x1="419.5" y1="305.7" x2="419.5" y2="311.7"/>
<line x1="420.5" y1="307.4" x2="420.5" y2="311.7"/>
<line x1="421.5" y1="313.0" x2="421.5" y2="317.1"/>
<line x1="425.5" y1="305.7" x2="425.5" y2="311.7"/>
<line x1="425.5" y1="313.0" x2="425.5" y2="317.8"/>
<line x1="426.5" y1="309.2" x2="426.5" y2="311.7"/>
<line x1="427.5" y1="304.7" x2="427.5" y2="311.7"/>
<line x1="431.5" y1="313.0" x2="431.5" y2="317.7"/>
<line x1="435.5" y1="308.2" x2="435.5" y2="310.9"/>
<line x1="436.5" y1="304.2" x2="436.5" y2="307.0"/>
<line x1="439.5" y1="301.1" x2="439.5" y2="307.0"/>
<line x1="441.5" y1="302.3" x2="441.5" y2="307.0"/>
<line x1="441.5" y1="308.2" x2="441.5" y2="314.6"/>
<line x1="442.5" y1="303.7" x2="442.5" y2="307.0"/>
<line x1="445.5" y1="302.7" x2="445.5" y2="307.0"/>
<line x1="445.5" y1="308.2" x2="445.5" y2="313.6"/>
<line x1="446.5" y1="304.3" x2="446.5" y2="307.0"/>
<line x1="446.5" y1="308.2" x2="446.5" y2="312.9"/>
<line x1="447.5" y1="308.2" x2="447.5" y2="315.1"/>
<line x1="449.5" y1="300.9" x2="449.5" y2="307.0"/>
<line x1="450.5" y1="301.2" x2="450.5" y2="307.0"/>
<line x1="451.5" y1="308.2" x2="451.5" y2="310.8"/>
<line x1="452.5" y1="303.8" x2="452.5" y2="307.0"/>
<line x1="454.5" y1="303.2" x2="454.5" y2="307.0"/>
<line x1="454.5" y1="308.2" x2="454.5" y2="313.4"/>
<line x1="460.5" y1="303.2" x2="460.5" y2="305.4"/>
<line x1="462.5" y1="299.6" x2="462.5" y2="302.0"/>
<line x1="464.5" y1="298.4" x2="464.5" y2="302.0"/>
<line x1="465.5" y1="303.2" x2="465.5" y2="308.2"/>
<line x1="467.5" y1="299.5" x2="467.5" y2="302.0"/>
<line x1="467.5" y1="303.2" x2="467.5" y2="309.0"/>
<line x1="468.5" y1="296.4" x2="468.5" y2="302.0"/>
<line x1="469.5" y1="299.1" x2="469.5" y2="302.0"/>
<line x1="473.5" y1="303.2" x2="473.5" y2="309.3"/>
<line x1="476.5" y1="295.0" x2="476.5" y2="302.0"/>
<line x1="476.5" y1="303.2" x2="476.5" y2="309.2"/>
<line x1="477.5" y1="298.5" x2="477.5" y2="302.0"/>
<line x1="479.5" y1="295.5" x2="479.5" y2="302.0"/>
<line x1="480.5" y1="303.2" x2="480.5" y2="306.6"/>
<line x1="483.5" y1="298.7" x2="483.5" y2="301.9"/>
<line x1="485.5" y1="294.7" x2="485.5" y2="297.0"/>
<line x1="485.5" y1="298.7" x2="485.5" y2="302.8"/>
<line x1="488.5" y1="291.6" x2="488.5" y2="297.0"/>
<line x1="490.5" y1="294.7" x2="490.5" y2="297.0"/>
<line x1="491.5" y1="298.7" x2="491.5" y2="300.8"/>
<line x1="492.5" y1="298.7" x2="492.5" y2="305.1"/>
<line x1="494.5" y1="298.7" x2="494.5" y2="301.2"/>
<line x1="503.5" y1="298.7" x2="503.5" y2="304.5"/>
<line x1="505.5" y1="298.7" x2="505.5" y2="303.1"/>
<line x1="507.5" y1="292.2" x2="507.5" y2="297.0"/>
<line x1="507.5" y1="298.7" x2="507.5" y2="304.5"/>
<line x1="510.5" y1="293.9" x2="510.5" y2="297.0"/>
<line x1="512.5" y1="294.6" x2="512.5" y2="297.0"/>
<line x1="513.5" y1="298.7" x2="513.5" y2="305.4"/>
<line x1="514.5" y1="293.7" x2="514.5" y2="298.1"/>
<line x1="515.5" y1="293.7" x2="515.5" y2="300.1"/>
<line x1="516.5" y1="293.7" x2="516.5" y2="297.9"/>
<line x1="517.5" y1="285.8" x2="517.5" y2="291.2"/>
<line x1="517.5" y1="293.7" x2="517.5" y2="297.4"/>
<line x1="522.5" y1="288.0" x2="522.5" y2="291.2"/>
<line x1="525.5" y1="293.7" x2="525.5" y2="296.2"/>
<line x1="526.5" y1="285.5" x2="526.5" y2="291.2"/>
<line x1="527.5" y1="288.0" x2="527.5" y2="291.2"/>
<line x1="527.5" y1="293.7" x2="527.5" y2="299.6"/>
<line x1="528.5" y1="293.7" x2="528.5" y2="296.2"/>
<line x1="532.5" y1="293.7" x2="532.5" y2="298.3"/>
<line x1="534.5" y1="293.7" x2="534.5" y2="300.6"/>
<line x1="535.5" y1="288.1" x2="535.5" y2="291.2"/>
<line x1="539.5" y1="285.5" x2="539.5" y2="291.2"/>
<line x1="540.5" y1="293.7" x2="540.5" y2="296.0"/>
<line x1="546.5" y1="284.7" x2="546.5" y2="291.2"/>
<line x1="548.5" y1="286.9" x2="548.5" y2="291.2"/>
<line x1="549.5" y1="293.7" x2="549.5" y2="295.7"/>
<line x1="550.5" y1="293.7" x2="550.5" y2="296.8"/>
<line x1="551.5" y1="287.1" x2="551.5" y2="291.2"/>
<line x1="553.5" y1="284.9" x2="553.5" y2="291.2"/>
<line x1="556.5" y1="285.9" x2="556.5" y2="291.2"/>
<line x1="556.5" y1="293.7" x2="556.5" y2="299.1"/>
<line x1="561.5" y1="286.1" x2="561.5" y2="291.2"/>
<line x1="563.5" y1="293.7" x2="563.5" y2="299.9"/>
<line x1="568.5" y1="293.7" x2="568.5" y2="297.3"/>
<line x1="570.5" y1="293.7" x2="570.5" y2="299.2"/>
<line x1="571.5" y1="287.7" x2="571.5" y2="291.2"/>
<line x1="572.5" y1="286.2" x2="572.5" y2="291.2"/>
<line x1="574.5" y1="293.7" x2="574.5" y2="298.4"/>
<line x1="575.5" y1="289.1" x2="575.5" y2="291.2"/>
<line x1="578.5" y1="286.5" x2="578.5" y2="291.2"/>
<line x1="578.5" y1="293.7" x2="578.5" y2="297.4"/>
<line x1="582.5" y1="293.7" x2="582.5" y2="296.4"/>
<line x1="585.5" y1="286.4" x2="585.5" y2="291.2"/>
<line x1="586.5" y1="293.7" x2="586.5" y2="300.5"/>
<line x1="587.5" y1="293.7" x2="587.5" y2="300.6"/>
<line x1="588.5" y1="293.7" x2="588.5" y2="299.0"/>
<line x1="589.5" y1="288.1" x2="589.5" y2="291.2"/>
<line x1="593.5" y1="293.7" x2="593.5" y2="299.8"/>
<line x1="594.5" y1="286.3" x2="594.5" y2="291.2"/>
<line x1="594.5" y1="293.7" x2="594.5" y2="296.2"/>
<line x1="595.5" y1="308.2" x2="595.5" y2="313.8"/>
<line x1="596.5" y1="308.2" x2="596.5" y2="314.2"/>
<line x1="597.5" y1="300.6" x2="597.5" y2="307.0"/>
<line x1="599.5" y1="301.5" x2="599.5" y2="307.0"/>
<line x1="599.5" y1="308.2" x2="599.5" y2="312.8"/>
<line x1="601.5" y1="301.4" x2="601.5" y2="307.0"/>
<line x1="604.5" y1="308.2" x2="604.5" y2="311.6"/>
<line x1="607.5" y1="289.2" x2="607.5" y2="291.2"/>
<line x1="609.5" y1="293.7" x2="609.5" y2="296.5"/>
<line x1="610.5" y1="286.1" x2="610.5" y2="291.2"/>
<line x1="612.5" y1="288.1" x2="612.5" y2="291.2"/>
<line x1="612.5" y1="293.7" x2="612.5" y2="295.8"/>
<line x1="616.5" y1="293.7" x2="616.5" y2="295.8"/>
<line x1="618.5" y1="285.7" x2="618.5" y2="291.2"/>
<line x1="618.5" y1="293.7" x2="618.5" y2="299.1"/>
<line x1="620.5" y1="288.4" x2="620.5" y2="291.2"/>
<line x1="622.5" y1="293.7" x2="622.5" y2="297.5"/>
<line x1="623.5" y1="293.7" x2="623.5" y2="297.2"/>
<line x1="624.5" y1="284.8" x2="624.5" y2="291.2"/>
<line x1="625.5" y1="287.4" x2="625.5" y2="291.2"/>
<line x1="625.5" y1="293.7" x2="625.5" y2="297.9"/>
<line x1="627.5" y1="286.5" x2="627.5" y2="291.2"/>
<line x1="627.5" y1="293.7" x2="627.5" y2="297.9"/>
<line x1="628.5" y1="293.7" x2="628.5" y2="299.8"/>
<line x1="629.5" y1="287.2" x2="629.5" y2="291.2"/>
<line x1="630.5" y1="286.4" x2="630.5" y2="291.2"/>
<line x1="632.5" y1="293.7" x2="632.5" y2="296.7"/>
<line x1="634.5" y1="293.7" x2="634.5" y2="299.2"/>
<line x1="635.5" y1="293.7" x2="635.5" y2="296.3"/>
<line x1="638.5" y1="293.7" x2="638.5" y2="299.3"/>
<line x1="639.5" y1="293.7" x2="639.5" y2="295.7"/>
<line x1="640.5" y1="288.8" x2="640.5" y2="291.2"/>
<line x1="642.5" y1="286.0" x2="642.5" y2="291.2"/>
<line x1="642.5" y1="293.7" x2="642.5" y2="296.4"/>
<line x1="645.5" y1="287.7" x2="645.5" y2="291.2"/>
<line x1="645.5" y1="293.7" x2="645.5" y2="298.2"/>
<line x1="646.5" y1="284.9" x2="646.5" y2="291.2"/>
<line x1="650.5" y1="287.5" x2="650.5" y2="291.2"/>
<line x1="650.5" y1="293.7" x2="650.5" y2="299.5"/>
<line x1="655.5" y1="293.7" x2="655.5" y2="298.8"/>
<line x1="656.5" y1="285.8" x2="656.5" y2="291.2"/>
<line x1="657.5" y1="293.7" x2="657.5" y2="298.5"/>
<line x1="658.5" y1="286.9" x2="658.5" y2="291.2"/>
<line x1="658.5" y1="293.7" x2="658.5" y2="297.8"/>
<line x1="661.5" y1="293.7" x2="661.5" y2="299.6"/>
<line x1="663.5" y1="286.9" x2="663.5" y2="291.2"/>
<line x1="663.5" y1="298.5" x2="663.5" y2="301.1"/>
<line x1="664.5" y1="287.1" x2="664.5" y2="291.2"/>
<line x1="664.5" y1="298.5" x2="664.5" y2="304.6"/>
<line x1="666.5" y1="298.5" x2="666.5" y2="301.9"/>
<line x1="669.5" y1="288.2" x2="669.5" y2="291.2"/>
<line x1="681.5" y1="298.0" x2="681.5" y2="300.2"/>
<line x1="683.5" y1="298.0" x2="683.5" y2="301.0"/>
<line x1="684.5" y1="294.9" x2="684.5" y2="297.0"/>
<line x1="685.5" y1="298.0" x2="685.5" y2="300.1"/>
<line x1="686.5" y1="298.0" x2="686.5" y2="303.1"/>
<line x1="688.5" y1="292.0" x2="688.5" y2="297.0"/>
<line x1="689.5" y1="298.0" x2="689.5" y2="304.3"/>
<line x1="692.5" y1="298.0" x2="692.5" y2="303.2"/>
<line x1="693.5" y1="298.0" x2="693.5" y2="300.2"/>
<line x1="694.5" y1="298.0" x2="694.5" y2="300.5"/>
<line x1="695.5" y1="298.0" x2="695.5" y2="303.8"/>
<line x1="696.5" y1="293.2" x2="696.5" y2="297.0"/>
<line x1="702.5" y1="296.8" x2="702.5" y2="302.0"/>
<line x1="703.5" y1="303.5" x2="703.5" y2="305.6"/>
<line x1="709.5" y1="299.4" x2="709.5" y2="302.0"/>
<line x1="713.5" y1="296.1" x2="713.5" y2="302.0"/>
<line x1="713.5" y1="303.5" x2="713.5" y2="306.6"/>
<line x1="714.5" y1="299.0" x2="714.5" y2="302.0"/>
<line x1="714.5" y1="303.5" x2="714.5" y2="305.9"/>
<line x1="715.5" y1="303.5" x2="715.5" y2="308.7"/>
<line x1="719.5" y1="303.5" x2="719.5" y2="309.2"/>
<line x1="725.5" y1="300.2" x2="725.5" y2="307.0"/>
<line x1="728.5" y1="299.9" x2="728.5" y2="302.0"/>
<line x1="734.5" y1="296.6" x2="734.5" y2="302.0"/>
<line x1="736.5" y1="303.5" x2="736.5" y2="308.1"/>
<line x1="737.5" y1="303.5" x2="737.5" y2="309.9"/>
<line x1="738.5" y1="296.4" x2="738.5" y2="302.0"/>
<line x1="738.5" y1="303.5" x2="738.5" y2="308.1"/>
<line x1="739.5" y1="303.5" x2="739.5" y2="309.8"/>
<line x1="740.5" y1="295.1" x2="740.5" y2="302.0"/>
<line x1="742.5" y1="303.5" x2="742.5" y2="307.3"/>
<line x1="744.5" y1="297.3" x2="744.5" y2="302.0"/>
<line x1="748.5" y1="297.3" x2="748.5" y2="302.0"/>
<line x1="749.5" y1="296.8" x2="749.5" y2="302.0"/>
<line x1="750.5" y1="303.5" x2="750.5" y2="306.7"/>
<line x1="752.5" y1="303.5" x2="752.5" y2="308.6"/>
<line x1="754.5" y1="303.5" x2="754.5" y2="310.4"/>
<line x1="756.5" y1="296.4" x2="756.5" y2="302.0"/>
<line x1="757.5" y1="308.0" x2="757.5" y2="314.3"/>
<line x1="758.5" y1="300.6" x2="758.5" y2="307.0"/>
<line x1="762.5" y1="308.0" x2="762.5" y2="314.9"/>
<line x1="763.5" y1="304.7" x2="763.5" y2="307.0"/>
<line x1="764.5" y1="304.9" x2="764.5" y2="307.0"/>
<line x1="764.5" y1="308.0" x2="764.5" y2="312.5"/>
<line x1="765.5" y1="313.0" x2="765.5" y2="315.8"/>
<line x1="766.5" y1="304.7" x2="766.5" y2="307.0"/>
<line x1="770.5" y1="313.0" x2="770.5" y2="316.9"/>
<line x1="771.5" y1="313.0" x2="771.5" y2="319.6"/>
<line x1="772.5" y1="313.0" x2="772.5" y2="317.5"/>
<line x1="773.5" y1="328.5" x2="773.5" y2="333.4"/>
<line x1="774.5" y1="313.8" x2="774.5" y2="317.0"/>
<line x1="774.5" y1="328.5" x2="774.5" y2="333.0"/>
<line x1="775.5" y1="328.5" x2="775.5" y2="333.9"/>
<line x1="779.5" y1="328.5" x2="779.5" y2="330.9"/>
<line x1="780.5" y1="328.5" x2="780.5" y2="330.9"/>
<line x1="781.5" y1="313.0" x2="781.5" y2="321.0"/>
<line x1="781.5" y1="328.5" x2="781.5" y2="333.4"/>
<line x1="782.5" y1="328.5" x2="782.5" y2="332.1"/>
<line x1="784.5" y1="313.0" x2="784.5" y2="320.9"/>
<line x1="786.5" y1="313.0" x2="786.5" y2="323.6"/>
<line x1="787.5" y1="308.6" x2="787.5" y2="312.0"/>
<line x1="787.5" y1="313.0" x2="787.5" y2="317.0"/>
<line x1="788.5" y1="306.9" x2="788.5" y2="312.0"/>
<line x1="789.5" y1="301.0" x2="789.5" y2="312.0"/>
<line x1="790.5" y1="301.5" x2="790.5" y2="312.0"/>
<line x1="790.5" y1="313.0" x2="790.5" y2="319.4"/>
<line x1="791.5" y1="302.8" x2="791.5" y2="312.0"/>
<line x1="792.5" y1="313.0" x2="792.5" y2="320.8"/>
<line x1="793.5" y1="305.7" x2="793.5" y2="312.0"/>
<line x1="794.5" y1="304.7" x2="794.5" y2="312.0"/>
<line x1="794.5" y1="313.0" x2="794.5" y2="316.6"/>
<line x1="795.5" y1="313.0" x2="795.5" y2="319.4"/>
<line x1="796.5" y1="303.4" x2="796.5" y2="312.0"/>
<line x1="796.5" y1="313.0" x2="796.5" y2="322.5"/>
<line x1="797.5" y1="296.4" x2="797.5" y2="307.0"/>
<line x1="797.5" y1="313.0" x2="797.5" y2="316.2"/>
<line x1="798.5" y1="302.2" x2="798.5" y2="307.0"/>
<line x1="798.5" y1="313.0" x2="798.5" y2="325.4"/>
<line x1="799.5" y1="296.9" x2="799.5" y2="307.0"/>
<line x1="799.5" y1="313.0" x2="799.5" y2="321.9"/>
<line x1="800.5" y1="302.6" x2="800.5" y2="307.0"/>
<line x1="800.5" y1="313.0" x2="800.5" y2="315.3"/>
<line x1="802.5" y1="304.9" x2="802.5" y2="307.0"/>
<line x1="803.5" y1="313.0" x2="803.5" y2="323.4"/>
<line x1="804.5" y1="302.4" x2="804.5" y2="307.0"/>
<line x1="805.5" y1="313.0" x2="805.5" y2="320.6"/>
<line x1="806.5" y1="313.0" x2="806.5" y2="320.8"/>
<line x1="807.5" y1="309.3" x2="807.5" y2="312.0"/>
<line x1="807.5" y1="313.0" x2="807.5" y2="320.8"/>
<line x1="808.5" y1="304.9" x2="808.5" y2="312.0"/>
<line x1="809.5" y1="302.9" x2="809.5" y2="312.0"/>
<line x1="809.5" y1="313.0" x2="809.5" y2="324.3"/>
<line x1="810.5" y1="300.3" x2="810.5" y2="312.0"/>
<line x1="812.5" y1="318.0" x2="812.5" y2="322.7"/>
<line x1="813.5" y1="302.7" x2="813.5" y2="312.0"/>
<line x1="813.5" y1="318.0" x2="813.5" y2="326.7"/>
<line x1="814.5" y1="303.3" x2="814.5" y2="312.0"/>
<line x1="814.5" y1="318.0" x2="814.5" y2="322.6"/>
<line x1="815.5" y1="312.3" x2="815.5" y2="322.0"/>
<line x1="816.5" y1="316.5" x2="816.5" y2="322.0"/>
<line x1="816.5" y1="324.0" x2="816.5" y2="330.7"/>
<line x1="820.5" y1="315.1" x2="820.5" y2="322.0"/>
<line x1="821.5" y1="310.9" x2="821.5" y2="322.0"/>
<line x1="821.5" y1="324.0" x2="821.5" y2="332.1"/>
<line x1="822.5" y1="316.0" x2="822.5" y2="322.0"/>
<line x1="822.5" y1="324.0" x2="822.5" y2="329.1"/>
<line x1="823.5" y1="309.5" x2="823.5" y2="322.0"/>
<line x1="823.5" y1="324.0" x2="823.5" y2="335.9"/>
<line x1="825.5" y1="319.8" x2="825.5" y2="322.0"/>
<line x1="826.5" y1="316.7" x2="826.5" y2="322.0"/>
<line x1="828.5" y1="324.0" x2="828.5" y2="331.5"/>
<line x1="829.5" y1="315.8" x2="829.5" y2="322.0"/>
<line x1="829.5" y1="324.0" x2="829.5" y2="335.0"/>
<line x1="830.5" y1="312.7" x2="830.5" y2="322.0"/>
<line x1="830.5" y1="324.0" x2="830.5" y2="328.8"/>
<line x1="831.5" y1="313.6" x2="831.5" y2="322.0"/>
<line x1="831.5" y1="324.0" x2="831.5" y2="333.8"/>
<line x1="832.5" y1="309.7" x2="832.5" y2="322.0"/>
<line x1="833.5" y1="310.4" x2="833.5" y2="322.0"/>
<line x1="833.5" y1="324.0" x2="833.5" y2="329.2"/>
<line x1="834.5" y1="318.8" x2="834.5" y2="327.4"/>
<line x1="835.5" y1="328.8" x2="835.5" y2="341.2"/>
<line x1="836.5" y1="323.1" x2="836.5" y2="327.4"/>
<line x1="838.5" y1="322.6" x2="838.5" y2="327.4"/>
<line x1="838.5" y1="328.8" x2="838.5" y2="335.9"/>
<line x1="839.5" y1="319.0" x2="839.5" y2="327.4"/>
<line x1="839.5" y1="328.8" x2="839.5" y2="333.6"/>
<line x1="840.5" y1="325.1" x2="840.5" y2="327.4"/>
<line x1="840.5" y1="328.8" x2="840.5" y2="338.9"/>
<line x1="841.5" y1="315.5" x2="841.5" y2="327.4"/>
<line x1="841.5" y1="328.8" x2="841.5" y2="338.0"/>
<line x1="842.5" y1="315.5" x2="842.5" y2="327.4"/>
<line x1="842.5" y1="328.8" x2="842.5" y2="340.1"/>
<line x1="843.5" y1="314.9" x2="843.5" y2="327.4"/>
<line x1="844.5" y1="317.4" x2="844.5" y2="327.4"/>
<line x1="844.5" y1="328.8" x2="844.5" y2="335.0"/>
<line x1="845.5" y1="321.7" x2="845.5" y2="327.4"/>
<line x1="845.5" y1="328.8" x2="845.5" y2="332.6"/>
<line x1="846.5" y1="324.4" x2="846.5" y2="327.4"/>
<line x1="847.5" y1="317.6" x2="847.5" y2="327.4"/>
<line x1="847.5" y1="328.8" x2="847.5" y2="341.5"/>
<line x1="850.5" y1="328.8" x2="850.5" y2="337.3"/>
<line x1="851.5" y1="321.4" x2="851.5" y2="327.4"/>
<line x1="851.5" y1="328.8" x2="851.5" y2="337.6"/>
<line x1="852.5" y1="317.1" x2="852.5" y2="327.4"/>
<line x1="852.5" y1="328.8" x2="852.5" y2="335.5"/>
<line x1="853.5" y1="316.1" x2="853.5" y2="327.4"/>
<line x1="854.5" y1="318.1" x2="854.5" y2="327.4"/>
<line x1="854.5" y1="336.0" x2="854.5" y2="344.8"/>
<line x1="855.5" y1="314.9" x2="855.5" y2="327.4"/>
<line x1="855.5" y1="336.0" x2="855.5" y2="341.0"/>
<line x1="856.5" y1="314.9" x2="856.5" y2="327.4"/>
<line x1="856.5" y1="336.0" x2="856.5" y2="340.7"/>
<line x1="857.5" y1="318.0" x2="857.5" y2="327.4"/>
<line x1="858.5" y1="321.8" x2="858.5" y2="327.4"/>
<line x1="859.5" y1="317.8" x2="859.5" y2="327.4"/>
<line x1="860.5" y1="324.8" x2="860.5" y2="327.4"/>
<line x1="860.5" y1="336.0" x2="860.5" y2="341.3"/>
<line x1="861.5" y1="322.2" x2="861.5" y2="327.4"/>
<line x1="861.5" y1="336.0" x2="861.5" y2="338.3"/>
<line x1="862.5" y1="317.1" x2="862.5" y2="327.4"/>
<line x1="862.5" y1="336.0" x2="862.5" y2="339.0"/>
<line x1="863.5" y1="336.0" x2="863.5" y2="339.5"/>
<line x1="864.5" y1="322.1" x2="864.5" y2="327.4"/>
<line x1="865.5" y1="319.6" x2="865.5" y2="327.4"/>
<line x1="865.5" y1="336.0" x2="865.5" y2="338.3"/>
<line x1="866.5" y1="341.0" x2="866.5" y2="352.1"/>
<line x1="867.5" y1="323.2" x2="867.5" y2="330.0"/>
<line x1="867.5" y1="341.0" x2="867.5" y2="344.7"/>
<line x1="868.5" y1="317.7" x2="868.5" y2="330.0"/>
<line x1="869.5" y1="341.0" x2="869.5" y2="351.1"/>
<line x1="870.5" y1="322.7" x2="870.5" y2="330.0"/>
<line x1="870.5" y1="341.0" x2="870.5" y2="350.1"/>
<line x1="871.5" y1="320.5" x2="871.5" y2="330.0"/>
<line x1="871.5" y1="341.0" x2="871.5" y2="346.2"/>
<line x1="872.5" y1="319.6" x2="872.5" y2="330.0"/>
<line x1="872.5" y1="341.0" x2="872.5" y2="346.1"/>
</g>
<g stroke="#22f022" stroke-width="1">
<line x1="670.5" y1="289.3" x2="670.5" y2="295.3"/>
<line x1="672.5" y1="289.3" x2="672.5" y2="295.3"/>
<line x1="673.5" y1="289.3" x2="673.5" y2="295.3"/>
<line x1="675.5" y1="289.3" x2="675.5" y2="295.3"/>
<line x1="676.5" y1="289.3" x2="676.5" y2="295.3"/>
<line x1="678.5" y1="289.3" x2="678.5" y2="295.3"/>
<line x1="679.5" y1="289.3" x2="679.5" y2="295.3"/>
</g>
<g stroke="#22ee22" stroke-width="1.2">
<line x1="187.6" y1="329.5" x2="187.6" y2="396.0"/>
<line x1="203.0" y1="329.5" x2="203.0" y2="401.0"/>
<line x1="237.3" y1="344.5" x2="237.3" y2="366.0"/>
<line x1="302.6" y1="349.0" x2="302.6" y2="366.0"/>
<line x1="312.8" y1="349.0" x2="312.8" y2="366.0"/>
<line x1="350.4" y1="339.5" x2="350.4" y2="370.5"/>
<line x1="415.2" y1="314.0" x2="415.2" y2="375.0"/>
<line x1="436.8" y1="309.2" x2="436.8" y2="335.0"/>
<line x1="473.8" y1="304.2" x2="473.8" y2="319.0"/>
<line x1="481.5" y1="304.2" x2="481.5" y2="345.5"/>
<line x1="497.5" y1="299.7" x2="497.5" y2="370.5"/>
<line x1="523.5" y1="294.7" x2="523.5" y2="320.0"/>
<line x1="550.0" y1="294.7" x2="550.0" y2="320.0"/>
<line x1="533.0" y1="294.7" x2="533.0" y2="305.0"/>
<line x1="540.5" y1="294.7" x2="540.5" y2="300.0"/>
<line x1="556.0" y1="294.7" x2="556.0" y2="300.0"/>
<line x1="579.0" y1="294.7" x2="579.0" y2="300.0"/>
<line x1="585.0" y1="294.7" x2="585.0" y2="305.0"/>
<line x1="619.0" y1="294.7" x2="619.0" y2="371.0"/>
<line x1="667.0" y1="299.5" x2="667.0" y2="371.0"/>
<line x1="700.3" y1="304.5" x2="700.3" y2="340.5"/>
<line x1="704.3" y1="304.5" x2="704.3" y2="340.5"/>
<line x1="718.7" y1="304.5" x2="718.7" y2="371.0"/>
<line x1="728.8" y1="304.5" x2="728.8" y2="355.0"/>
<line x1="752.8" y1="304.5" x2="752.8" y2="355.0"/>
<line x1="733.6" y1="304.5" x2="733.6" y2="315.0"/>
<line x1="781.5" y1="329.5" x2="781.5" y2="346.0"/>
<line x1="812.5" y1="319.0" x2="812.5" y2="350.6"/>
<line x1="826.3" y1="325.0" x2="826.3" y2="410.8"/>
<line x1="835.6" y1="329.8" x2="835.6" y2="350.6"/>
<line x1="842.4" y1="329.8" x2="842.4" y2="457.0"/>
<line x1="849.0" y1="329.8" x2="849.0" y2="350.0"/>
</g>
<rect x="573.00" y="80.00" width="54.00" height="52.00" fill="#ffffff"/>
<g fill="none" stroke="#1c1c8e" stroke-width="1.3"><path d="M584.98,123.20 A24.1,22.6 0 1 1 616.23,88.80 M618.01,90.48 A24.1,22.6 0 0 1 623.97,108.75 M623.67,110.30 A24.1,22.6 0 0 1 615.22,123.20"/><path d="M584.98,123.2 L615.22,123.2"/></g>
<g fill="none" stroke="#2a2a90" stroke-width="0.8"><path d="M591.8,87.2 L604.5,120 M591.8,87.2 L593,99 L594,110 L603.5,119.5 M592.5,88 L596,96"/><path d="M601,104 L609.5,103.3 L605,108" stroke-width="0.9"/><ellipse cx="589.3" cy="113" rx="2.3" ry="2.0"/><path d="M583,123 Q588,120 590,115.5 M587,123 Q590,119 592,116.5"/></g>
<g fill="none" stroke="#d01010" stroke-width="1.5"><path d="M612.3,96.5 Q615.2,100.5 616.4,106"/><path d="M615.2,93.8 Q618.8,99.5 619.8,107.5"/></g>
<text x="575.50" y="130.40" font-family="Liberation Serif" font-size="6.80" fill="#c81414" font-weight="bold" font-style="normal" text-anchor="start" textLength="9.5" lengthAdjust="spacingAndGlyphs" stroke="#c81414" stroke-width="0.45">DX</text>
<text x="585.00" y="130.40" font-family="Liberation Serif" font-size="6.80" fill="#1c1c8e" font-weight="bold" font-style="normal" text-anchor="start" textLength="40.5" lengthAdjust="spacingAndGlyphs" stroke="#1c1c8e" stroke-width="0.45">SATCS.COM</text>
<text x="719.75" y="69.75" font-family="Liberation Sans" font-size="14.10" fill="#000" font-weight="normal" font-style="normal" text-anchor="start" textLength="249.7" lengthAdjust="spacingAndGlyphs">PF Prodelin 450 cm / Lucenec-Slovakia</text>
<text x="719.40" y="92.60" font-family="Liberation Sans" font-size="14.10" fill="#000" font-weight="normal" font-style="normal" text-anchor="start" textLength="229.1" lengthAdjust="spacingAndGlyphs">f=11599,760 MHz_H_ : Med Radio</text>
<text x="747.50" y="115.75" font-family="Liberation Sans" font-size="14.10" fill="#000" font-weight="normal" font-style="normal" text-anchor="start" textLength="167.3" lengthAdjust="spacingAndGlyphs">Locked Uptime : 24:19:08</text>
<rect x="1053.6" y="93.8" width="139.8" height="642.2" fill="none" stroke="#dadada" stroke-width="1" rx="1.5"/>
<rect x="1057.00" y="86.00" width="90.00" height="12.00" fill="#f0f0f0"/>
<text x="1060.00" y="97.30" font-family="Liberation Sans" font-size="11.80" fill="#2c2cbc" font-weight="normal" font-style="normal" text-anchor="start" textLength="84.7" lengthAdjust="spacingAndGlyphs" stroke="#2c2cbc" stroke-width="0.35">Transponder (AU) [BS]</text>
<text x="1060.40" y="123.80" font-family="Liberation Sans" font-size="10.84" fill="#555555" font-weight="normal" font-style="normal" text-anchor="start" textLength="42.9" lengthAdjust="spacingAndGlyphs" stroke="#555555" stroke-width="0.35">Frequency:</text>
<text x="1121.10" y="123.80" font-family="Liberation Sans" font-size="10.84" fill="#2e8e2e" font-weight="bold" font-style="normal" text-anchor="start" textLength="60.3" lengthAdjust="spacingAndGlyphs" stroke="#2e8e2e" stroke-width="0.35">11599,571 MHz</text>
<text x="1060.40" y="156.80" font-family="Liberation Sans" font-size="10.84" fill="#555555" font-weight="normal" font-style="normal" text-anchor="start" textLength="48.9" lengthAdjust="spacingAndGlyphs" stroke="#555555" stroke-width="0.35">Polarization:</text>
<text x="1121.10" y="156.80" font-family="Liberation Sans" font-size="10.84" fill="#2e8e2e" font-weight="bold" font-style="normal" text-anchor="start" textLength="41.5" lengthAdjust="spacingAndGlyphs" stroke="#2e8e2e" stroke-width="0.35">Horizontal</text>
<text x="1060.40" y="190.60" font-family="Liberation Sans" font-size="10.84" fill="#555555" font-weight="normal" font-style="normal" text-anchor="start" textLength="50.2" lengthAdjust="spacingAndGlyphs" stroke="#555555" stroke-width="0.35">Symbol Rate:</text>
<text x="1121.10" y="190.60" font-family="Liberation Sans" font-size="10.84" fill="#2e8e2e" font-weight="bold" font-style="normal" text-anchor="start" textLength="50.3" lengthAdjust="spacingAndGlyphs" stroke="#2e8e2e" stroke-width="0.35">171,001 KS/s</text>
<text x="1060.40" y="223.60" font-family="Liberation Sans" font-size="10.84" fill="#555555" font-weight="normal" font-style="normal" text-anchor="start" textLength="37.6" lengthAdjust="spacingAndGlyphs" stroke="#555555" stroke-width="0.35">Standard:</text>
<text x="1121.10" y="223.60" font-family="Liberation Sans" font-size="10.84" fill="#2e8e2e" font-weight="bold" font-style="normal" text-anchor="start" textLength="24.9" lengthAdjust="spacingAndGlyphs" stroke="#2e8e2e" stroke-width="0.35">DVB-S</text>
<text x="1060.40" y="256.50" font-family="Liberation Sans" font-size="10.84" fill="#555555" font-weight="normal" font-style="normal" text-anchor="start" textLength="48.5" lengthAdjust="spacingAndGlyphs" stroke="#555555" stroke-width="0.35">Modulation:</text>
<text x="1121.10" y="256.50" font-family="Liberation Sans" font-size="10.84" fill="#2e8e2e" font-weight="bold" font-style="normal" text-anchor="start" textLength="21.7" lengthAdjust="spacingAndGlyphs" stroke="#2e8e2e" stroke-width="0.35">QPSK</text>
<text x="1060.40" y="289.50" font-family="Liberation Sans" font-size="10.84" fill="#555555" font-weight="normal" font-style="normal" text-anchor="start" textLength="16.9" lengthAdjust="spacingAndGlyphs" stroke="#555555" stroke-width="0.35">FEC:</text>
<text x="1121.10" y="289.50" font-family="Liberation Sans" font-size="10.84" fill="#2e8e2e" font-weight="bold" font-style="normal" text-anchor="start" textLength="13.2" lengthAdjust="spacingAndGlyphs" stroke="#2e8e2e" stroke-width="0.35">3/4</text>
<text x="1060.40" y="322.40" font-family="Liberation Sans" font-size="10.84" fill="#555555" font-weight="normal" font-style="normal" text-anchor="start" textLength="30.1" lengthAdjust="spacingAndGlyphs" stroke="#555555" stroke-width="0.35">RollOff:</text>
<text x="1121.10" y="322.40" font-family="Liberation Sans" font-size="10.84" fill="#2e8e2e" font-weight="bold" font-style="normal" text-anchor="start" textLength="15.9" lengthAdjust="spacingAndGlyphs" stroke="#2e8e2e" stroke-width="0.35">0.35</text>
<text x="1060.40" y="356.30" font-family="Liberation Sans" font-size="10.84" fill="#555555" font-weight="normal" font-style="normal" text-anchor="start" textLength="19.3" lengthAdjust="spacingAndGlyphs" stroke="#555555" stroke-width="0.35">Pilot:</text>
<text x="1121.10" y="356.30" font-family="Liberation Sans" font-size="10.84" fill="#5a5a5a" font-weight="normal" font-style="normal" text-anchor="start" textLength="15.1" lengthAdjust="spacingAndGlyphs" stroke="#5a5a5a" stroke-width="0.35">OFF</text>
<text x="1060.40" y="389.20" font-family="Liberation Sans" font-size="10.84" fill="#555555" font-weight="normal" font-style="normal" text-anchor="start" textLength="38.9" lengthAdjust="spacingAndGlyphs" stroke="#555555" stroke-width="0.35">Spectrum:</text>
<text x="1121.10" y="389.20" font-family="Liberation Sans" font-size="10.84" fill="#2e8e2e" font-weight="bold" font-style="normal" text-anchor="start" textLength="32.8" lengthAdjust="spacingAndGlyphs" stroke="#2e8e2e" stroke-width="0.35">Inverted</text>
<text x="1060.40" y="422.20" font-family="Liberation Sans" font-size="10.84" fill="#555555" font-weight="normal" font-style="normal" text-anchor="start" textLength="46.1" lengthAdjust="spacingAndGlyphs" stroke="#555555" stroke-width="0.35">Frame Type:</text>
<text x="1121.10" y="422.20" font-family="Liberation Sans" font-size="10.84" fill="#5a5a5a" font-weight="normal" font-style="normal" text-anchor="start" textLength="47.9" lengthAdjust="spacingAndGlyphs" stroke="#5a5a5a" stroke-width="0.35">Long Frame</text>
<text x="1060.40" y="455.10" font-family="Liberation Sans" font-size="10.84" fill="#555555" font-weight="normal" font-style="normal" text-anchor="start" textLength="48.3" lengthAdjust="spacingAndGlyphs" stroke="#555555" stroke-width="0.35">Code Mode:</text>
<text x="1121.10" y="455.10" font-family="Liberation Sans" font-size="10.84" fill="#5a5a5a" font-weight="normal" font-style="normal" text-anchor="start" textLength="18.9" lengthAdjust="spacingAndGlyphs" stroke="#5a5a5a" stroke-width="0.35">CCM</text>
<text x="1060.40" y="488.00" font-family="Liberation Sans" font-size="10.84" fill="#555555" font-weight="normal" font-style="normal" text-anchor="start" textLength="47.9" lengthAdjust="spacingAndGlyphs" stroke="#555555" stroke-width="0.35">Stream type:</text>
<text x="1121.10" y="488.00" font-family="Liberation Sans" font-size="10.84" fill="#5a5a5a" font-weight="normal" font-style="normal" text-anchor="start" textLength="37.7" lengthAdjust="spacingAndGlyphs" stroke="#5a5a5a" stroke-width="0.35">Transport</text>
<text x="1060.40" y="521.40" font-family="Liberation Sans" font-size="10.84" fill="#555555" font-weight="normal" font-style="normal" text-anchor="start" textLength="17.3" lengthAdjust="spacingAndGlyphs" stroke="#555555" stroke-width="0.35">ISSYI</text>
<text x="1121.10" y="521.40" font-family="Liberation Sans" font-size="10.84" fill="#5a5a5a" font-weight="normal" font-style="normal" text-anchor="start" textLength="15.1" lengthAdjust="spacingAndGlyphs" stroke="#5a5a5a" stroke-width="0.35">OFF</text>
<text x="1060.40" y="554.90" font-family="Liberation Sans" font-size="10.84" fill="#555555" font-weight="normal" font-style="normal" text-anchor="start" textLength="18.8" lengthAdjust="spacingAndGlyphs" stroke="#555555" stroke-width="0.35">NPD:</text>
<text x="1121.10" y="554.90" font-family="Liberation Sans" font-size="10.84" fill="#5a5a5a" font-weight="normal" font-style="normal" text-anchor="start" textLength="15.1" lengthAdjust="spacingAndGlyphs" stroke="#5a5a5a" stroke-width="0.35">OFF</text>
<text x="1060.40" y="587.60" font-family="Liberation Sans" font-size="10.84" fill="#555555" font-weight="normal" font-style="normal" text-anchor="start" textLength="33.3" lengthAdjust="spacingAndGlyphs" stroke="#555555" stroke-width="0.35">RF Level:</text>
<text x="1121.10" y="587.60" font-family="Liberation Sans" font-size="10.84" fill="#2e8e2e" font-weight="bold" font-style="normal" text-anchor="start" textLength="32.8" lengthAdjust="spacingAndGlyphs" stroke="#2e8e2e" stroke-width="0.35">-47 dBm</text>
<text x="1060.40" y="620.50" font-family="Liberation Sans" font-size="10.84" fill="#555555" font-weight="normal" font-style="normal" text-anchor="start" textLength="29.5" lengthAdjust="spacingAndGlyphs" stroke="#555555" stroke-width="0.35">BitRate:</text>
<text x="1121.10" y="620.50" font-family="Liberation Sans" font-size="10.84" fill="#2e8e2e" font-weight="bold" font-style="normal" text-anchor="start" textLength="50.3" lengthAdjust="spacingAndGlyphs" stroke="#2e8e2e" stroke-width="0.35">0,255 Mbit/s</text>
<text x="1060.40" y="653.50" font-family="Liberation Sans" font-size="10.84" fill="#555555" font-weight="normal" font-style="normal" text-anchor="start" textLength="52.6" lengthAdjust="spacingAndGlyphs" stroke="#555555" stroke-width="0.35">CarrierWidth:</text>
<text x="1121.10" y="653.50" font-family="Liberation Sans" font-size="10.84" fill="#2e8e2e" font-weight="bold" font-style="normal" text-anchor="start" textLength="41.5" lengthAdjust="spacingAndGlyphs" stroke="#2e8e2e" stroke-width="0.35">0,230 MHz</text>
<text x="1060.40" y="703.30" font-family="Liberation Sans" font-size="10.84" fill="#555555" font-weight="normal" font-style="normal" text-anchor="start" textLength="28.2" lengthAdjust="spacingAndGlyphs" stroke="#555555" stroke-width="0.35">MIS (0):</text>
<rect x="1121.9" y="690.2" width="56.1" height="18.8" fill="#f9f9f9" stroke="#e8e8e8" stroke-width="0.8"/>
<text x="1124.30" y="703.30" font-family="Liberation Sans" font-size="10.84" fill="#7a7a7a" font-weight="normal" font-style="normal" text-anchor="start" textLength="23.9" lengthAdjust="spacingAndGlyphs" stroke="#7a7a7a" stroke-width="0.35">Single</text>
<path d="M1169.5,698 L1172.5,701.2 L1175.5,698" fill="none" stroke="#aaaaaa" stroke-width="0.9"/>
<rect x="1054.6" y="745.6" width="137.7" height="24" rx="3" fill="#ffffff" stroke="#d2d2d2" stroke-width="1"/>
<rect x="1117.5" y="750" width="12" height="13.6" rx="1.2" fill="#f4f4f4" stroke="#9a9a9a" stroke-width="0.9"/>
<rect x="1118.00" y="753.50" width="11.00" height="2.20" fill="#3a7fd0"/>
<rect x="1118.00" y="758.00" width="11.00" height="0.80" fill="#9a9a9a"/>
<rect x="1118.00" y="760.80" width="11.00" height="0.80" fill="#9a9a9a"/>
<rect x="10.40" y="780.50" width="96.30" height="10.14" fill="url(#bt_g)"/>
<rect x="10.40" y="790.64" width="96.30" height="7.96" fill="url(#bb_g)"/>
<rect x="10.40" y="780.50" width="96.30" height="18.10" rx="1.5" fill="none" stroke="#b8b8b8" stroke-width="1.1"/>
<rect x="10.40" y="803.80" width="96.30" height="10.30" fill="url(#bt_g)"/>
<rect x="10.40" y="814.10" width="96.30" height="8.10" fill="url(#bb_g)"/>
<rect x="10.40" y="803.80" width="96.30" height="18.40" rx="1.5" fill="none" stroke="#b8b8b8" stroke-width="1.1"/>
<rect x="110.60" y="780.50" width="49.00" height="10.14" fill="url(#bt_p)"/>
<rect x="110.60" y="790.64" width="49.00" height="7.96" fill="url(#bb_p)"/>
<rect x="159.60" y="780.50" width="195.10" height="10.14" fill="url(#bt_y)"/>
<rect x="159.60" y="790.64" width="195.10" height="7.96" fill="url(#bb_y)"/>
<rect x="354.70" y="780.50" width="151.10" height="10.14" fill="url(#bt_g)"/>
<rect x="354.70" y="790.64" width="151.10" height="7.96" fill="url(#bb_g)"/>
<rect x="505.80" y="780.50" width="92.70" height="10.14" fill="url(#bt_n)"/>
<rect x="505.80" y="790.64" width="92.70" height="7.96" fill="url(#bb_n)"/>
<rect x="110.60" y="780.50" width="487.90" height="18.10" rx="1.5" fill="none" stroke="#b8b8b8" stroke-width="1.1"/>
<rect x="110.60" y="803.80" width="49.00" height="10.30" fill="url(#bt_p)"/>
<rect x="110.60" y="814.10" width="49.00" height="8.10" fill="url(#bb_p)"/>
<rect x="159.60" y="803.80" width="195.10" height="10.30" fill="url(#bt_y)"/>
<rect x="159.60" y="814.10" width="195.10" height="8.10" fill="url(#bb_y)"/>
<rect x="354.70" y="803.80" width="243.80" height="10.30" fill="url(#bt_g)"/>
<rect x="354.70" y="814.10" width="243.80" height="8.10" fill="url(#bb_g)"/>
<rect x="110.60" y="803.80" width="487.90" height="18.40" rx="1.5" fill="none" stroke="#b8b8b8" stroke-width="1.1"/>
<rect x="602.60" y="780.50" width="52.10" height="10.14" fill="url(#bt_p)"/>
<rect x="602.60" y="790.64" width="52.10" height="7.96" fill="url(#bb_p)"/>
<rect x="654.70" y="780.50" width="85.80" height="10.14" fill="url(#bt_y)"/>
<rect x="654.70" y="790.64" width="85.80" height="7.96" fill="url(#bb_y)"/>
<rect x="740.50" y="780.50" width="103.50" height="10.14" fill="url(#bt_g)"/>
<rect x="740.50" y="790.64" width="103.50" height="7.96" fill="url(#bb_g)"/>
<rect x="602.60" y="780.50" width="241.40" height="18.10" rx="1.5" fill="none" stroke="#b8b8b8" stroke-width="1.1"/>
<rect x="602.60" y="803.80" width="133.20" height="10.30" fill="url(#bt_p)"/>
<rect x="602.60" y="814.10" width="133.20" height="8.10" fill="url(#bb_p)"/>
<rect x="735.80" y="803.80" width="122.20" height="10.30" fill="url(#bt_y)"/>
<rect x="735.80" y="814.10" width="122.20" height="8.10" fill="url(#bb_y)"/>
<rect x="858.00" y="803.80" width="142.30" height="10.30" fill="url(#bt_g)"/>
<rect x="858.00" y="814.10" width="142.30" height="8.10" fill="url(#bb_g)"/>
<rect x="1000.30" y="803.80" width="90.00" height="10.30" fill="url(#bt_n)"/>
<rect x="1000.30" y="814.10" width="90.00" height="8.10" fill="url(#bb_n)"/>
<rect x="602.60" y="803.80" width="487.70" height="18.40" rx="1.5" fill="none" stroke="#b8b8b8" stroke-width="1.1"/>
<rect x="848.20" y="780.50" width="52.00" height="10.14" fill="url(#bt_p)"/>
<rect x="848.20" y="790.64" width="52.00" height="7.96" fill="url(#bb_p)"/>
<rect x="900.20" y="780.50" width="86.70" height="10.14" fill="url(#bt_y)"/>
<rect x="900.20" y="790.64" width="86.70" height="7.96" fill="url(#bb_y)"/>
<rect x="986.90" y="780.50" width="103.40" height="10.14" fill="url(#bt_g)"/>
<rect x="986.90" y="790.64" width="103.40" height="7.96" fill="url(#bb_g)"/>
<rect x="848.20" y="780.50" width="242.10" height="18.10" rx="1.5" fill="none" stroke="#b8b8b8" stroke-width="1.1"/>
<rect x="1094.50" y="780.50" width="97.00" height="10.14" fill="url(#bt_g)"/>
<rect x="1094.50" y="790.64" width="97.00" height="7.96" fill="url(#bb_g)"/>
<rect x="1094.50" y="780.50" width="97.00" height="18.10" rx="1.5" fill="none" stroke="#b8b8b8" stroke-width="1.1"/>
<rect x="1094.50" y="803.80" width="97.00" height="10.30" fill="url(#bt_g)"/>
<rect x="1094.50" y="814.10" width="97.00" height="8.10" fill="url(#bb_g)"/>
<rect x="1094.50" y="803.80" width="97.00" height="18.40" rx="1.5" fill="none" stroke="#b8b8b8" stroke-width="1.1"/>
<text x="12.20" y="794.20" font-family="Liberation Sans" font-size="9.88" fill="#1e1e1e" font-weight="normal" font-style="normal" text-anchor="start" textLength="28.0" lengthAdjust="spacingAndGlyphs" stroke="#1e1e1e" stroke-width="0.35">Present</text>
<text x="12.20" y="817.70" font-family="Liberation Sans" font-size="9.88" fill="#1e1e1e" font-weight="normal" font-style="normal" text-anchor="start" textLength="17.1" lengthAdjust="spacingAndGlyphs" stroke="#1e1e1e" stroke-width="0.35">Lock</text>
<text x="114.80" y="794.20" font-family="Liberation Sans" font-size="9.88" fill="#1e1e1e" font-weight="normal" font-style="normal" text-anchor="start" textLength="39.1" lengthAdjust="spacingAndGlyphs" stroke="#1e1e1e" stroke-width="0.35">Level: 81%</text>
<text x="114.80" y="817.70" font-family="Liberation Sans" font-size="9.88" fill="#1e1e1e" font-weight="normal" font-style="normal" text-anchor="start" textLength="51.4" lengthAdjust="spacingAndGlyphs" stroke="#1e1e1e" stroke-width="0.35">Quality: 100%</text>
<text x="604.50" y="794.20" font-family="Liberation Sans" font-size="9.88" fill="#1e1e1e" font-weight="normal" font-style="normal" text-anchor="start" textLength="61.5" lengthAdjust="spacingAndGlyphs" stroke="#1e1e1e" stroke-width="0.35">preBER: &lt;1.0E-7</text>
<text x="607.20" y="817.70" font-family="Liberation Sans" font-size="9.88" fill="#1e1e1e" font-weight="normal" font-style="normal" text-anchor="start" textLength="165.3" lengthAdjust="spacingAndGlyphs" stroke="#1e1e1e" stroke-width="0.35">SNR: 16,3 dB (Margin: 10,8 dB | Very Good)</text>
<text x="850.40" y="794.20" font-family="Liberation Sans" font-size="9.88" fill="#1e1e1e" font-weight="normal" font-style="normal" text-anchor="start" textLength="48.6" lengthAdjust="spacingAndGlyphs" stroke="#1e1e1e" stroke-width="0.35">BER: &lt;1.0E-7</text>
<text x="1096.50" y="794.20" font-family="Liberation Sans" font-size="9.88" fill="#1e1e1e" font-weight="normal" font-style="normal" text-anchor="start" textLength="70.5" lengthAdjust="spacingAndGlyphs" stroke="#1e1e1e" stroke-width="0.35">Input (~235 Kbps)</text>
<text x="1096.50" y="817.70" font-family="Liberation Sans" font-size="9.88" fill="#1e1e1e" font-weight="normal" font-style="normal" text-anchor="start" textLength="29.0" lengthAdjust="spacingAndGlyphs" stroke="#1e1e1e" stroke-width="0.35">Sync TS</text>
<rect x="3.00" y="828.60" width="1197.00" height="1.20" fill="#dcdcdc"/>
<rect x="3.00" y="829.80" width="1197.00" height="0.80" fill="#fbfbfb"/>
<rect x="394.00" y="832.00" width="1.10" height="18.00" fill="#c6c6c6"/>
<rect x="791.50" y="832.00" width="1.10" height="18.00" fill="#c6c6c6"/>
<rect x="1187.30" y="832.00" width="1.10" height="18.00" fill="#c6c6c6"/>
<text x="142.25" y="844.60" font-family="Liberation Sans" font-size="11.39" fill="#222" font-weight="normal" font-style="normal" text-anchor="start" textLength="113.6" lengthAdjust="spacingAndGlyphs" stroke="#222" stroke-width="0.35">Locked -&gt; Uptime: 24:19:08</text>
<text x="552.50" y="844.60" font-family="Liberation Sans" font-size="11.39" fill="#222" font-weight="normal" font-style="normal" text-anchor="start" textLength="83.5" lengthAdjust="spacingAndGlyphs" stroke="#222" stroke-width="0.35">SYNC 0 | TEI 0 | CC 0</text>
<text x="908.50" y="844.60" font-family="Liberation Sans" font-size="11.39" fill="#222" font-weight="normal" font-style="normal" text-anchor="start" textLength="162.5" lengthAdjust="spacingAndGlyphs" stroke="#222" stroke-width="0.35">Best signal: 18,4 dB (2024-08-06 07:23)</text>
<rect x="1196.00" y="839.00" width="1.20" height="1.20" fill="#a0a0a0"/>
<rect x="1193.00" y="842.00" width="1.20" height="1.20" fill="#a0a0a0"/>
<rect x="1196.00" y="842.00" width="1.20" height="1.20" fill="#a0a0a0"/>
<rect x="1190.00" y="845.00" width="1.20" height="1.20" fill="#a0a0a0"/>
<rect x="1193.00" y="845.00" width="1.20" height="1.20" fill="#a0a0a0"/>
<rect x="1196.00" y="845.00" width="1.20" height="1.20" fill="#a0a0a0"/>
</svg>
</body></html>
